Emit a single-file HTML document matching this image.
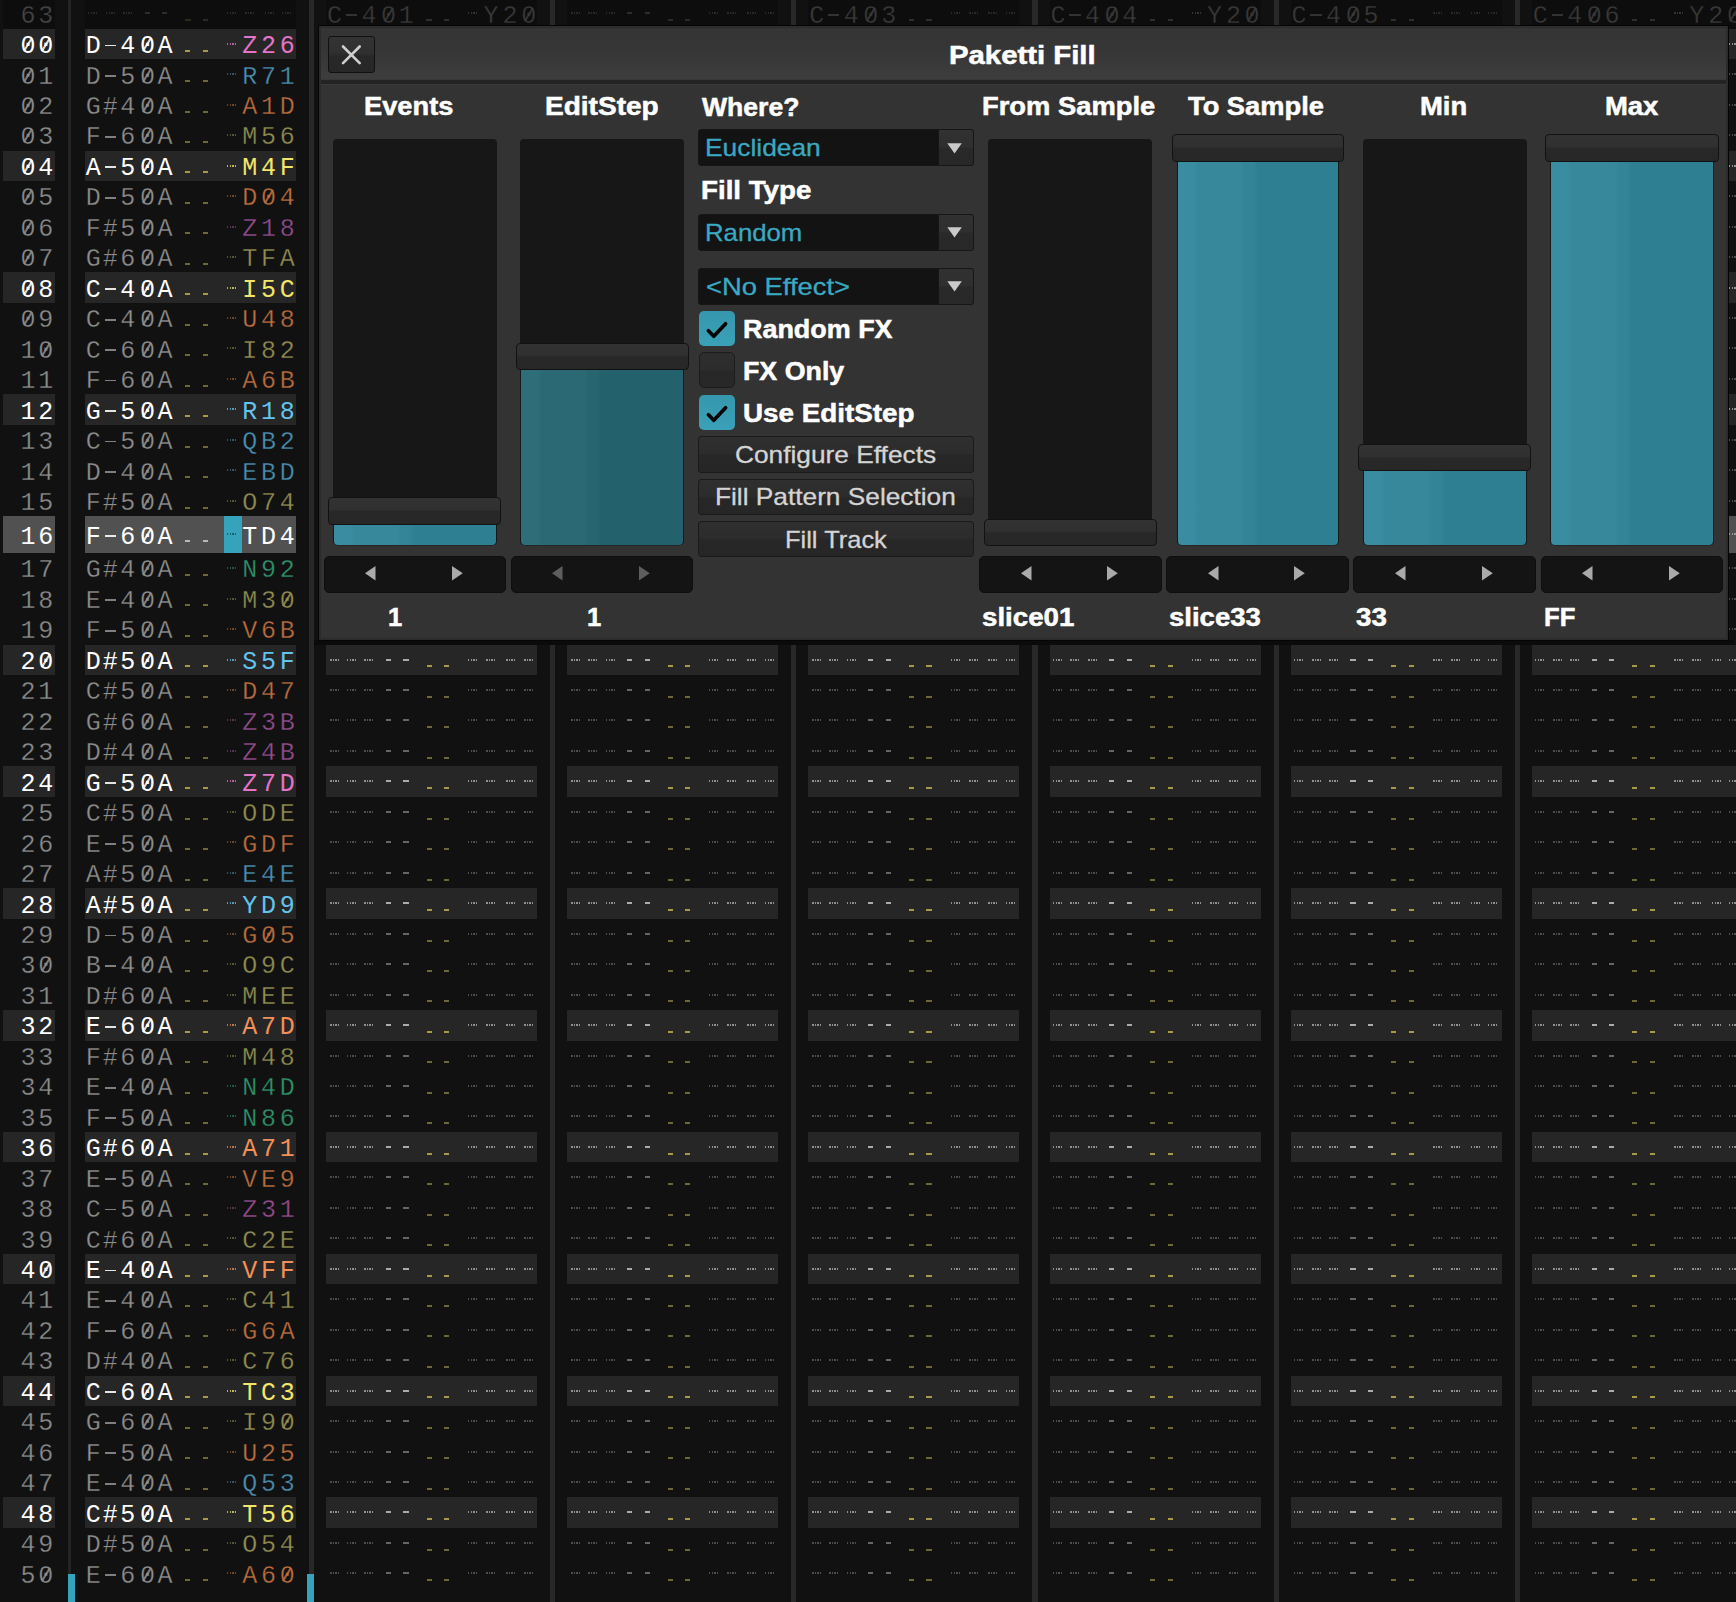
<!DOCTYPE html><html><head><meta charset="utf-8"><style>
*{margin:0;padding:0;box-sizing:border-box}
html,body{width:1736px;height:1602px;overflow:hidden;background:#111111;position:relative}
body{font-family:'Liberation Sans',sans-serif}
.t{position:absolute;white-space:nowrap;transform-origin:0 0;font-family:'Liberation Sans',sans-serif}
.a{position:absolute}
.m{position:absolute;font-family:'Liberation Mono',monospace;font-size:25px;line-height:25px;width:20px;text-align:center;white-space:nowrap;transform:scaleY(1.06);transform-origin:50% 12.5px}
.dg{position:absolute;width:9.5px;height:2px;background:repeating-linear-gradient(90deg,currentColor 0 1.5px,transparent 1.5px 2.6px);opacity:.85}
.z::after{content:'';position:absolute;left:9.1px;top:3.2px;width:1.5px;height:15px;background:currentColor;opacity:.85;transform:rotate(33deg)}
.dash{position:absolute;width:11.4px;height:1.8px;background:currentColor;opacity:.88}
.ds{position:absolute;width:5.2px;height:1.7px;background:currentColor}
</style></head><body>
<div class="a" style="left:68px;top:0;width:2.5px;height:1602px;background:#242424"></div>
<div class="a" style="left:309px;top:0;width:5.1px;height:1602px;background:#282828"></div>
<div class="a" style="left:550.15px;top:0;width:5.1px;height:1602px;background:#282828"></div>
<div class="a" style="left:791.3px;top:0;width:5.1px;height:1602px;background:#282828"></div>
<div class="a" style="left:1032.45px;top:0;width:5.1px;height:1602px;background:#282828"></div>
<div class="a" style="left:1273.6px;top:0;width:5.1px;height:1602px;background:#282828"></div>
<div class="a" style="left:1514.75px;top:0;width:5.1px;height:1602px;background:#282828"></div>
<div class="a" style="left:3px;top:-1.66px;width:52px;height:30.46px;background:#0d0d0d"></div>
<div class="m" style="left:18.1px;top:3.61px;color:#454545;-webkit-text-stroke:0.3px #0d0d0d">6</div>
<div class="m" style="left:35.8px;top:3.61px;color:#454545;-webkit-text-stroke:0.3px #0d0d0d">3</div>
<div class="a" style="left:85px;top:-1.66px;width:211px;height:30.46px;background:#0d0d0d"></div>
<div class="dg" style="left:88.4px;top:12px;color:#2e2e2e"></div>
<div class="dg" style="left:105.8px;top:12px;color:#2e2e2e"></div>
<div class="dg" style="left:123.3px;top:12px;color:#2e2e2e"></div>
<div class="ds" style="left:144.7px;top:12px;color:#2e2e2e"></div>
<div class="ds" style="left:162.3px;top:12px;color:#2e2e2e"></div>
<div class="ds" style="left:185.4px;top:19px;color:#2a2a20"></div>
<div class="ds" style="left:203px;top:19px;color:#2a2a20"></div>
<div class="dg" style="left:227.1px;top:12px;color:#2e2e2e"></div>
<div class="dg" style="left:245.1px;top:12px;color:#2e2e2e"></div>
<div class="dg" style="left:264.8px;top:12px;color:#2e2e2e"></div>
<div class="dg" style="left:282.4px;top:12px;color:#2e2e2e"></div>
<div class="a" style="left:326.15px;top:-1.66px;width:211px;height:30.46px;background:#0d0d0d"></div>
<div class="m" style="left:324.45px;top:3.61px;color:#393939;-webkit-text-stroke:0.3px #0d0d0d">C</div>
<div class="dash" style="left:345.75px;top:14.16px;color:#393939"></div>
<div class="m" style="left:358.95px;top:3.61px;color:#393939;-webkit-text-stroke:0.3px #0d0d0d">4</div>
<div class="m z" style="left:378.55px;top:3.61px;color:#393939;-webkit-text-stroke:0.3px #0d0d0d">0</div>
<div class="m" style="left:396.35px;top:3.61px;color:#393939;-webkit-text-stroke:0.3px #0d0d0d">1</div>
<div class="ds" style="left:426.35px;top:19px;color:#2e2e2e"></div>
<div class="ds" style="left:444.15px;top:19px;color:#2e2e2e"></div>
<div class="dg" style="left:468.15px;top:12px;color:#3a3a3a"></div>
<div class="m" style="left:480.95px;top:3.61px;color:#393939;-webkit-text-stroke:0.3px #0d0d0d">Y</div>
<div class="m" style="left:499.95px;top:3.61px;color:#393939;-webkit-text-stroke:0.3px #0d0d0d">2</div>
<div class="m z" style="left:518.65px;top:3.61px;color:#393939;-webkit-text-stroke:0.3px #0d0d0d">0</div>
<div class="a" style="left:567.3px;top:-1.66px;width:211px;height:30.46px;background:#0d0d0d"></div>
<div class="dg" style="left:570.7px;top:12px;color:#2e2e2e"></div>
<div class="dg" style="left:588.1px;top:12px;color:#2e2e2e"></div>
<div class="dg" style="left:605.6px;top:12px;color:#2e2e2e"></div>
<div class="ds" style="left:627px;top:12px;color:#2e2e2e"></div>
<div class="ds" style="left:644.6px;top:12px;color:#2e2e2e"></div>
<div class="ds" style="left:667.7px;top:19px;color:#2a2a20"></div>
<div class="ds" style="left:685.3px;top:19px;color:#2a2a20"></div>
<div class="dg" style="left:709.4px;top:12px;color:#2e2e2e"></div>
<div class="dg" style="left:727.4px;top:12px;color:#2e2e2e"></div>
<div class="dg" style="left:747.1px;top:12px;color:#2e2e2e"></div>
<div class="dg" style="left:764.7px;top:12px;color:#2e2e2e"></div>
<div class="a" style="left:808.45px;top:-1.66px;width:211px;height:30.46px;background:#0d0d0d"></div>
<div class="m" style="left:806.75px;top:3.61px;color:#393939;-webkit-text-stroke:0.3px #0d0d0d">C</div>
<div class="dash" style="left:828.05px;top:14.16px;color:#393939"></div>
<div class="m" style="left:841.25px;top:3.61px;color:#393939;-webkit-text-stroke:0.3px #0d0d0d">4</div>
<div class="m z" style="left:860.85px;top:3.61px;color:#393939;-webkit-text-stroke:0.3px #0d0d0d">0</div>
<div class="m" style="left:878.65px;top:3.61px;color:#393939;-webkit-text-stroke:0.3px #0d0d0d">3</div>
<div class="ds" style="left:908.65px;top:19px;color:#2e2e2e"></div>
<div class="ds" style="left:926.45px;top:19px;color:#2e2e2e"></div>
<div class="dg" style="left:950.55px;top:12px;color:#2e2e2e"></div>
<div class="dg" style="left:968.55px;top:12px;color:#2e2e2e"></div>
<div class="dg" style="left:988.25px;top:12px;color:#2e2e2e"></div>
<div class="dg" style="left:1005.85px;top:12px;color:#2e2e2e"></div>
<div class="a" style="left:1049.6px;top:-1.66px;width:211px;height:30.46px;background:#0d0d0d"></div>
<div class="m" style="left:1047.9px;top:3.61px;color:#393939;-webkit-text-stroke:0.3px #0d0d0d">C</div>
<div class="dash" style="left:1069.2px;top:14.16px;color:#393939"></div>
<div class="m" style="left:1082.4px;top:3.61px;color:#393939;-webkit-text-stroke:0.3px #0d0d0d">4</div>
<div class="m z" style="left:1102px;top:3.61px;color:#393939;-webkit-text-stroke:0.3px #0d0d0d">0</div>
<div class="m" style="left:1119.8px;top:3.61px;color:#393939;-webkit-text-stroke:0.3px #0d0d0d">4</div>
<div class="ds" style="left:1149.8px;top:19px;color:#2e2e2e"></div>
<div class="ds" style="left:1167.6px;top:19px;color:#2e2e2e"></div>
<div class="dg" style="left:1191.6px;top:12px;color:#3a3a3a"></div>
<div class="m" style="left:1204.4px;top:3.61px;color:#393939;-webkit-text-stroke:0.3px #0d0d0d">Y</div>
<div class="m" style="left:1223.4px;top:3.61px;color:#393939;-webkit-text-stroke:0.3px #0d0d0d">2</div>
<div class="m z" style="left:1242.1px;top:3.61px;color:#393939;-webkit-text-stroke:0.3px #0d0d0d">0</div>
<div class="a" style="left:1290.75px;top:-1.66px;width:211px;height:30.46px;background:#0d0d0d"></div>
<div class="m" style="left:1289.05px;top:3.61px;color:#393939;-webkit-text-stroke:0.3px #0d0d0d">C</div>
<div class="dash" style="left:1310.35px;top:14.16px;color:#393939"></div>
<div class="m" style="left:1323.55px;top:3.61px;color:#393939;-webkit-text-stroke:0.3px #0d0d0d">4</div>
<div class="m z" style="left:1343.15px;top:3.61px;color:#393939;-webkit-text-stroke:0.3px #0d0d0d">0</div>
<div class="m" style="left:1360.95px;top:3.61px;color:#393939;-webkit-text-stroke:0.3px #0d0d0d">5</div>
<div class="ds" style="left:1390.95px;top:19px;color:#2e2e2e"></div>
<div class="ds" style="left:1408.75px;top:19px;color:#2e2e2e"></div>
<div class="dg" style="left:1432.85px;top:12px;color:#2e2e2e"></div>
<div class="dg" style="left:1450.85px;top:12px;color:#2e2e2e"></div>
<div class="dg" style="left:1470.55px;top:12px;color:#2e2e2e"></div>
<div class="dg" style="left:1488.15px;top:12px;color:#2e2e2e"></div>
<div class="a" style="left:1531.9px;top:-1.66px;width:211px;height:30.46px;background:#0d0d0d"></div>
<div class="m" style="left:1530.2px;top:3.61px;color:#393939;-webkit-text-stroke:0.3px #0d0d0d">C</div>
<div class="dash" style="left:1551.5px;top:14.16px;color:#393939"></div>
<div class="m" style="left:1564.7px;top:3.61px;color:#393939;-webkit-text-stroke:0.3px #0d0d0d">4</div>
<div class="m z" style="left:1584.3px;top:3.61px;color:#393939;-webkit-text-stroke:0.3px #0d0d0d">0</div>
<div class="m" style="left:1602.1px;top:3.61px;color:#393939;-webkit-text-stroke:0.3px #0d0d0d">6</div>
<div class="ds" style="left:1632.1px;top:19px;color:#2e2e2e"></div>
<div class="ds" style="left:1649.9px;top:19px;color:#2e2e2e"></div>
<div class="dg" style="left:1673.9px;top:12px;color:#3a3a3a"></div>
<div class="m" style="left:1686.7px;top:3.61px;color:#393939;-webkit-text-stroke:0.3px #0d0d0d">Y</div>
<div class="m" style="left:1705.7px;top:3.61px;color:#393939;-webkit-text-stroke:0.3px #0d0d0d">2</div>
<div class="m z" style="left:1724.4px;top:3.61px;color:#393939;-webkit-text-stroke:0.3px #0d0d0d">0</div>
<div class="a" style="left:3px;top:28.8px;width:52px;height:30.46px;background:#262626"></div>
<div class="m z" style="left:18.1px;top:34.08px;color:#ffffff">0</div>
<div class="m z" style="left:35.8px;top:34.08px;color:#ffffff">0</div>
<div class="a" style="left:85px;top:28.8px;width:211px;height:30.46px;background:#262626"></div>
<div class="m" style="left:83.3px;top:34.08px;color:#ffffff">D</div>
<div class="dash" style="left:104.6px;top:44.63px;color:#ffffff"></div>
<div class="m" style="left:117.8px;top:34.08px;color:#ffffff">4</div>
<div class="m z" style="left:137.4px;top:34.08px;color:#ffffff">0</div>
<div class="m" style="left:155px;top:34.08px;color:#ffffff">A</div>
<div class="ds" style="left:185.2px;top:50px;color:#a89a48"></div>
<div class="ds" style="left:202.9px;top:50px;color:#a89a48"></div>
<div class="dg" style="left:227px;top:43px;color:#e474c8;opacity:.75;height:1.6px"></div>
<div class="m" style="left:239.8px;top:34.08px;color:#e474c8">Z</div>
<div class="m" style="left:258.6px;top:34.08px;color:#e474c8">2</div>
<div class="m" style="left:277.3px;top:34.08px;color:#e474c8">6</div>
<div class="a" style="left:326.15px;top:28.8px;width:211px;height:30.46px;background:#262626"></div>
<div class="dg" style="left:329.55px;top:43px;color:#a4a4a4"></div>
<div class="dg" style="left:346.95px;top:43px;color:#a4a4a4"></div>
<div class="dg" style="left:364.45px;top:43px;color:#a4a4a4"></div>
<div class="ds" style="left:385.85px;top:43px;color:#acacac"></div>
<div class="ds" style="left:403.45px;top:43px;color:#acacac"></div>
<div class="ds" style="left:426.55px;top:50px;color:#a89a48"></div>
<div class="ds" style="left:444.15px;top:50px;color:#a89a48"></div>
<div class="dg" style="left:468.25px;top:43px;color:#a4a4a4"></div>
<div class="dg" style="left:486.25px;top:43px;color:#a4a4a4"></div>
<div class="dg" style="left:505.95px;top:43px;color:#a4a4a4"></div>
<div class="dg" style="left:523.55px;top:43px;color:#a4a4a4"></div>
<div class="a" style="left:567.3px;top:28.8px;width:211px;height:30.46px;background:#262626"></div>
<div class="dg" style="left:570.7px;top:43px;color:#a4a4a4"></div>
<div class="dg" style="left:588.1px;top:43px;color:#a4a4a4"></div>
<div class="dg" style="left:605.6px;top:43px;color:#a4a4a4"></div>
<div class="ds" style="left:627px;top:43px;color:#acacac"></div>
<div class="ds" style="left:644.6px;top:43px;color:#acacac"></div>
<div class="ds" style="left:667.7px;top:50px;color:#a89a48"></div>
<div class="ds" style="left:685.3px;top:50px;color:#a89a48"></div>
<div class="dg" style="left:709.4px;top:43px;color:#a4a4a4"></div>
<div class="dg" style="left:727.4px;top:43px;color:#a4a4a4"></div>
<div class="dg" style="left:747.1px;top:43px;color:#a4a4a4"></div>
<div class="dg" style="left:764.7px;top:43px;color:#a4a4a4"></div>
<div class="a" style="left:808.45px;top:28.8px;width:211px;height:30.46px;background:#262626"></div>
<div class="dg" style="left:811.85px;top:43px;color:#a4a4a4"></div>
<div class="dg" style="left:829.25px;top:43px;color:#a4a4a4"></div>
<div class="dg" style="left:846.75px;top:43px;color:#a4a4a4"></div>
<div class="ds" style="left:868.15px;top:43px;color:#acacac"></div>
<div class="ds" style="left:885.75px;top:43px;color:#acacac"></div>
<div class="ds" style="left:908.85px;top:50px;color:#a89a48"></div>
<div class="ds" style="left:926.45px;top:50px;color:#a89a48"></div>
<div class="dg" style="left:950.55px;top:43px;color:#a4a4a4"></div>
<div class="dg" style="left:968.55px;top:43px;color:#a4a4a4"></div>
<div class="dg" style="left:988.25px;top:43px;color:#a4a4a4"></div>
<div class="dg" style="left:1005.85px;top:43px;color:#a4a4a4"></div>
<div class="a" style="left:1049.6px;top:28.8px;width:211px;height:30.46px;background:#262626"></div>
<div class="dg" style="left:1053px;top:43px;color:#a4a4a4"></div>
<div class="dg" style="left:1070.4px;top:43px;color:#a4a4a4"></div>
<div class="dg" style="left:1087.9px;top:43px;color:#a4a4a4"></div>
<div class="ds" style="left:1109.3px;top:43px;color:#acacac"></div>
<div class="ds" style="left:1126.9px;top:43px;color:#acacac"></div>
<div class="ds" style="left:1150px;top:50px;color:#a89a48"></div>
<div class="ds" style="left:1167.6px;top:50px;color:#a89a48"></div>
<div class="dg" style="left:1191.7px;top:43px;color:#a4a4a4"></div>
<div class="dg" style="left:1209.7px;top:43px;color:#a4a4a4"></div>
<div class="dg" style="left:1229.4px;top:43px;color:#a4a4a4"></div>
<div class="dg" style="left:1247px;top:43px;color:#a4a4a4"></div>
<div class="a" style="left:1290.75px;top:28.8px;width:211px;height:30.46px;background:#262626"></div>
<div class="dg" style="left:1294.15px;top:43px;color:#a4a4a4"></div>
<div class="dg" style="left:1311.55px;top:43px;color:#a4a4a4"></div>
<div class="dg" style="left:1329.05px;top:43px;color:#a4a4a4"></div>
<div class="ds" style="left:1350.45px;top:43px;color:#acacac"></div>
<div class="ds" style="left:1368.05px;top:43px;color:#acacac"></div>
<div class="ds" style="left:1391.15px;top:50px;color:#a89a48"></div>
<div class="ds" style="left:1408.75px;top:50px;color:#a89a48"></div>
<div class="dg" style="left:1432.85px;top:43px;color:#a4a4a4"></div>
<div class="dg" style="left:1450.85px;top:43px;color:#a4a4a4"></div>
<div class="dg" style="left:1470.55px;top:43px;color:#a4a4a4"></div>
<div class="dg" style="left:1488.15px;top:43px;color:#a4a4a4"></div>
<div class="a" style="left:1531.9px;top:28.8px;width:211px;height:30.46px;background:#262626"></div>
<div class="dg" style="left:1535.3px;top:43px;color:#a4a4a4"></div>
<div class="dg" style="left:1552.7px;top:43px;color:#a4a4a4"></div>
<div class="dg" style="left:1570.2px;top:43px;color:#a4a4a4"></div>
<div class="ds" style="left:1591.6px;top:43px;color:#acacac"></div>
<div class="ds" style="left:1609.2px;top:43px;color:#acacac"></div>
<div class="ds" style="left:1632.3px;top:50px;color:#a89a48"></div>
<div class="ds" style="left:1649.9px;top:50px;color:#a89a48"></div>
<div class="dg" style="left:1674px;top:43px;color:#a4a4a4"></div>
<div class="dg" style="left:1692px;top:43px;color:#a4a4a4"></div>
<div class="dg" style="left:1711.7px;top:43px;color:#a4a4a4"></div>
<div class="dg" style="left:1729.3px;top:43px;color:#a4a4a4"></div>
<div class="m z" style="left:18.1px;top:64.54px;color:#8c8c8c;-webkit-text-stroke:0.3px #111111">0</div>
<div class="m" style="left:35.8px;top:64.54px;color:#8c8c8c;-webkit-text-stroke:0.3px #111111">1</div>
<div class="m" style="left:83.3px;top:64.54px;color:#8e8e8e;-webkit-text-stroke:0.3px #111111">D</div>
<div class="dash" style="left:104.6px;top:75.09px;color:#8e8e8e"></div>
<div class="m" style="left:117.8px;top:64.54px;color:#8e8e8e;-webkit-text-stroke:0.3px #111111">5</div>
<div class="m z" style="left:137.4px;top:64.54px;color:#8e8e8e;-webkit-text-stroke:0.3px #111111">0</div>
<div class="m" style="left:155px;top:64.54px;color:#8e8e8e;-webkit-text-stroke:0.3px #111111">A</div>
<div class="ds" style="left:185.2px;top:80px;color:#6e6836"></div>
<div class="ds" style="left:202.9px;top:80px;color:#6e6836"></div>
<div class="dg" style="left:227px;top:73px;color:#4a8eb2;opacity:.55;height:1.6px"></div>
<div class="m" style="left:239.8px;top:64.54px;color:#4a8eb2;-webkit-text-stroke:0.3px #111111">R</div>
<div class="m" style="left:258.6px;top:64.54px;color:#4a8eb2;-webkit-text-stroke:0.3px #111111">7</div>
<div class="m" style="left:277.3px;top:64.54px;color:#4a8eb2;-webkit-text-stroke:0.3px #111111">1</div>
<div class="dg" style="left:329.55px;top:73px;color:#585858"></div>
<div class="dg" style="left:346.95px;top:73px;color:#585858"></div>
<div class="dg" style="left:364.45px;top:73px;color:#585858"></div>
<div class="ds" style="left:385.85px;top:73px;color:#666666"></div>
<div class="ds" style="left:403.45px;top:73px;color:#666666"></div>
<div class="ds" style="left:426.55px;top:80px;color:#6e6836"></div>
<div class="ds" style="left:444.15px;top:80px;color:#6e6836"></div>
<div class="dg" style="left:468.25px;top:73px;color:#585858"></div>
<div class="dg" style="left:486.25px;top:73px;color:#585858"></div>
<div class="dg" style="left:505.95px;top:73px;color:#585858"></div>
<div class="dg" style="left:523.55px;top:73px;color:#585858"></div>
<div class="dg" style="left:570.7px;top:73px;color:#585858"></div>
<div class="dg" style="left:588.1px;top:73px;color:#585858"></div>
<div class="dg" style="left:605.6px;top:73px;color:#585858"></div>
<div class="ds" style="left:627px;top:73px;color:#666666"></div>
<div class="ds" style="left:644.6px;top:73px;color:#666666"></div>
<div class="ds" style="left:667.7px;top:80px;color:#6e6836"></div>
<div class="ds" style="left:685.3px;top:80px;color:#6e6836"></div>
<div class="dg" style="left:709.4px;top:73px;color:#585858"></div>
<div class="dg" style="left:727.4px;top:73px;color:#585858"></div>
<div class="dg" style="left:747.1px;top:73px;color:#585858"></div>
<div class="dg" style="left:764.7px;top:73px;color:#585858"></div>
<div class="dg" style="left:811.85px;top:73px;color:#585858"></div>
<div class="dg" style="left:829.25px;top:73px;color:#585858"></div>
<div class="dg" style="left:846.75px;top:73px;color:#585858"></div>
<div class="ds" style="left:868.15px;top:73px;color:#666666"></div>
<div class="ds" style="left:885.75px;top:73px;color:#666666"></div>
<div class="ds" style="left:908.85px;top:80px;color:#6e6836"></div>
<div class="ds" style="left:926.45px;top:80px;color:#6e6836"></div>
<div class="dg" style="left:950.55px;top:73px;color:#585858"></div>
<div class="dg" style="left:968.55px;top:73px;color:#585858"></div>
<div class="dg" style="left:988.25px;top:73px;color:#585858"></div>
<div class="dg" style="left:1005.85px;top:73px;color:#585858"></div>
<div class="dg" style="left:1053px;top:73px;color:#585858"></div>
<div class="dg" style="left:1070.4px;top:73px;color:#585858"></div>
<div class="dg" style="left:1087.9px;top:73px;color:#585858"></div>
<div class="ds" style="left:1109.3px;top:73px;color:#666666"></div>
<div class="ds" style="left:1126.9px;top:73px;color:#666666"></div>
<div class="ds" style="left:1150px;top:80px;color:#6e6836"></div>
<div class="ds" style="left:1167.6px;top:80px;color:#6e6836"></div>
<div class="dg" style="left:1191.7px;top:73px;color:#585858"></div>
<div class="dg" style="left:1209.7px;top:73px;color:#585858"></div>
<div class="dg" style="left:1229.4px;top:73px;color:#585858"></div>
<div class="dg" style="left:1247px;top:73px;color:#585858"></div>
<div class="dg" style="left:1294.15px;top:73px;color:#585858"></div>
<div class="dg" style="left:1311.55px;top:73px;color:#585858"></div>
<div class="dg" style="left:1329.05px;top:73px;color:#585858"></div>
<div class="ds" style="left:1350.45px;top:73px;color:#666666"></div>
<div class="ds" style="left:1368.05px;top:73px;color:#666666"></div>
<div class="ds" style="left:1391.15px;top:80px;color:#6e6836"></div>
<div class="ds" style="left:1408.75px;top:80px;color:#6e6836"></div>
<div class="dg" style="left:1432.85px;top:73px;color:#585858"></div>
<div class="dg" style="left:1450.85px;top:73px;color:#585858"></div>
<div class="dg" style="left:1470.55px;top:73px;color:#585858"></div>
<div class="dg" style="left:1488.15px;top:73px;color:#585858"></div>
<div class="dg" style="left:1535.3px;top:73px;color:#585858"></div>
<div class="dg" style="left:1552.7px;top:73px;color:#585858"></div>
<div class="dg" style="left:1570.2px;top:73px;color:#585858"></div>
<div class="ds" style="left:1591.6px;top:73px;color:#666666"></div>
<div class="ds" style="left:1609.2px;top:73px;color:#666666"></div>
<div class="ds" style="left:1632.3px;top:80px;color:#6e6836"></div>
<div class="ds" style="left:1649.9px;top:80px;color:#6e6836"></div>
<div class="dg" style="left:1674px;top:73px;color:#585858"></div>
<div class="dg" style="left:1692px;top:73px;color:#585858"></div>
<div class="dg" style="left:1711.7px;top:73px;color:#585858"></div>
<div class="dg" style="left:1729.3px;top:73px;color:#585858"></div>
<div class="m z" style="left:18.1px;top:95px;color:#8c8c8c;-webkit-text-stroke:0.3px #111111">0</div>
<div class="m" style="left:35.8px;top:95px;color:#8c8c8c;-webkit-text-stroke:0.3px #111111">2</div>
<div class="m" style="left:83.3px;top:95px;color:#8e8e8e;-webkit-text-stroke:0.3px #111111">G</div>
<div class="m" style="left:100.3px;top:95px;color:#8e8e8e;-webkit-text-stroke:0.3px #111111">#</div>
<div class="m" style="left:117.8px;top:95px;color:#8e8e8e;-webkit-text-stroke:0.3px #111111">4</div>
<div class="m z" style="left:137.4px;top:95px;color:#8e8e8e;-webkit-text-stroke:0.3px #111111">0</div>
<div class="m" style="left:155px;top:95px;color:#8e8e8e;-webkit-text-stroke:0.3px #111111">A</div>
<div class="ds" style="left:185.2px;top:111px;color:#6e6836"></div>
<div class="ds" style="left:202.9px;top:111px;color:#6e6836"></div>
<div class="dg" style="left:227px;top:104px;color:#bb6d3c;opacity:.55;height:1.6px"></div>
<div class="m" style="left:239.8px;top:95px;color:#bb6d3c;-webkit-text-stroke:0.3px #111111">A</div>
<div class="m" style="left:258.6px;top:95px;color:#bb6d3c;-webkit-text-stroke:0.3px #111111">1</div>
<div class="m" style="left:277.3px;top:95px;color:#bb6d3c;-webkit-text-stroke:0.3px #111111">D</div>
<div class="dg" style="left:329.55px;top:104px;color:#585858"></div>
<div class="dg" style="left:346.95px;top:104px;color:#585858"></div>
<div class="dg" style="left:364.45px;top:104px;color:#585858"></div>
<div class="ds" style="left:385.85px;top:104px;color:#666666"></div>
<div class="ds" style="left:403.45px;top:104px;color:#666666"></div>
<div class="ds" style="left:426.55px;top:111px;color:#6e6836"></div>
<div class="ds" style="left:444.15px;top:111px;color:#6e6836"></div>
<div class="dg" style="left:468.25px;top:104px;color:#585858"></div>
<div class="dg" style="left:486.25px;top:104px;color:#585858"></div>
<div class="dg" style="left:505.95px;top:104px;color:#585858"></div>
<div class="dg" style="left:523.55px;top:104px;color:#585858"></div>
<div class="dg" style="left:570.7px;top:104px;color:#585858"></div>
<div class="dg" style="left:588.1px;top:104px;color:#585858"></div>
<div class="dg" style="left:605.6px;top:104px;color:#585858"></div>
<div class="ds" style="left:627px;top:104px;color:#666666"></div>
<div class="ds" style="left:644.6px;top:104px;color:#666666"></div>
<div class="ds" style="left:667.7px;top:111px;color:#6e6836"></div>
<div class="ds" style="left:685.3px;top:111px;color:#6e6836"></div>
<div class="dg" style="left:709.4px;top:104px;color:#585858"></div>
<div class="dg" style="left:727.4px;top:104px;color:#585858"></div>
<div class="dg" style="left:747.1px;top:104px;color:#585858"></div>
<div class="dg" style="left:764.7px;top:104px;color:#585858"></div>
<div class="dg" style="left:811.85px;top:104px;color:#585858"></div>
<div class="dg" style="left:829.25px;top:104px;color:#585858"></div>
<div class="dg" style="left:846.75px;top:104px;color:#585858"></div>
<div class="ds" style="left:868.15px;top:104px;color:#666666"></div>
<div class="ds" style="left:885.75px;top:104px;color:#666666"></div>
<div class="ds" style="left:908.85px;top:111px;color:#6e6836"></div>
<div class="ds" style="left:926.45px;top:111px;color:#6e6836"></div>
<div class="dg" style="left:950.55px;top:104px;color:#585858"></div>
<div class="dg" style="left:968.55px;top:104px;color:#585858"></div>
<div class="dg" style="left:988.25px;top:104px;color:#585858"></div>
<div class="dg" style="left:1005.85px;top:104px;color:#585858"></div>
<div class="dg" style="left:1053px;top:104px;color:#585858"></div>
<div class="dg" style="left:1070.4px;top:104px;color:#585858"></div>
<div class="dg" style="left:1087.9px;top:104px;color:#585858"></div>
<div class="ds" style="left:1109.3px;top:104px;color:#666666"></div>
<div class="ds" style="left:1126.9px;top:104px;color:#666666"></div>
<div class="ds" style="left:1150px;top:111px;color:#6e6836"></div>
<div class="ds" style="left:1167.6px;top:111px;color:#6e6836"></div>
<div class="dg" style="left:1191.7px;top:104px;color:#585858"></div>
<div class="dg" style="left:1209.7px;top:104px;color:#585858"></div>
<div class="dg" style="left:1229.4px;top:104px;color:#585858"></div>
<div class="dg" style="left:1247px;top:104px;color:#585858"></div>
<div class="dg" style="left:1294.15px;top:104px;color:#585858"></div>
<div class="dg" style="left:1311.55px;top:104px;color:#585858"></div>
<div class="dg" style="left:1329.05px;top:104px;color:#585858"></div>
<div class="ds" style="left:1350.45px;top:104px;color:#666666"></div>
<div class="ds" style="left:1368.05px;top:104px;color:#666666"></div>
<div class="ds" style="left:1391.15px;top:111px;color:#6e6836"></div>
<div class="ds" style="left:1408.75px;top:111px;color:#6e6836"></div>
<div class="dg" style="left:1432.85px;top:104px;color:#585858"></div>
<div class="dg" style="left:1450.85px;top:104px;color:#585858"></div>
<div class="dg" style="left:1470.55px;top:104px;color:#585858"></div>
<div class="dg" style="left:1488.15px;top:104px;color:#585858"></div>
<div class="dg" style="left:1535.3px;top:104px;color:#585858"></div>
<div class="dg" style="left:1552.7px;top:104px;color:#585858"></div>
<div class="dg" style="left:1570.2px;top:104px;color:#585858"></div>
<div class="ds" style="left:1591.6px;top:104px;color:#666666"></div>
<div class="ds" style="left:1609.2px;top:104px;color:#666666"></div>
<div class="ds" style="left:1632.3px;top:111px;color:#6e6836"></div>
<div class="ds" style="left:1649.9px;top:111px;color:#6e6836"></div>
<div class="dg" style="left:1674px;top:104px;color:#585858"></div>
<div class="dg" style="left:1692px;top:104px;color:#585858"></div>
<div class="dg" style="left:1711.7px;top:104px;color:#585858"></div>
<div class="dg" style="left:1729.3px;top:104px;color:#585858"></div>
<div class="m z" style="left:18.1px;top:125.45px;color:#8c8c8c;-webkit-text-stroke:0.3px #111111">0</div>
<div class="m" style="left:35.8px;top:125.45px;color:#8c8c8c;-webkit-text-stroke:0.3px #111111">3</div>
<div class="m" style="left:83.3px;top:125.45px;color:#8e8e8e;-webkit-text-stroke:0.3px #111111">F</div>
<div class="dash" style="left:104.6px;top:136px;color:#8e8e8e"></div>
<div class="m" style="left:117.8px;top:125.45px;color:#8e8e8e;-webkit-text-stroke:0.3px #111111">6</div>
<div class="m z" style="left:137.4px;top:125.45px;color:#8e8e8e;-webkit-text-stroke:0.3px #111111">0</div>
<div class="m" style="left:155px;top:125.45px;color:#8e8e8e;-webkit-text-stroke:0.3px #111111">A</div>
<div class="ds" style="left:185.2px;top:141px;color:#6e6836"></div>
<div class="ds" style="left:202.9px;top:141px;color:#6e6836"></div>
<div class="dg" style="left:227px;top:134px;color:#928d50;opacity:.55;height:1.6px"></div>
<div class="m" style="left:239.8px;top:125.45px;color:#928d50;-webkit-text-stroke:0.3px #111111">M</div>
<div class="m" style="left:258.6px;top:125.45px;color:#928d50;-webkit-text-stroke:0.3px #111111">5</div>
<div class="m" style="left:277.3px;top:125.45px;color:#928d50;-webkit-text-stroke:0.3px #111111">6</div>
<div class="dg" style="left:329.55px;top:134px;color:#585858"></div>
<div class="dg" style="left:346.95px;top:134px;color:#585858"></div>
<div class="dg" style="left:364.45px;top:134px;color:#585858"></div>
<div class="ds" style="left:385.85px;top:134px;color:#666666"></div>
<div class="ds" style="left:403.45px;top:134px;color:#666666"></div>
<div class="ds" style="left:426.55px;top:141px;color:#6e6836"></div>
<div class="ds" style="left:444.15px;top:141px;color:#6e6836"></div>
<div class="dg" style="left:468.25px;top:134px;color:#585858"></div>
<div class="dg" style="left:486.25px;top:134px;color:#585858"></div>
<div class="dg" style="left:505.95px;top:134px;color:#585858"></div>
<div class="dg" style="left:523.55px;top:134px;color:#585858"></div>
<div class="dg" style="left:570.7px;top:134px;color:#585858"></div>
<div class="dg" style="left:588.1px;top:134px;color:#585858"></div>
<div class="dg" style="left:605.6px;top:134px;color:#585858"></div>
<div class="ds" style="left:627px;top:134px;color:#666666"></div>
<div class="ds" style="left:644.6px;top:134px;color:#666666"></div>
<div class="ds" style="left:667.7px;top:141px;color:#6e6836"></div>
<div class="ds" style="left:685.3px;top:141px;color:#6e6836"></div>
<div class="dg" style="left:709.4px;top:134px;color:#585858"></div>
<div class="dg" style="left:727.4px;top:134px;color:#585858"></div>
<div class="dg" style="left:747.1px;top:134px;color:#585858"></div>
<div class="dg" style="left:764.7px;top:134px;color:#585858"></div>
<div class="dg" style="left:811.85px;top:134px;color:#585858"></div>
<div class="dg" style="left:829.25px;top:134px;color:#585858"></div>
<div class="dg" style="left:846.75px;top:134px;color:#585858"></div>
<div class="ds" style="left:868.15px;top:134px;color:#666666"></div>
<div class="ds" style="left:885.75px;top:134px;color:#666666"></div>
<div class="ds" style="left:908.85px;top:141px;color:#6e6836"></div>
<div class="ds" style="left:926.45px;top:141px;color:#6e6836"></div>
<div class="dg" style="left:950.55px;top:134px;color:#585858"></div>
<div class="dg" style="left:968.55px;top:134px;color:#585858"></div>
<div class="dg" style="left:988.25px;top:134px;color:#585858"></div>
<div class="dg" style="left:1005.85px;top:134px;color:#585858"></div>
<div class="dg" style="left:1053px;top:134px;color:#585858"></div>
<div class="dg" style="left:1070.4px;top:134px;color:#585858"></div>
<div class="dg" style="left:1087.9px;top:134px;color:#585858"></div>
<div class="ds" style="left:1109.3px;top:134px;color:#666666"></div>
<div class="ds" style="left:1126.9px;top:134px;color:#666666"></div>
<div class="ds" style="left:1150px;top:141px;color:#6e6836"></div>
<div class="ds" style="left:1167.6px;top:141px;color:#6e6836"></div>
<div class="dg" style="left:1191.7px;top:134px;color:#585858"></div>
<div class="dg" style="left:1209.7px;top:134px;color:#585858"></div>
<div class="dg" style="left:1229.4px;top:134px;color:#585858"></div>
<div class="dg" style="left:1247px;top:134px;color:#585858"></div>
<div class="dg" style="left:1294.15px;top:134px;color:#585858"></div>
<div class="dg" style="left:1311.55px;top:134px;color:#585858"></div>
<div class="dg" style="left:1329.05px;top:134px;color:#585858"></div>
<div class="ds" style="left:1350.45px;top:134px;color:#666666"></div>
<div class="ds" style="left:1368.05px;top:134px;color:#666666"></div>
<div class="ds" style="left:1391.15px;top:141px;color:#6e6836"></div>
<div class="ds" style="left:1408.75px;top:141px;color:#6e6836"></div>
<div class="dg" style="left:1432.85px;top:134px;color:#585858"></div>
<div class="dg" style="left:1450.85px;top:134px;color:#585858"></div>
<div class="dg" style="left:1470.55px;top:134px;color:#585858"></div>
<div class="dg" style="left:1488.15px;top:134px;color:#585858"></div>
<div class="dg" style="left:1535.3px;top:134px;color:#585858"></div>
<div class="dg" style="left:1552.7px;top:134px;color:#585858"></div>
<div class="dg" style="left:1570.2px;top:134px;color:#585858"></div>
<div class="ds" style="left:1591.6px;top:134px;color:#666666"></div>
<div class="ds" style="left:1609.2px;top:134px;color:#666666"></div>
<div class="ds" style="left:1632.3px;top:141px;color:#6e6836"></div>
<div class="ds" style="left:1649.9px;top:141px;color:#6e6836"></div>
<div class="dg" style="left:1674px;top:134px;color:#585858"></div>
<div class="dg" style="left:1692px;top:134px;color:#585858"></div>
<div class="dg" style="left:1711.7px;top:134px;color:#585858"></div>
<div class="dg" style="left:1729.3px;top:134px;color:#585858"></div>
<div class="a" style="left:3px;top:150.64px;width:52px;height:30.46px;background:#262626"></div>
<div class="m z" style="left:18.1px;top:155.91px;color:#ffffff">0</div>
<div class="m" style="left:35.8px;top:155.91px;color:#ffffff">4</div>
<div class="a" style="left:85px;top:150.64px;width:211px;height:30.46px;background:#262626"></div>
<div class="m" style="left:83.3px;top:155.91px;color:#ffffff">A</div>
<div class="dash" style="left:104.6px;top:166.46px;color:#ffffff"></div>
<div class="m" style="left:117.8px;top:155.91px;color:#ffffff">5</div>
<div class="m z" style="left:137.4px;top:155.91px;color:#ffffff">0</div>
<div class="m" style="left:155px;top:155.91px;color:#ffffff">A</div>
<div class="ds" style="left:185.2px;top:171px;color:#a89a48"></div>
<div class="ds" style="left:202.9px;top:171px;color:#a89a48"></div>
<div class="dg" style="left:227px;top:165px;color:#f2e66a;opacity:.75;height:1.6px"></div>
<div class="m" style="left:239.8px;top:155.91px;color:#f2e66a">M</div>
<div class="m" style="left:258.6px;top:155.91px;color:#f2e66a">4</div>
<div class="m" style="left:277.3px;top:155.91px;color:#f2e66a">F</div>
<div class="a" style="left:326.15px;top:150.64px;width:211px;height:30.46px;background:#262626"></div>
<div class="dg" style="left:329.55px;top:165px;color:#a4a4a4"></div>
<div class="dg" style="left:346.95px;top:165px;color:#a4a4a4"></div>
<div class="dg" style="left:364.45px;top:165px;color:#a4a4a4"></div>
<div class="ds" style="left:385.85px;top:165px;color:#acacac"></div>
<div class="ds" style="left:403.45px;top:165px;color:#acacac"></div>
<div class="ds" style="left:426.55px;top:171px;color:#a89a48"></div>
<div class="ds" style="left:444.15px;top:171px;color:#a89a48"></div>
<div class="dg" style="left:468.25px;top:165px;color:#a4a4a4"></div>
<div class="dg" style="left:486.25px;top:165px;color:#a4a4a4"></div>
<div class="dg" style="left:505.95px;top:165px;color:#a4a4a4"></div>
<div class="dg" style="left:523.55px;top:165px;color:#a4a4a4"></div>
<div class="a" style="left:567.3px;top:150.64px;width:211px;height:30.46px;background:#262626"></div>
<div class="dg" style="left:570.7px;top:165px;color:#a4a4a4"></div>
<div class="dg" style="left:588.1px;top:165px;color:#a4a4a4"></div>
<div class="dg" style="left:605.6px;top:165px;color:#a4a4a4"></div>
<div class="ds" style="left:627px;top:165px;color:#acacac"></div>
<div class="ds" style="left:644.6px;top:165px;color:#acacac"></div>
<div class="ds" style="left:667.7px;top:171px;color:#a89a48"></div>
<div class="ds" style="left:685.3px;top:171px;color:#a89a48"></div>
<div class="dg" style="left:709.4px;top:165px;color:#a4a4a4"></div>
<div class="dg" style="left:727.4px;top:165px;color:#a4a4a4"></div>
<div class="dg" style="left:747.1px;top:165px;color:#a4a4a4"></div>
<div class="dg" style="left:764.7px;top:165px;color:#a4a4a4"></div>
<div class="a" style="left:808.45px;top:150.64px;width:211px;height:30.46px;background:#262626"></div>
<div class="dg" style="left:811.85px;top:165px;color:#a4a4a4"></div>
<div class="dg" style="left:829.25px;top:165px;color:#a4a4a4"></div>
<div class="dg" style="left:846.75px;top:165px;color:#a4a4a4"></div>
<div class="ds" style="left:868.15px;top:165px;color:#acacac"></div>
<div class="ds" style="left:885.75px;top:165px;color:#acacac"></div>
<div class="ds" style="left:908.85px;top:171px;color:#a89a48"></div>
<div class="ds" style="left:926.45px;top:171px;color:#a89a48"></div>
<div class="dg" style="left:950.55px;top:165px;color:#a4a4a4"></div>
<div class="dg" style="left:968.55px;top:165px;color:#a4a4a4"></div>
<div class="dg" style="left:988.25px;top:165px;color:#a4a4a4"></div>
<div class="dg" style="left:1005.85px;top:165px;color:#a4a4a4"></div>
<div class="a" style="left:1049.6px;top:150.64px;width:211px;height:30.46px;background:#262626"></div>
<div class="dg" style="left:1053px;top:165px;color:#a4a4a4"></div>
<div class="dg" style="left:1070.4px;top:165px;color:#a4a4a4"></div>
<div class="dg" style="left:1087.9px;top:165px;color:#a4a4a4"></div>
<div class="ds" style="left:1109.3px;top:165px;color:#acacac"></div>
<div class="ds" style="left:1126.9px;top:165px;color:#acacac"></div>
<div class="ds" style="left:1150px;top:171px;color:#a89a48"></div>
<div class="ds" style="left:1167.6px;top:171px;color:#a89a48"></div>
<div class="dg" style="left:1191.7px;top:165px;color:#a4a4a4"></div>
<div class="dg" style="left:1209.7px;top:165px;color:#a4a4a4"></div>
<div class="dg" style="left:1229.4px;top:165px;color:#a4a4a4"></div>
<div class="dg" style="left:1247px;top:165px;color:#a4a4a4"></div>
<div class="a" style="left:1290.75px;top:150.64px;width:211px;height:30.46px;background:#262626"></div>
<div class="dg" style="left:1294.15px;top:165px;color:#a4a4a4"></div>
<div class="dg" style="left:1311.55px;top:165px;color:#a4a4a4"></div>
<div class="dg" style="left:1329.05px;top:165px;color:#a4a4a4"></div>
<div class="ds" style="left:1350.45px;top:165px;color:#acacac"></div>
<div class="ds" style="left:1368.05px;top:165px;color:#acacac"></div>
<div class="ds" style="left:1391.15px;top:171px;color:#a89a48"></div>
<div class="ds" style="left:1408.75px;top:171px;color:#a89a48"></div>
<div class="dg" style="left:1432.85px;top:165px;color:#a4a4a4"></div>
<div class="dg" style="left:1450.85px;top:165px;color:#a4a4a4"></div>
<div class="dg" style="left:1470.55px;top:165px;color:#a4a4a4"></div>
<div class="dg" style="left:1488.15px;top:165px;color:#a4a4a4"></div>
<div class="a" style="left:1531.9px;top:150.64px;width:211px;height:30.46px;background:#262626"></div>
<div class="dg" style="left:1535.3px;top:165px;color:#a4a4a4"></div>
<div class="dg" style="left:1552.7px;top:165px;color:#a4a4a4"></div>
<div class="dg" style="left:1570.2px;top:165px;color:#a4a4a4"></div>
<div class="ds" style="left:1591.6px;top:165px;color:#acacac"></div>
<div class="ds" style="left:1609.2px;top:165px;color:#acacac"></div>
<div class="ds" style="left:1632.3px;top:171px;color:#a89a48"></div>
<div class="ds" style="left:1649.9px;top:171px;color:#a89a48"></div>
<div class="dg" style="left:1674px;top:165px;color:#a4a4a4"></div>
<div class="dg" style="left:1692px;top:165px;color:#a4a4a4"></div>
<div class="dg" style="left:1711.7px;top:165px;color:#a4a4a4"></div>
<div class="dg" style="left:1729.3px;top:165px;color:#a4a4a4"></div>
<div class="m z" style="left:18.1px;top:186.38px;color:#8c8c8c;-webkit-text-stroke:0.3px #111111">0</div>
<div class="m" style="left:35.8px;top:186.38px;color:#8c8c8c;-webkit-text-stroke:0.3px #111111">5</div>
<div class="m" style="left:83.3px;top:186.38px;color:#8e8e8e;-webkit-text-stroke:0.3px #111111">D</div>
<div class="dash" style="left:104.6px;top:196.92px;color:#8e8e8e"></div>
<div class="m" style="left:117.8px;top:186.38px;color:#8e8e8e;-webkit-text-stroke:0.3px #111111">5</div>
<div class="m z" style="left:137.4px;top:186.38px;color:#8e8e8e;-webkit-text-stroke:0.3px #111111">0</div>
<div class="m" style="left:155px;top:186.38px;color:#8e8e8e;-webkit-text-stroke:0.3px #111111">A</div>
<div class="ds" style="left:185.2px;top:202px;color:#6e6836"></div>
<div class="ds" style="left:202.9px;top:202px;color:#6e6836"></div>
<div class="dg" style="left:227px;top:195px;color:#bb6d3c;opacity:.55;height:1.6px"></div>
<div class="m" style="left:239.8px;top:186.38px;color:#bb6d3c;-webkit-text-stroke:0.3px #111111">D</div>
<div class="m z" style="left:258.6px;top:186.38px;color:#bb6d3c;-webkit-text-stroke:0.3px #111111">0</div>
<div class="m" style="left:277.3px;top:186.38px;color:#bb6d3c;-webkit-text-stroke:0.3px #111111">4</div>
<div class="dg" style="left:329.55px;top:195px;color:#585858"></div>
<div class="dg" style="left:346.95px;top:195px;color:#585858"></div>
<div class="dg" style="left:364.45px;top:195px;color:#585858"></div>
<div class="ds" style="left:385.85px;top:195px;color:#666666"></div>
<div class="ds" style="left:403.45px;top:195px;color:#666666"></div>
<div class="ds" style="left:426.55px;top:202px;color:#6e6836"></div>
<div class="ds" style="left:444.15px;top:202px;color:#6e6836"></div>
<div class="dg" style="left:468.25px;top:195px;color:#585858"></div>
<div class="dg" style="left:486.25px;top:195px;color:#585858"></div>
<div class="dg" style="left:505.95px;top:195px;color:#585858"></div>
<div class="dg" style="left:523.55px;top:195px;color:#585858"></div>
<div class="dg" style="left:570.7px;top:195px;color:#585858"></div>
<div class="dg" style="left:588.1px;top:195px;color:#585858"></div>
<div class="dg" style="left:605.6px;top:195px;color:#585858"></div>
<div class="ds" style="left:627px;top:195px;color:#666666"></div>
<div class="ds" style="left:644.6px;top:195px;color:#666666"></div>
<div class="ds" style="left:667.7px;top:202px;color:#6e6836"></div>
<div class="ds" style="left:685.3px;top:202px;color:#6e6836"></div>
<div class="dg" style="left:709.4px;top:195px;color:#585858"></div>
<div class="dg" style="left:727.4px;top:195px;color:#585858"></div>
<div class="dg" style="left:747.1px;top:195px;color:#585858"></div>
<div class="dg" style="left:764.7px;top:195px;color:#585858"></div>
<div class="dg" style="left:811.85px;top:195px;color:#585858"></div>
<div class="dg" style="left:829.25px;top:195px;color:#585858"></div>
<div class="dg" style="left:846.75px;top:195px;color:#585858"></div>
<div class="ds" style="left:868.15px;top:195px;color:#666666"></div>
<div class="ds" style="left:885.75px;top:195px;color:#666666"></div>
<div class="ds" style="left:908.85px;top:202px;color:#6e6836"></div>
<div class="ds" style="left:926.45px;top:202px;color:#6e6836"></div>
<div class="dg" style="left:950.55px;top:195px;color:#585858"></div>
<div class="dg" style="left:968.55px;top:195px;color:#585858"></div>
<div class="dg" style="left:988.25px;top:195px;color:#585858"></div>
<div class="dg" style="left:1005.85px;top:195px;color:#585858"></div>
<div class="dg" style="left:1053px;top:195px;color:#585858"></div>
<div class="dg" style="left:1070.4px;top:195px;color:#585858"></div>
<div class="dg" style="left:1087.9px;top:195px;color:#585858"></div>
<div class="ds" style="left:1109.3px;top:195px;color:#666666"></div>
<div class="ds" style="left:1126.9px;top:195px;color:#666666"></div>
<div class="ds" style="left:1150px;top:202px;color:#6e6836"></div>
<div class="ds" style="left:1167.6px;top:202px;color:#6e6836"></div>
<div class="dg" style="left:1191.7px;top:195px;color:#585858"></div>
<div class="dg" style="left:1209.7px;top:195px;color:#585858"></div>
<div class="dg" style="left:1229.4px;top:195px;color:#585858"></div>
<div class="dg" style="left:1247px;top:195px;color:#585858"></div>
<div class="dg" style="left:1294.15px;top:195px;color:#585858"></div>
<div class="dg" style="left:1311.55px;top:195px;color:#585858"></div>
<div class="dg" style="left:1329.05px;top:195px;color:#585858"></div>
<div class="ds" style="left:1350.45px;top:195px;color:#666666"></div>
<div class="ds" style="left:1368.05px;top:195px;color:#666666"></div>
<div class="ds" style="left:1391.15px;top:202px;color:#6e6836"></div>
<div class="ds" style="left:1408.75px;top:202px;color:#6e6836"></div>
<div class="dg" style="left:1432.85px;top:195px;color:#585858"></div>
<div class="dg" style="left:1450.85px;top:195px;color:#585858"></div>
<div class="dg" style="left:1470.55px;top:195px;color:#585858"></div>
<div class="dg" style="left:1488.15px;top:195px;color:#585858"></div>
<div class="dg" style="left:1535.3px;top:195px;color:#585858"></div>
<div class="dg" style="left:1552.7px;top:195px;color:#585858"></div>
<div class="dg" style="left:1570.2px;top:195px;color:#585858"></div>
<div class="ds" style="left:1591.6px;top:195px;color:#666666"></div>
<div class="ds" style="left:1609.2px;top:195px;color:#666666"></div>
<div class="ds" style="left:1632.3px;top:202px;color:#6e6836"></div>
<div class="ds" style="left:1649.9px;top:202px;color:#6e6836"></div>
<div class="dg" style="left:1674px;top:195px;color:#585858"></div>
<div class="dg" style="left:1692px;top:195px;color:#585858"></div>
<div class="dg" style="left:1711.7px;top:195px;color:#585858"></div>
<div class="dg" style="left:1729.3px;top:195px;color:#585858"></div>
<div class="m z" style="left:18.1px;top:216.83px;color:#8c8c8c;-webkit-text-stroke:0.3px #111111">0</div>
<div class="m" style="left:35.8px;top:216.83px;color:#8c8c8c;-webkit-text-stroke:0.3px #111111">6</div>
<div class="m" style="left:83.3px;top:216.83px;color:#8e8e8e;-webkit-text-stroke:0.3px #111111">F</div>
<div class="m" style="left:100.3px;top:216.83px;color:#8e8e8e;-webkit-text-stroke:0.3px #111111">#</div>
<div class="m" style="left:117.8px;top:216.83px;color:#8e8e8e;-webkit-text-stroke:0.3px #111111">5</div>
<div class="m z" style="left:137.4px;top:216.83px;color:#8e8e8e;-webkit-text-stroke:0.3px #111111">0</div>
<div class="m" style="left:155px;top:216.83px;color:#8e8e8e;-webkit-text-stroke:0.3px #111111">A</div>
<div class="ds" style="left:185.2px;top:232px;color:#6e6836"></div>
<div class="ds" style="left:202.9px;top:232px;color:#6e6836"></div>
<div class="dg" style="left:227px;top:226px;color:#924c8c;opacity:.55;height:1.6px"></div>
<div class="m" style="left:239.8px;top:216.83px;color:#924c8c;-webkit-text-stroke:0.3px #111111">Z</div>
<div class="m" style="left:258.6px;top:216.83px;color:#924c8c;-webkit-text-stroke:0.3px #111111">1</div>
<div class="m" style="left:277.3px;top:216.83px;color:#924c8c;-webkit-text-stroke:0.3px #111111">8</div>
<div class="dg" style="left:329.55px;top:226px;color:#585858"></div>
<div class="dg" style="left:346.95px;top:226px;color:#585858"></div>
<div class="dg" style="left:364.45px;top:226px;color:#585858"></div>
<div class="ds" style="left:385.85px;top:226px;color:#666666"></div>
<div class="ds" style="left:403.45px;top:226px;color:#666666"></div>
<div class="ds" style="left:426.55px;top:232px;color:#6e6836"></div>
<div class="ds" style="left:444.15px;top:232px;color:#6e6836"></div>
<div class="dg" style="left:468.25px;top:226px;color:#585858"></div>
<div class="dg" style="left:486.25px;top:226px;color:#585858"></div>
<div class="dg" style="left:505.95px;top:226px;color:#585858"></div>
<div class="dg" style="left:523.55px;top:226px;color:#585858"></div>
<div class="dg" style="left:570.7px;top:226px;color:#585858"></div>
<div class="dg" style="left:588.1px;top:226px;color:#585858"></div>
<div class="dg" style="left:605.6px;top:226px;color:#585858"></div>
<div class="ds" style="left:627px;top:226px;color:#666666"></div>
<div class="ds" style="left:644.6px;top:226px;color:#666666"></div>
<div class="ds" style="left:667.7px;top:232px;color:#6e6836"></div>
<div class="ds" style="left:685.3px;top:232px;color:#6e6836"></div>
<div class="dg" style="left:709.4px;top:226px;color:#585858"></div>
<div class="dg" style="left:727.4px;top:226px;color:#585858"></div>
<div class="dg" style="left:747.1px;top:226px;color:#585858"></div>
<div class="dg" style="left:764.7px;top:226px;color:#585858"></div>
<div class="dg" style="left:811.85px;top:226px;color:#585858"></div>
<div class="dg" style="left:829.25px;top:226px;color:#585858"></div>
<div class="dg" style="left:846.75px;top:226px;color:#585858"></div>
<div class="ds" style="left:868.15px;top:226px;color:#666666"></div>
<div class="ds" style="left:885.75px;top:226px;color:#666666"></div>
<div class="ds" style="left:908.85px;top:232px;color:#6e6836"></div>
<div class="ds" style="left:926.45px;top:232px;color:#6e6836"></div>
<div class="dg" style="left:950.55px;top:226px;color:#585858"></div>
<div class="dg" style="left:968.55px;top:226px;color:#585858"></div>
<div class="dg" style="left:988.25px;top:226px;color:#585858"></div>
<div class="dg" style="left:1005.85px;top:226px;color:#585858"></div>
<div class="dg" style="left:1053px;top:226px;color:#585858"></div>
<div class="dg" style="left:1070.4px;top:226px;color:#585858"></div>
<div class="dg" style="left:1087.9px;top:226px;color:#585858"></div>
<div class="ds" style="left:1109.3px;top:226px;color:#666666"></div>
<div class="ds" style="left:1126.9px;top:226px;color:#666666"></div>
<div class="ds" style="left:1150px;top:232px;color:#6e6836"></div>
<div class="ds" style="left:1167.6px;top:232px;color:#6e6836"></div>
<div class="dg" style="left:1191.7px;top:226px;color:#585858"></div>
<div class="dg" style="left:1209.7px;top:226px;color:#585858"></div>
<div class="dg" style="left:1229.4px;top:226px;color:#585858"></div>
<div class="dg" style="left:1247px;top:226px;color:#585858"></div>
<div class="dg" style="left:1294.15px;top:226px;color:#585858"></div>
<div class="dg" style="left:1311.55px;top:226px;color:#585858"></div>
<div class="dg" style="left:1329.05px;top:226px;color:#585858"></div>
<div class="ds" style="left:1350.45px;top:226px;color:#666666"></div>
<div class="ds" style="left:1368.05px;top:226px;color:#666666"></div>
<div class="ds" style="left:1391.15px;top:232px;color:#6e6836"></div>
<div class="ds" style="left:1408.75px;top:232px;color:#6e6836"></div>
<div class="dg" style="left:1432.85px;top:226px;color:#585858"></div>
<div class="dg" style="left:1450.85px;top:226px;color:#585858"></div>
<div class="dg" style="left:1470.55px;top:226px;color:#585858"></div>
<div class="dg" style="left:1488.15px;top:226px;color:#585858"></div>
<div class="dg" style="left:1535.3px;top:226px;color:#585858"></div>
<div class="dg" style="left:1552.7px;top:226px;color:#585858"></div>
<div class="dg" style="left:1570.2px;top:226px;color:#585858"></div>
<div class="ds" style="left:1591.6px;top:226px;color:#666666"></div>
<div class="ds" style="left:1609.2px;top:226px;color:#666666"></div>
<div class="ds" style="left:1632.3px;top:232px;color:#6e6836"></div>
<div class="ds" style="left:1649.9px;top:232px;color:#6e6836"></div>
<div class="dg" style="left:1674px;top:226px;color:#585858"></div>
<div class="dg" style="left:1692px;top:226px;color:#585858"></div>
<div class="dg" style="left:1711.7px;top:226px;color:#585858"></div>
<div class="dg" style="left:1729.3px;top:226px;color:#585858"></div>
<div class="m z" style="left:18.1px;top:247.29px;color:#8c8c8c;-webkit-text-stroke:0.3px #111111">0</div>
<div class="m" style="left:35.8px;top:247.29px;color:#8c8c8c;-webkit-text-stroke:0.3px #111111">7</div>
<div class="m" style="left:83.3px;top:247.29px;color:#8e8e8e;-webkit-text-stroke:0.3px #111111">G</div>
<div class="m" style="left:100.3px;top:247.29px;color:#8e8e8e;-webkit-text-stroke:0.3px #111111">#</div>
<div class="m" style="left:117.8px;top:247.29px;color:#8e8e8e;-webkit-text-stroke:0.3px #111111">6</div>
<div class="m z" style="left:137.4px;top:247.29px;color:#8e8e8e;-webkit-text-stroke:0.3px #111111">0</div>
<div class="m" style="left:155px;top:247.29px;color:#8e8e8e;-webkit-text-stroke:0.3px #111111">A</div>
<div class="ds" style="left:185.2px;top:263px;color:#6e6836"></div>
<div class="ds" style="left:202.9px;top:263px;color:#6e6836"></div>
<div class="dg" style="left:227px;top:256px;color:#928d50;opacity:.55;height:1.6px"></div>
<div class="m" style="left:239.8px;top:247.29px;color:#928d50;-webkit-text-stroke:0.3px #111111">T</div>
<div class="m" style="left:258.6px;top:247.29px;color:#928d50;-webkit-text-stroke:0.3px #111111">F</div>
<div class="m" style="left:277.3px;top:247.29px;color:#928d50;-webkit-text-stroke:0.3px #111111">A</div>
<div class="dg" style="left:329.55px;top:256px;color:#585858"></div>
<div class="dg" style="left:346.95px;top:256px;color:#585858"></div>
<div class="dg" style="left:364.45px;top:256px;color:#585858"></div>
<div class="ds" style="left:385.85px;top:256px;color:#666666"></div>
<div class="ds" style="left:403.45px;top:256px;color:#666666"></div>
<div class="ds" style="left:426.55px;top:263px;color:#6e6836"></div>
<div class="ds" style="left:444.15px;top:263px;color:#6e6836"></div>
<div class="dg" style="left:468.25px;top:256px;color:#585858"></div>
<div class="dg" style="left:486.25px;top:256px;color:#585858"></div>
<div class="dg" style="left:505.95px;top:256px;color:#585858"></div>
<div class="dg" style="left:523.55px;top:256px;color:#585858"></div>
<div class="dg" style="left:570.7px;top:256px;color:#585858"></div>
<div class="dg" style="left:588.1px;top:256px;color:#585858"></div>
<div class="dg" style="left:605.6px;top:256px;color:#585858"></div>
<div class="ds" style="left:627px;top:256px;color:#666666"></div>
<div class="ds" style="left:644.6px;top:256px;color:#666666"></div>
<div class="ds" style="left:667.7px;top:263px;color:#6e6836"></div>
<div class="ds" style="left:685.3px;top:263px;color:#6e6836"></div>
<div class="dg" style="left:709.4px;top:256px;color:#585858"></div>
<div class="dg" style="left:727.4px;top:256px;color:#585858"></div>
<div class="dg" style="left:747.1px;top:256px;color:#585858"></div>
<div class="dg" style="left:764.7px;top:256px;color:#585858"></div>
<div class="dg" style="left:811.85px;top:256px;color:#585858"></div>
<div class="dg" style="left:829.25px;top:256px;color:#585858"></div>
<div class="dg" style="left:846.75px;top:256px;color:#585858"></div>
<div class="ds" style="left:868.15px;top:256px;color:#666666"></div>
<div class="ds" style="left:885.75px;top:256px;color:#666666"></div>
<div class="ds" style="left:908.85px;top:263px;color:#6e6836"></div>
<div class="ds" style="left:926.45px;top:263px;color:#6e6836"></div>
<div class="dg" style="left:950.55px;top:256px;color:#585858"></div>
<div class="dg" style="left:968.55px;top:256px;color:#585858"></div>
<div class="dg" style="left:988.25px;top:256px;color:#585858"></div>
<div class="dg" style="left:1005.85px;top:256px;color:#585858"></div>
<div class="dg" style="left:1053px;top:256px;color:#585858"></div>
<div class="dg" style="left:1070.4px;top:256px;color:#585858"></div>
<div class="dg" style="left:1087.9px;top:256px;color:#585858"></div>
<div class="ds" style="left:1109.3px;top:256px;color:#666666"></div>
<div class="ds" style="left:1126.9px;top:256px;color:#666666"></div>
<div class="ds" style="left:1150px;top:263px;color:#6e6836"></div>
<div class="ds" style="left:1167.6px;top:263px;color:#6e6836"></div>
<div class="dg" style="left:1191.7px;top:256px;color:#585858"></div>
<div class="dg" style="left:1209.7px;top:256px;color:#585858"></div>
<div class="dg" style="left:1229.4px;top:256px;color:#585858"></div>
<div class="dg" style="left:1247px;top:256px;color:#585858"></div>
<div class="dg" style="left:1294.15px;top:256px;color:#585858"></div>
<div class="dg" style="left:1311.55px;top:256px;color:#585858"></div>
<div class="dg" style="left:1329.05px;top:256px;color:#585858"></div>
<div class="ds" style="left:1350.45px;top:256px;color:#666666"></div>
<div class="ds" style="left:1368.05px;top:256px;color:#666666"></div>
<div class="ds" style="left:1391.15px;top:263px;color:#6e6836"></div>
<div class="ds" style="left:1408.75px;top:263px;color:#6e6836"></div>
<div class="dg" style="left:1432.85px;top:256px;color:#585858"></div>
<div class="dg" style="left:1450.85px;top:256px;color:#585858"></div>
<div class="dg" style="left:1470.55px;top:256px;color:#585858"></div>
<div class="dg" style="left:1488.15px;top:256px;color:#585858"></div>
<div class="dg" style="left:1535.3px;top:256px;color:#585858"></div>
<div class="dg" style="left:1552.7px;top:256px;color:#585858"></div>
<div class="dg" style="left:1570.2px;top:256px;color:#585858"></div>
<div class="ds" style="left:1591.6px;top:256px;color:#666666"></div>
<div class="ds" style="left:1609.2px;top:256px;color:#666666"></div>
<div class="ds" style="left:1632.3px;top:263px;color:#6e6836"></div>
<div class="ds" style="left:1649.9px;top:263px;color:#6e6836"></div>
<div class="dg" style="left:1674px;top:256px;color:#585858"></div>
<div class="dg" style="left:1692px;top:256px;color:#585858"></div>
<div class="dg" style="left:1711.7px;top:256px;color:#585858"></div>
<div class="dg" style="left:1729.3px;top:256px;color:#585858"></div>
<div class="a" style="left:3px;top:272.48px;width:52px;height:30.46px;background:#262626"></div>
<div class="m z" style="left:18.1px;top:277.76px;color:#ffffff">0</div>
<div class="m" style="left:35.8px;top:277.76px;color:#ffffff">8</div>
<div class="a" style="left:85px;top:272.48px;width:211px;height:30.46px;background:#262626"></div>
<div class="m" style="left:83.3px;top:277.76px;color:#ffffff">C</div>
<div class="dash" style="left:104.6px;top:288.31px;color:#ffffff"></div>
<div class="m" style="left:117.8px;top:277.76px;color:#ffffff">4</div>
<div class="m z" style="left:137.4px;top:277.76px;color:#ffffff">0</div>
<div class="m" style="left:155px;top:277.76px;color:#ffffff">A</div>
<div class="ds" style="left:185.2px;top:293px;color:#a89a48"></div>
<div class="ds" style="left:202.9px;top:293px;color:#a89a48"></div>
<div class="dg" style="left:227px;top:287px;color:#f2e66a;opacity:.75;height:1.6px"></div>
<div class="m" style="left:239.8px;top:277.76px;color:#f2e66a">I</div>
<div class="m" style="left:258.6px;top:277.76px;color:#f2e66a">5</div>
<div class="m" style="left:277.3px;top:277.76px;color:#f2e66a">C</div>
<div class="a" style="left:326.15px;top:272.48px;width:211px;height:30.46px;background:#262626"></div>
<div class="dg" style="left:329.55px;top:287px;color:#a4a4a4"></div>
<div class="dg" style="left:346.95px;top:287px;color:#a4a4a4"></div>
<div class="dg" style="left:364.45px;top:287px;color:#a4a4a4"></div>
<div class="ds" style="left:385.85px;top:287px;color:#acacac"></div>
<div class="ds" style="left:403.45px;top:287px;color:#acacac"></div>
<div class="ds" style="left:426.55px;top:293px;color:#a89a48"></div>
<div class="ds" style="left:444.15px;top:293px;color:#a89a48"></div>
<div class="dg" style="left:468.25px;top:287px;color:#a4a4a4"></div>
<div class="dg" style="left:486.25px;top:287px;color:#a4a4a4"></div>
<div class="dg" style="left:505.95px;top:287px;color:#a4a4a4"></div>
<div class="dg" style="left:523.55px;top:287px;color:#a4a4a4"></div>
<div class="a" style="left:567.3px;top:272.48px;width:211px;height:30.46px;background:#262626"></div>
<div class="dg" style="left:570.7px;top:287px;color:#a4a4a4"></div>
<div class="dg" style="left:588.1px;top:287px;color:#a4a4a4"></div>
<div class="dg" style="left:605.6px;top:287px;color:#a4a4a4"></div>
<div class="ds" style="left:627px;top:287px;color:#acacac"></div>
<div class="ds" style="left:644.6px;top:287px;color:#acacac"></div>
<div class="ds" style="left:667.7px;top:293px;color:#a89a48"></div>
<div class="ds" style="left:685.3px;top:293px;color:#a89a48"></div>
<div class="dg" style="left:709.4px;top:287px;color:#a4a4a4"></div>
<div class="dg" style="left:727.4px;top:287px;color:#a4a4a4"></div>
<div class="dg" style="left:747.1px;top:287px;color:#a4a4a4"></div>
<div class="dg" style="left:764.7px;top:287px;color:#a4a4a4"></div>
<div class="a" style="left:808.45px;top:272.48px;width:211px;height:30.46px;background:#262626"></div>
<div class="dg" style="left:811.85px;top:287px;color:#a4a4a4"></div>
<div class="dg" style="left:829.25px;top:287px;color:#a4a4a4"></div>
<div class="dg" style="left:846.75px;top:287px;color:#a4a4a4"></div>
<div class="ds" style="left:868.15px;top:287px;color:#acacac"></div>
<div class="ds" style="left:885.75px;top:287px;color:#acacac"></div>
<div class="ds" style="left:908.85px;top:293px;color:#a89a48"></div>
<div class="ds" style="left:926.45px;top:293px;color:#a89a48"></div>
<div class="dg" style="left:950.55px;top:287px;color:#a4a4a4"></div>
<div class="dg" style="left:968.55px;top:287px;color:#a4a4a4"></div>
<div class="dg" style="left:988.25px;top:287px;color:#a4a4a4"></div>
<div class="dg" style="left:1005.85px;top:287px;color:#a4a4a4"></div>
<div class="a" style="left:1049.6px;top:272.48px;width:211px;height:30.46px;background:#262626"></div>
<div class="dg" style="left:1053px;top:287px;color:#a4a4a4"></div>
<div class="dg" style="left:1070.4px;top:287px;color:#a4a4a4"></div>
<div class="dg" style="left:1087.9px;top:287px;color:#a4a4a4"></div>
<div class="ds" style="left:1109.3px;top:287px;color:#acacac"></div>
<div class="ds" style="left:1126.9px;top:287px;color:#acacac"></div>
<div class="ds" style="left:1150px;top:293px;color:#a89a48"></div>
<div class="ds" style="left:1167.6px;top:293px;color:#a89a48"></div>
<div class="dg" style="left:1191.7px;top:287px;color:#a4a4a4"></div>
<div class="dg" style="left:1209.7px;top:287px;color:#a4a4a4"></div>
<div class="dg" style="left:1229.4px;top:287px;color:#a4a4a4"></div>
<div class="dg" style="left:1247px;top:287px;color:#a4a4a4"></div>
<div class="a" style="left:1290.75px;top:272.48px;width:211px;height:30.46px;background:#262626"></div>
<div class="dg" style="left:1294.15px;top:287px;color:#a4a4a4"></div>
<div class="dg" style="left:1311.55px;top:287px;color:#a4a4a4"></div>
<div class="dg" style="left:1329.05px;top:287px;color:#a4a4a4"></div>
<div class="ds" style="left:1350.45px;top:287px;color:#acacac"></div>
<div class="ds" style="left:1368.05px;top:287px;color:#acacac"></div>
<div class="ds" style="left:1391.15px;top:293px;color:#a89a48"></div>
<div class="ds" style="left:1408.75px;top:293px;color:#a89a48"></div>
<div class="dg" style="left:1432.85px;top:287px;color:#a4a4a4"></div>
<div class="dg" style="left:1450.85px;top:287px;color:#a4a4a4"></div>
<div class="dg" style="left:1470.55px;top:287px;color:#a4a4a4"></div>
<div class="dg" style="left:1488.15px;top:287px;color:#a4a4a4"></div>
<div class="a" style="left:1531.9px;top:272.48px;width:211px;height:30.46px;background:#262626"></div>
<div class="dg" style="left:1535.3px;top:287px;color:#a4a4a4"></div>
<div class="dg" style="left:1552.7px;top:287px;color:#a4a4a4"></div>
<div class="dg" style="left:1570.2px;top:287px;color:#a4a4a4"></div>
<div class="ds" style="left:1591.6px;top:287px;color:#acacac"></div>
<div class="ds" style="left:1609.2px;top:287px;color:#acacac"></div>
<div class="ds" style="left:1632.3px;top:293px;color:#a89a48"></div>
<div class="ds" style="left:1649.9px;top:293px;color:#a89a48"></div>
<div class="dg" style="left:1674px;top:287px;color:#a4a4a4"></div>
<div class="dg" style="left:1692px;top:287px;color:#a4a4a4"></div>
<div class="dg" style="left:1711.7px;top:287px;color:#a4a4a4"></div>
<div class="dg" style="left:1729.3px;top:287px;color:#a4a4a4"></div>
<div class="m z" style="left:18.1px;top:308.21px;color:#8c8c8c;-webkit-text-stroke:0.3px #111111">0</div>
<div class="m" style="left:35.8px;top:308.21px;color:#8c8c8c;-webkit-text-stroke:0.3px #111111">9</div>
<div class="m" style="left:83.3px;top:308.21px;color:#8e8e8e;-webkit-text-stroke:0.3px #111111">C</div>
<div class="dash" style="left:104.6px;top:318.76px;color:#8e8e8e"></div>
<div class="m" style="left:117.8px;top:308.21px;color:#8e8e8e;-webkit-text-stroke:0.3px #111111">4</div>
<div class="m z" style="left:137.4px;top:308.21px;color:#8e8e8e;-webkit-text-stroke:0.3px #111111">0</div>
<div class="m" style="left:155px;top:308.21px;color:#8e8e8e;-webkit-text-stroke:0.3px #111111">A</div>
<div class="ds" style="left:185.2px;top:324px;color:#6e6836"></div>
<div class="ds" style="left:202.9px;top:324px;color:#6e6836"></div>
<div class="dg" style="left:227px;top:317px;color:#bb6d3c;opacity:.55;height:1.6px"></div>
<div class="m" style="left:239.8px;top:308.21px;color:#bb6d3c;-webkit-text-stroke:0.3px #111111">U</div>
<div class="m" style="left:258.6px;top:308.21px;color:#bb6d3c;-webkit-text-stroke:0.3px #111111">4</div>
<div class="m" style="left:277.3px;top:308.21px;color:#bb6d3c;-webkit-text-stroke:0.3px #111111">8</div>
<div class="dg" style="left:329.55px;top:317px;color:#585858"></div>
<div class="dg" style="left:346.95px;top:317px;color:#585858"></div>
<div class="dg" style="left:364.45px;top:317px;color:#585858"></div>
<div class="ds" style="left:385.85px;top:317px;color:#666666"></div>
<div class="ds" style="left:403.45px;top:317px;color:#666666"></div>
<div class="ds" style="left:426.55px;top:324px;color:#6e6836"></div>
<div class="ds" style="left:444.15px;top:324px;color:#6e6836"></div>
<div class="dg" style="left:468.25px;top:317px;color:#585858"></div>
<div class="dg" style="left:486.25px;top:317px;color:#585858"></div>
<div class="dg" style="left:505.95px;top:317px;color:#585858"></div>
<div class="dg" style="left:523.55px;top:317px;color:#585858"></div>
<div class="dg" style="left:570.7px;top:317px;color:#585858"></div>
<div class="dg" style="left:588.1px;top:317px;color:#585858"></div>
<div class="dg" style="left:605.6px;top:317px;color:#585858"></div>
<div class="ds" style="left:627px;top:317px;color:#666666"></div>
<div class="ds" style="left:644.6px;top:317px;color:#666666"></div>
<div class="ds" style="left:667.7px;top:324px;color:#6e6836"></div>
<div class="ds" style="left:685.3px;top:324px;color:#6e6836"></div>
<div class="dg" style="left:709.4px;top:317px;color:#585858"></div>
<div class="dg" style="left:727.4px;top:317px;color:#585858"></div>
<div class="dg" style="left:747.1px;top:317px;color:#585858"></div>
<div class="dg" style="left:764.7px;top:317px;color:#585858"></div>
<div class="dg" style="left:811.85px;top:317px;color:#585858"></div>
<div class="dg" style="left:829.25px;top:317px;color:#585858"></div>
<div class="dg" style="left:846.75px;top:317px;color:#585858"></div>
<div class="ds" style="left:868.15px;top:317px;color:#666666"></div>
<div class="ds" style="left:885.75px;top:317px;color:#666666"></div>
<div class="ds" style="left:908.85px;top:324px;color:#6e6836"></div>
<div class="ds" style="left:926.45px;top:324px;color:#6e6836"></div>
<div class="dg" style="left:950.55px;top:317px;color:#585858"></div>
<div class="dg" style="left:968.55px;top:317px;color:#585858"></div>
<div class="dg" style="left:988.25px;top:317px;color:#585858"></div>
<div class="dg" style="left:1005.85px;top:317px;color:#585858"></div>
<div class="dg" style="left:1053px;top:317px;color:#585858"></div>
<div class="dg" style="left:1070.4px;top:317px;color:#585858"></div>
<div class="dg" style="left:1087.9px;top:317px;color:#585858"></div>
<div class="ds" style="left:1109.3px;top:317px;color:#666666"></div>
<div class="ds" style="left:1126.9px;top:317px;color:#666666"></div>
<div class="ds" style="left:1150px;top:324px;color:#6e6836"></div>
<div class="ds" style="left:1167.6px;top:324px;color:#6e6836"></div>
<div class="dg" style="left:1191.7px;top:317px;color:#585858"></div>
<div class="dg" style="left:1209.7px;top:317px;color:#585858"></div>
<div class="dg" style="left:1229.4px;top:317px;color:#585858"></div>
<div class="dg" style="left:1247px;top:317px;color:#585858"></div>
<div class="dg" style="left:1294.15px;top:317px;color:#585858"></div>
<div class="dg" style="left:1311.55px;top:317px;color:#585858"></div>
<div class="dg" style="left:1329.05px;top:317px;color:#585858"></div>
<div class="ds" style="left:1350.45px;top:317px;color:#666666"></div>
<div class="ds" style="left:1368.05px;top:317px;color:#666666"></div>
<div class="ds" style="left:1391.15px;top:324px;color:#6e6836"></div>
<div class="ds" style="left:1408.75px;top:324px;color:#6e6836"></div>
<div class="dg" style="left:1432.85px;top:317px;color:#585858"></div>
<div class="dg" style="left:1450.85px;top:317px;color:#585858"></div>
<div class="dg" style="left:1470.55px;top:317px;color:#585858"></div>
<div class="dg" style="left:1488.15px;top:317px;color:#585858"></div>
<div class="dg" style="left:1535.3px;top:317px;color:#585858"></div>
<div class="dg" style="left:1552.7px;top:317px;color:#585858"></div>
<div class="dg" style="left:1570.2px;top:317px;color:#585858"></div>
<div class="ds" style="left:1591.6px;top:317px;color:#666666"></div>
<div class="ds" style="left:1609.2px;top:317px;color:#666666"></div>
<div class="ds" style="left:1632.3px;top:324px;color:#6e6836"></div>
<div class="ds" style="left:1649.9px;top:324px;color:#6e6836"></div>
<div class="dg" style="left:1674px;top:317px;color:#585858"></div>
<div class="dg" style="left:1692px;top:317px;color:#585858"></div>
<div class="dg" style="left:1711.7px;top:317px;color:#585858"></div>
<div class="dg" style="left:1729.3px;top:317px;color:#585858"></div>
<div class="m" style="left:18.1px;top:338.68px;color:#8c8c8c;-webkit-text-stroke:0.3px #111111">1</div>
<div class="m z" style="left:35.8px;top:338.68px;color:#8c8c8c;-webkit-text-stroke:0.3px #111111">0</div>
<div class="m" style="left:83.3px;top:338.68px;color:#8e8e8e;-webkit-text-stroke:0.3px #111111">C</div>
<div class="dash" style="left:104.6px;top:349.23px;color:#8e8e8e"></div>
<div class="m" style="left:117.8px;top:338.68px;color:#8e8e8e;-webkit-text-stroke:0.3px #111111">6</div>
<div class="m z" style="left:137.4px;top:338.68px;color:#8e8e8e;-webkit-text-stroke:0.3px #111111">0</div>
<div class="m" style="left:155px;top:338.68px;color:#8e8e8e;-webkit-text-stroke:0.3px #111111">A</div>
<div class="ds" style="left:185.2px;top:354px;color:#6e6836"></div>
<div class="ds" style="left:202.9px;top:354px;color:#6e6836"></div>
<div class="dg" style="left:227px;top:347px;color:#928d50;opacity:.55;height:1.6px"></div>
<div class="m" style="left:239.8px;top:338.68px;color:#928d50;-webkit-text-stroke:0.3px #111111">I</div>
<div class="m" style="left:258.6px;top:338.68px;color:#928d50;-webkit-text-stroke:0.3px #111111">8</div>
<div class="m" style="left:277.3px;top:338.68px;color:#928d50;-webkit-text-stroke:0.3px #111111">2</div>
<div class="dg" style="left:329.55px;top:347px;color:#585858"></div>
<div class="dg" style="left:346.95px;top:347px;color:#585858"></div>
<div class="dg" style="left:364.45px;top:347px;color:#585858"></div>
<div class="ds" style="left:385.85px;top:347px;color:#666666"></div>
<div class="ds" style="left:403.45px;top:347px;color:#666666"></div>
<div class="ds" style="left:426.55px;top:354px;color:#6e6836"></div>
<div class="ds" style="left:444.15px;top:354px;color:#6e6836"></div>
<div class="dg" style="left:468.25px;top:347px;color:#585858"></div>
<div class="dg" style="left:486.25px;top:347px;color:#585858"></div>
<div class="dg" style="left:505.95px;top:347px;color:#585858"></div>
<div class="dg" style="left:523.55px;top:347px;color:#585858"></div>
<div class="dg" style="left:570.7px;top:347px;color:#585858"></div>
<div class="dg" style="left:588.1px;top:347px;color:#585858"></div>
<div class="dg" style="left:605.6px;top:347px;color:#585858"></div>
<div class="ds" style="left:627px;top:347px;color:#666666"></div>
<div class="ds" style="left:644.6px;top:347px;color:#666666"></div>
<div class="ds" style="left:667.7px;top:354px;color:#6e6836"></div>
<div class="ds" style="left:685.3px;top:354px;color:#6e6836"></div>
<div class="dg" style="left:709.4px;top:347px;color:#585858"></div>
<div class="dg" style="left:727.4px;top:347px;color:#585858"></div>
<div class="dg" style="left:747.1px;top:347px;color:#585858"></div>
<div class="dg" style="left:764.7px;top:347px;color:#585858"></div>
<div class="dg" style="left:811.85px;top:347px;color:#585858"></div>
<div class="dg" style="left:829.25px;top:347px;color:#585858"></div>
<div class="dg" style="left:846.75px;top:347px;color:#585858"></div>
<div class="ds" style="left:868.15px;top:347px;color:#666666"></div>
<div class="ds" style="left:885.75px;top:347px;color:#666666"></div>
<div class="ds" style="left:908.85px;top:354px;color:#6e6836"></div>
<div class="ds" style="left:926.45px;top:354px;color:#6e6836"></div>
<div class="dg" style="left:950.55px;top:347px;color:#585858"></div>
<div class="dg" style="left:968.55px;top:347px;color:#585858"></div>
<div class="dg" style="left:988.25px;top:347px;color:#585858"></div>
<div class="dg" style="left:1005.85px;top:347px;color:#585858"></div>
<div class="dg" style="left:1053px;top:347px;color:#585858"></div>
<div class="dg" style="left:1070.4px;top:347px;color:#585858"></div>
<div class="dg" style="left:1087.9px;top:347px;color:#585858"></div>
<div class="ds" style="left:1109.3px;top:347px;color:#666666"></div>
<div class="ds" style="left:1126.9px;top:347px;color:#666666"></div>
<div class="ds" style="left:1150px;top:354px;color:#6e6836"></div>
<div class="ds" style="left:1167.6px;top:354px;color:#6e6836"></div>
<div class="dg" style="left:1191.7px;top:347px;color:#585858"></div>
<div class="dg" style="left:1209.7px;top:347px;color:#585858"></div>
<div class="dg" style="left:1229.4px;top:347px;color:#585858"></div>
<div class="dg" style="left:1247px;top:347px;color:#585858"></div>
<div class="dg" style="left:1294.15px;top:347px;color:#585858"></div>
<div class="dg" style="left:1311.55px;top:347px;color:#585858"></div>
<div class="dg" style="left:1329.05px;top:347px;color:#585858"></div>
<div class="ds" style="left:1350.45px;top:347px;color:#666666"></div>
<div class="ds" style="left:1368.05px;top:347px;color:#666666"></div>
<div class="ds" style="left:1391.15px;top:354px;color:#6e6836"></div>
<div class="ds" style="left:1408.75px;top:354px;color:#6e6836"></div>
<div class="dg" style="left:1432.85px;top:347px;color:#585858"></div>
<div class="dg" style="left:1450.85px;top:347px;color:#585858"></div>
<div class="dg" style="left:1470.55px;top:347px;color:#585858"></div>
<div class="dg" style="left:1488.15px;top:347px;color:#585858"></div>
<div class="dg" style="left:1535.3px;top:347px;color:#585858"></div>
<div class="dg" style="left:1552.7px;top:347px;color:#585858"></div>
<div class="dg" style="left:1570.2px;top:347px;color:#585858"></div>
<div class="ds" style="left:1591.6px;top:347px;color:#666666"></div>
<div class="ds" style="left:1609.2px;top:347px;color:#666666"></div>
<div class="ds" style="left:1632.3px;top:354px;color:#6e6836"></div>
<div class="ds" style="left:1649.9px;top:354px;color:#6e6836"></div>
<div class="dg" style="left:1674px;top:347px;color:#585858"></div>
<div class="dg" style="left:1692px;top:347px;color:#585858"></div>
<div class="dg" style="left:1711.7px;top:347px;color:#585858"></div>
<div class="dg" style="left:1729.3px;top:347px;color:#585858"></div>
<div class="m" style="left:18.1px;top:369.14px;color:#8c8c8c;-webkit-text-stroke:0.3px #111111">1</div>
<div class="m" style="left:35.8px;top:369.14px;color:#8c8c8c;-webkit-text-stroke:0.3px #111111">1</div>
<div class="m" style="left:83.3px;top:369.14px;color:#8e8e8e;-webkit-text-stroke:0.3px #111111">F</div>
<div class="dash" style="left:104.6px;top:379.69px;color:#8e8e8e"></div>
<div class="m" style="left:117.8px;top:369.14px;color:#8e8e8e;-webkit-text-stroke:0.3px #111111">6</div>
<div class="m z" style="left:137.4px;top:369.14px;color:#8e8e8e;-webkit-text-stroke:0.3px #111111">0</div>
<div class="m" style="left:155px;top:369.14px;color:#8e8e8e;-webkit-text-stroke:0.3px #111111">A</div>
<div class="ds" style="left:185.2px;top:385px;color:#6e6836"></div>
<div class="ds" style="left:202.9px;top:385px;color:#6e6836"></div>
<div class="dg" style="left:227px;top:378px;color:#bb6d3c;opacity:.55;height:1.6px"></div>
<div class="m" style="left:239.8px;top:369.14px;color:#bb6d3c;-webkit-text-stroke:0.3px #111111">A</div>
<div class="m" style="left:258.6px;top:369.14px;color:#bb6d3c;-webkit-text-stroke:0.3px #111111">6</div>
<div class="m" style="left:277.3px;top:369.14px;color:#bb6d3c;-webkit-text-stroke:0.3px #111111">B</div>
<div class="dg" style="left:329.55px;top:378px;color:#585858"></div>
<div class="dg" style="left:346.95px;top:378px;color:#585858"></div>
<div class="dg" style="left:364.45px;top:378px;color:#585858"></div>
<div class="ds" style="left:385.85px;top:378px;color:#666666"></div>
<div class="ds" style="left:403.45px;top:378px;color:#666666"></div>
<div class="ds" style="left:426.55px;top:385px;color:#6e6836"></div>
<div class="ds" style="left:444.15px;top:385px;color:#6e6836"></div>
<div class="dg" style="left:468.25px;top:378px;color:#585858"></div>
<div class="dg" style="left:486.25px;top:378px;color:#585858"></div>
<div class="dg" style="left:505.95px;top:378px;color:#585858"></div>
<div class="dg" style="left:523.55px;top:378px;color:#585858"></div>
<div class="dg" style="left:570.7px;top:378px;color:#585858"></div>
<div class="dg" style="left:588.1px;top:378px;color:#585858"></div>
<div class="dg" style="left:605.6px;top:378px;color:#585858"></div>
<div class="ds" style="left:627px;top:378px;color:#666666"></div>
<div class="ds" style="left:644.6px;top:378px;color:#666666"></div>
<div class="ds" style="left:667.7px;top:385px;color:#6e6836"></div>
<div class="ds" style="left:685.3px;top:385px;color:#6e6836"></div>
<div class="dg" style="left:709.4px;top:378px;color:#585858"></div>
<div class="dg" style="left:727.4px;top:378px;color:#585858"></div>
<div class="dg" style="left:747.1px;top:378px;color:#585858"></div>
<div class="dg" style="left:764.7px;top:378px;color:#585858"></div>
<div class="dg" style="left:811.85px;top:378px;color:#585858"></div>
<div class="dg" style="left:829.25px;top:378px;color:#585858"></div>
<div class="dg" style="left:846.75px;top:378px;color:#585858"></div>
<div class="ds" style="left:868.15px;top:378px;color:#666666"></div>
<div class="ds" style="left:885.75px;top:378px;color:#666666"></div>
<div class="ds" style="left:908.85px;top:385px;color:#6e6836"></div>
<div class="ds" style="left:926.45px;top:385px;color:#6e6836"></div>
<div class="dg" style="left:950.55px;top:378px;color:#585858"></div>
<div class="dg" style="left:968.55px;top:378px;color:#585858"></div>
<div class="dg" style="left:988.25px;top:378px;color:#585858"></div>
<div class="dg" style="left:1005.85px;top:378px;color:#585858"></div>
<div class="dg" style="left:1053px;top:378px;color:#585858"></div>
<div class="dg" style="left:1070.4px;top:378px;color:#585858"></div>
<div class="dg" style="left:1087.9px;top:378px;color:#585858"></div>
<div class="ds" style="left:1109.3px;top:378px;color:#666666"></div>
<div class="ds" style="left:1126.9px;top:378px;color:#666666"></div>
<div class="ds" style="left:1150px;top:385px;color:#6e6836"></div>
<div class="ds" style="left:1167.6px;top:385px;color:#6e6836"></div>
<div class="dg" style="left:1191.7px;top:378px;color:#585858"></div>
<div class="dg" style="left:1209.7px;top:378px;color:#585858"></div>
<div class="dg" style="left:1229.4px;top:378px;color:#585858"></div>
<div class="dg" style="left:1247px;top:378px;color:#585858"></div>
<div class="dg" style="left:1294.15px;top:378px;color:#585858"></div>
<div class="dg" style="left:1311.55px;top:378px;color:#585858"></div>
<div class="dg" style="left:1329.05px;top:378px;color:#585858"></div>
<div class="ds" style="left:1350.45px;top:378px;color:#666666"></div>
<div class="ds" style="left:1368.05px;top:378px;color:#666666"></div>
<div class="ds" style="left:1391.15px;top:385px;color:#6e6836"></div>
<div class="ds" style="left:1408.75px;top:385px;color:#6e6836"></div>
<div class="dg" style="left:1432.85px;top:378px;color:#585858"></div>
<div class="dg" style="left:1450.85px;top:378px;color:#585858"></div>
<div class="dg" style="left:1470.55px;top:378px;color:#585858"></div>
<div class="dg" style="left:1488.15px;top:378px;color:#585858"></div>
<div class="dg" style="left:1535.3px;top:378px;color:#585858"></div>
<div class="dg" style="left:1552.7px;top:378px;color:#585858"></div>
<div class="dg" style="left:1570.2px;top:378px;color:#585858"></div>
<div class="ds" style="left:1591.6px;top:378px;color:#666666"></div>
<div class="ds" style="left:1609.2px;top:378px;color:#666666"></div>
<div class="ds" style="left:1632.3px;top:385px;color:#6e6836"></div>
<div class="ds" style="left:1649.9px;top:385px;color:#6e6836"></div>
<div class="dg" style="left:1674px;top:378px;color:#585858"></div>
<div class="dg" style="left:1692px;top:378px;color:#585858"></div>
<div class="dg" style="left:1711.7px;top:378px;color:#585858"></div>
<div class="dg" style="left:1729.3px;top:378px;color:#585858"></div>
<div class="a" style="left:3px;top:394.32px;width:52px;height:30.46px;background:#262626"></div>
<div class="m" style="left:18.1px;top:399.59px;color:#ffffff">1</div>
<div class="m" style="left:35.8px;top:399.59px;color:#ffffff">2</div>
<div class="a" style="left:85px;top:394.32px;width:211px;height:30.46px;background:#262626"></div>
<div class="m" style="left:83.3px;top:399.59px;color:#ffffff">G</div>
<div class="dash" style="left:104.6px;top:410.14px;color:#ffffff"></div>
<div class="m" style="left:117.8px;top:399.59px;color:#ffffff">5</div>
<div class="m z" style="left:137.4px;top:399.59px;color:#ffffff">0</div>
<div class="m" style="left:155px;top:399.59px;color:#ffffff">A</div>
<div class="ds" style="left:185.2px;top:415px;color:#a89a48"></div>
<div class="ds" style="left:202.9px;top:415px;color:#a89a48"></div>
<div class="dg" style="left:227px;top:408px;color:#62c4ec;opacity:.75;height:1.6px"></div>
<div class="m" style="left:239.8px;top:399.59px;color:#62c4ec">R</div>
<div class="m" style="left:258.6px;top:399.59px;color:#62c4ec">1</div>
<div class="m" style="left:277.3px;top:399.59px;color:#62c4ec">8</div>
<div class="a" style="left:326.15px;top:394.32px;width:211px;height:30.46px;background:#262626"></div>
<div class="dg" style="left:329.55px;top:408px;color:#a4a4a4"></div>
<div class="dg" style="left:346.95px;top:408px;color:#a4a4a4"></div>
<div class="dg" style="left:364.45px;top:408px;color:#a4a4a4"></div>
<div class="ds" style="left:385.85px;top:408px;color:#acacac"></div>
<div class="ds" style="left:403.45px;top:408px;color:#acacac"></div>
<div class="ds" style="left:426.55px;top:415px;color:#a89a48"></div>
<div class="ds" style="left:444.15px;top:415px;color:#a89a48"></div>
<div class="dg" style="left:468.25px;top:408px;color:#a4a4a4"></div>
<div class="dg" style="left:486.25px;top:408px;color:#a4a4a4"></div>
<div class="dg" style="left:505.95px;top:408px;color:#a4a4a4"></div>
<div class="dg" style="left:523.55px;top:408px;color:#a4a4a4"></div>
<div class="a" style="left:567.3px;top:394.32px;width:211px;height:30.46px;background:#262626"></div>
<div class="dg" style="left:570.7px;top:408px;color:#a4a4a4"></div>
<div class="dg" style="left:588.1px;top:408px;color:#a4a4a4"></div>
<div class="dg" style="left:605.6px;top:408px;color:#a4a4a4"></div>
<div class="ds" style="left:627px;top:408px;color:#acacac"></div>
<div class="ds" style="left:644.6px;top:408px;color:#acacac"></div>
<div class="ds" style="left:667.7px;top:415px;color:#a89a48"></div>
<div class="ds" style="left:685.3px;top:415px;color:#a89a48"></div>
<div class="dg" style="left:709.4px;top:408px;color:#a4a4a4"></div>
<div class="dg" style="left:727.4px;top:408px;color:#a4a4a4"></div>
<div class="dg" style="left:747.1px;top:408px;color:#a4a4a4"></div>
<div class="dg" style="left:764.7px;top:408px;color:#a4a4a4"></div>
<div class="a" style="left:808.45px;top:394.32px;width:211px;height:30.46px;background:#262626"></div>
<div class="dg" style="left:811.85px;top:408px;color:#a4a4a4"></div>
<div class="dg" style="left:829.25px;top:408px;color:#a4a4a4"></div>
<div class="dg" style="left:846.75px;top:408px;color:#a4a4a4"></div>
<div class="ds" style="left:868.15px;top:408px;color:#acacac"></div>
<div class="ds" style="left:885.75px;top:408px;color:#acacac"></div>
<div class="ds" style="left:908.85px;top:415px;color:#a89a48"></div>
<div class="ds" style="left:926.45px;top:415px;color:#a89a48"></div>
<div class="dg" style="left:950.55px;top:408px;color:#a4a4a4"></div>
<div class="dg" style="left:968.55px;top:408px;color:#a4a4a4"></div>
<div class="dg" style="left:988.25px;top:408px;color:#a4a4a4"></div>
<div class="dg" style="left:1005.85px;top:408px;color:#a4a4a4"></div>
<div class="a" style="left:1049.6px;top:394.32px;width:211px;height:30.46px;background:#262626"></div>
<div class="dg" style="left:1053px;top:408px;color:#a4a4a4"></div>
<div class="dg" style="left:1070.4px;top:408px;color:#a4a4a4"></div>
<div class="dg" style="left:1087.9px;top:408px;color:#a4a4a4"></div>
<div class="ds" style="left:1109.3px;top:408px;color:#acacac"></div>
<div class="ds" style="left:1126.9px;top:408px;color:#acacac"></div>
<div class="ds" style="left:1150px;top:415px;color:#a89a48"></div>
<div class="ds" style="left:1167.6px;top:415px;color:#a89a48"></div>
<div class="dg" style="left:1191.7px;top:408px;color:#a4a4a4"></div>
<div class="dg" style="left:1209.7px;top:408px;color:#a4a4a4"></div>
<div class="dg" style="left:1229.4px;top:408px;color:#a4a4a4"></div>
<div class="dg" style="left:1247px;top:408px;color:#a4a4a4"></div>
<div class="a" style="left:1290.75px;top:394.32px;width:211px;height:30.46px;background:#262626"></div>
<div class="dg" style="left:1294.15px;top:408px;color:#a4a4a4"></div>
<div class="dg" style="left:1311.55px;top:408px;color:#a4a4a4"></div>
<div class="dg" style="left:1329.05px;top:408px;color:#a4a4a4"></div>
<div class="ds" style="left:1350.45px;top:408px;color:#acacac"></div>
<div class="ds" style="left:1368.05px;top:408px;color:#acacac"></div>
<div class="ds" style="left:1391.15px;top:415px;color:#a89a48"></div>
<div class="ds" style="left:1408.75px;top:415px;color:#a89a48"></div>
<div class="dg" style="left:1432.85px;top:408px;color:#a4a4a4"></div>
<div class="dg" style="left:1450.85px;top:408px;color:#a4a4a4"></div>
<div class="dg" style="left:1470.55px;top:408px;color:#a4a4a4"></div>
<div class="dg" style="left:1488.15px;top:408px;color:#a4a4a4"></div>
<div class="a" style="left:1531.9px;top:394.32px;width:211px;height:30.46px;background:#262626"></div>
<div class="dg" style="left:1535.3px;top:408px;color:#a4a4a4"></div>
<div class="dg" style="left:1552.7px;top:408px;color:#a4a4a4"></div>
<div class="dg" style="left:1570.2px;top:408px;color:#a4a4a4"></div>
<div class="ds" style="left:1591.6px;top:408px;color:#acacac"></div>
<div class="ds" style="left:1609.2px;top:408px;color:#acacac"></div>
<div class="ds" style="left:1632.3px;top:415px;color:#a89a48"></div>
<div class="ds" style="left:1649.9px;top:415px;color:#a89a48"></div>
<div class="dg" style="left:1674px;top:408px;color:#a4a4a4"></div>
<div class="dg" style="left:1692px;top:408px;color:#a4a4a4"></div>
<div class="dg" style="left:1711.7px;top:408px;color:#a4a4a4"></div>
<div class="dg" style="left:1729.3px;top:408px;color:#a4a4a4"></div>
<div class="m" style="left:18.1px;top:430.06px;color:#8c8c8c;-webkit-text-stroke:0.3px #111111">1</div>
<div class="m" style="left:35.8px;top:430.06px;color:#8c8c8c;-webkit-text-stroke:0.3px #111111">3</div>
<div class="m" style="left:83.3px;top:430.06px;color:#8e8e8e;-webkit-text-stroke:0.3px #111111">C</div>
<div class="dash" style="left:104.6px;top:440.61px;color:#8e8e8e"></div>
<div class="m" style="left:117.8px;top:430.06px;color:#8e8e8e;-webkit-text-stroke:0.3px #111111">5</div>
<div class="m z" style="left:137.4px;top:430.06px;color:#8e8e8e;-webkit-text-stroke:0.3px #111111">0</div>
<div class="m" style="left:155px;top:430.06px;color:#8e8e8e;-webkit-text-stroke:0.3px #111111">A</div>
<div class="ds" style="left:185.2px;top:446px;color:#6e6836"></div>
<div class="ds" style="left:202.9px;top:446px;color:#6e6836"></div>
<div class="dg" style="left:227px;top:439px;color:#4a8eb2;opacity:.55;height:1.6px"></div>
<div class="m" style="left:239.8px;top:430.06px;color:#4a8eb2;-webkit-text-stroke:0.3px #111111">Q</div>
<div class="m" style="left:258.6px;top:430.06px;color:#4a8eb2;-webkit-text-stroke:0.3px #111111">B</div>
<div class="m" style="left:277.3px;top:430.06px;color:#4a8eb2;-webkit-text-stroke:0.3px #111111">2</div>
<div class="dg" style="left:329.55px;top:439px;color:#585858"></div>
<div class="dg" style="left:346.95px;top:439px;color:#585858"></div>
<div class="dg" style="left:364.45px;top:439px;color:#585858"></div>
<div class="ds" style="left:385.85px;top:439px;color:#666666"></div>
<div class="ds" style="left:403.45px;top:439px;color:#666666"></div>
<div class="ds" style="left:426.55px;top:446px;color:#6e6836"></div>
<div class="ds" style="left:444.15px;top:446px;color:#6e6836"></div>
<div class="dg" style="left:468.25px;top:439px;color:#585858"></div>
<div class="dg" style="left:486.25px;top:439px;color:#585858"></div>
<div class="dg" style="left:505.95px;top:439px;color:#585858"></div>
<div class="dg" style="left:523.55px;top:439px;color:#585858"></div>
<div class="dg" style="left:570.7px;top:439px;color:#585858"></div>
<div class="dg" style="left:588.1px;top:439px;color:#585858"></div>
<div class="dg" style="left:605.6px;top:439px;color:#585858"></div>
<div class="ds" style="left:627px;top:439px;color:#666666"></div>
<div class="ds" style="left:644.6px;top:439px;color:#666666"></div>
<div class="ds" style="left:667.7px;top:446px;color:#6e6836"></div>
<div class="ds" style="left:685.3px;top:446px;color:#6e6836"></div>
<div class="dg" style="left:709.4px;top:439px;color:#585858"></div>
<div class="dg" style="left:727.4px;top:439px;color:#585858"></div>
<div class="dg" style="left:747.1px;top:439px;color:#585858"></div>
<div class="dg" style="left:764.7px;top:439px;color:#585858"></div>
<div class="dg" style="left:811.85px;top:439px;color:#585858"></div>
<div class="dg" style="left:829.25px;top:439px;color:#585858"></div>
<div class="dg" style="left:846.75px;top:439px;color:#585858"></div>
<div class="ds" style="left:868.15px;top:439px;color:#666666"></div>
<div class="ds" style="left:885.75px;top:439px;color:#666666"></div>
<div class="ds" style="left:908.85px;top:446px;color:#6e6836"></div>
<div class="ds" style="left:926.45px;top:446px;color:#6e6836"></div>
<div class="dg" style="left:950.55px;top:439px;color:#585858"></div>
<div class="dg" style="left:968.55px;top:439px;color:#585858"></div>
<div class="dg" style="left:988.25px;top:439px;color:#585858"></div>
<div class="dg" style="left:1005.85px;top:439px;color:#585858"></div>
<div class="dg" style="left:1053px;top:439px;color:#585858"></div>
<div class="dg" style="left:1070.4px;top:439px;color:#585858"></div>
<div class="dg" style="left:1087.9px;top:439px;color:#585858"></div>
<div class="ds" style="left:1109.3px;top:439px;color:#666666"></div>
<div class="ds" style="left:1126.9px;top:439px;color:#666666"></div>
<div class="ds" style="left:1150px;top:446px;color:#6e6836"></div>
<div class="ds" style="left:1167.6px;top:446px;color:#6e6836"></div>
<div class="dg" style="left:1191.7px;top:439px;color:#585858"></div>
<div class="dg" style="left:1209.7px;top:439px;color:#585858"></div>
<div class="dg" style="left:1229.4px;top:439px;color:#585858"></div>
<div class="dg" style="left:1247px;top:439px;color:#585858"></div>
<div class="dg" style="left:1294.15px;top:439px;color:#585858"></div>
<div class="dg" style="left:1311.55px;top:439px;color:#585858"></div>
<div class="dg" style="left:1329.05px;top:439px;color:#585858"></div>
<div class="ds" style="left:1350.45px;top:439px;color:#666666"></div>
<div class="ds" style="left:1368.05px;top:439px;color:#666666"></div>
<div class="ds" style="left:1391.15px;top:446px;color:#6e6836"></div>
<div class="ds" style="left:1408.75px;top:446px;color:#6e6836"></div>
<div class="dg" style="left:1432.85px;top:439px;color:#585858"></div>
<div class="dg" style="left:1450.85px;top:439px;color:#585858"></div>
<div class="dg" style="left:1470.55px;top:439px;color:#585858"></div>
<div class="dg" style="left:1488.15px;top:439px;color:#585858"></div>
<div class="dg" style="left:1535.3px;top:439px;color:#585858"></div>
<div class="dg" style="left:1552.7px;top:439px;color:#585858"></div>
<div class="dg" style="left:1570.2px;top:439px;color:#585858"></div>
<div class="ds" style="left:1591.6px;top:439px;color:#666666"></div>
<div class="ds" style="left:1609.2px;top:439px;color:#666666"></div>
<div class="ds" style="left:1632.3px;top:446px;color:#6e6836"></div>
<div class="ds" style="left:1649.9px;top:446px;color:#6e6836"></div>
<div class="dg" style="left:1674px;top:439px;color:#585858"></div>
<div class="dg" style="left:1692px;top:439px;color:#585858"></div>
<div class="dg" style="left:1711.7px;top:439px;color:#585858"></div>
<div class="dg" style="left:1729.3px;top:439px;color:#585858"></div>
<div class="m" style="left:18.1px;top:460.52px;color:#8c8c8c;-webkit-text-stroke:0.3px #111111">1</div>
<div class="m" style="left:35.8px;top:460.52px;color:#8c8c8c;-webkit-text-stroke:0.3px #111111">4</div>
<div class="m" style="left:83.3px;top:460.52px;color:#8e8e8e;-webkit-text-stroke:0.3px #111111">D</div>
<div class="dash" style="left:104.6px;top:471.07px;color:#8e8e8e"></div>
<div class="m" style="left:117.8px;top:460.52px;color:#8e8e8e;-webkit-text-stroke:0.3px #111111">4</div>
<div class="m z" style="left:137.4px;top:460.52px;color:#8e8e8e;-webkit-text-stroke:0.3px #111111">0</div>
<div class="m" style="left:155px;top:460.52px;color:#8e8e8e;-webkit-text-stroke:0.3px #111111">A</div>
<div class="ds" style="left:185.2px;top:476px;color:#6e6836"></div>
<div class="ds" style="left:202.9px;top:476px;color:#6e6836"></div>
<div class="dg" style="left:227px;top:469px;color:#4a8eb2;opacity:.55;height:1.6px"></div>
<div class="m" style="left:239.8px;top:460.52px;color:#4a8eb2;-webkit-text-stroke:0.3px #111111">E</div>
<div class="m" style="left:258.6px;top:460.52px;color:#4a8eb2;-webkit-text-stroke:0.3px #111111">B</div>
<div class="m" style="left:277.3px;top:460.52px;color:#4a8eb2;-webkit-text-stroke:0.3px #111111">D</div>
<div class="dg" style="left:329.55px;top:469px;color:#585858"></div>
<div class="dg" style="left:346.95px;top:469px;color:#585858"></div>
<div class="dg" style="left:364.45px;top:469px;color:#585858"></div>
<div class="ds" style="left:385.85px;top:469px;color:#666666"></div>
<div class="ds" style="left:403.45px;top:469px;color:#666666"></div>
<div class="ds" style="left:426.55px;top:476px;color:#6e6836"></div>
<div class="ds" style="left:444.15px;top:476px;color:#6e6836"></div>
<div class="dg" style="left:468.25px;top:469px;color:#585858"></div>
<div class="dg" style="left:486.25px;top:469px;color:#585858"></div>
<div class="dg" style="left:505.95px;top:469px;color:#585858"></div>
<div class="dg" style="left:523.55px;top:469px;color:#585858"></div>
<div class="dg" style="left:570.7px;top:469px;color:#585858"></div>
<div class="dg" style="left:588.1px;top:469px;color:#585858"></div>
<div class="dg" style="left:605.6px;top:469px;color:#585858"></div>
<div class="ds" style="left:627px;top:469px;color:#666666"></div>
<div class="ds" style="left:644.6px;top:469px;color:#666666"></div>
<div class="ds" style="left:667.7px;top:476px;color:#6e6836"></div>
<div class="ds" style="left:685.3px;top:476px;color:#6e6836"></div>
<div class="dg" style="left:709.4px;top:469px;color:#585858"></div>
<div class="dg" style="left:727.4px;top:469px;color:#585858"></div>
<div class="dg" style="left:747.1px;top:469px;color:#585858"></div>
<div class="dg" style="left:764.7px;top:469px;color:#585858"></div>
<div class="dg" style="left:811.85px;top:469px;color:#585858"></div>
<div class="dg" style="left:829.25px;top:469px;color:#585858"></div>
<div class="dg" style="left:846.75px;top:469px;color:#585858"></div>
<div class="ds" style="left:868.15px;top:469px;color:#666666"></div>
<div class="ds" style="left:885.75px;top:469px;color:#666666"></div>
<div class="ds" style="left:908.85px;top:476px;color:#6e6836"></div>
<div class="ds" style="left:926.45px;top:476px;color:#6e6836"></div>
<div class="dg" style="left:950.55px;top:469px;color:#585858"></div>
<div class="dg" style="left:968.55px;top:469px;color:#585858"></div>
<div class="dg" style="left:988.25px;top:469px;color:#585858"></div>
<div class="dg" style="left:1005.85px;top:469px;color:#585858"></div>
<div class="dg" style="left:1053px;top:469px;color:#585858"></div>
<div class="dg" style="left:1070.4px;top:469px;color:#585858"></div>
<div class="dg" style="left:1087.9px;top:469px;color:#585858"></div>
<div class="ds" style="left:1109.3px;top:469px;color:#666666"></div>
<div class="ds" style="left:1126.9px;top:469px;color:#666666"></div>
<div class="ds" style="left:1150px;top:476px;color:#6e6836"></div>
<div class="ds" style="left:1167.6px;top:476px;color:#6e6836"></div>
<div class="dg" style="left:1191.7px;top:469px;color:#585858"></div>
<div class="dg" style="left:1209.7px;top:469px;color:#585858"></div>
<div class="dg" style="left:1229.4px;top:469px;color:#585858"></div>
<div class="dg" style="left:1247px;top:469px;color:#585858"></div>
<div class="dg" style="left:1294.15px;top:469px;color:#585858"></div>
<div class="dg" style="left:1311.55px;top:469px;color:#585858"></div>
<div class="dg" style="left:1329.05px;top:469px;color:#585858"></div>
<div class="ds" style="left:1350.45px;top:469px;color:#666666"></div>
<div class="ds" style="left:1368.05px;top:469px;color:#666666"></div>
<div class="ds" style="left:1391.15px;top:476px;color:#6e6836"></div>
<div class="ds" style="left:1408.75px;top:476px;color:#6e6836"></div>
<div class="dg" style="left:1432.85px;top:469px;color:#585858"></div>
<div class="dg" style="left:1450.85px;top:469px;color:#585858"></div>
<div class="dg" style="left:1470.55px;top:469px;color:#585858"></div>
<div class="dg" style="left:1488.15px;top:469px;color:#585858"></div>
<div class="dg" style="left:1535.3px;top:469px;color:#585858"></div>
<div class="dg" style="left:1552.7px;top:469px;color:#585858"></div>
<div class="dg" style="left:1570.2px;top:469px;color:#585858"></div>
<div class="ds" style="left:1591.6px;top:469px;color:#666666"></div>
<div class="ds" style="left:1609.2px;top:469px;color:#666666"></div>
<div class="ds" style="left:1632.3px;top:476px;color:#6e6836"></div>
<div class="ds" style="left:1649.9px;top:476px;color:#6e6836"></div>
<div class="dg" style="left:1674px;top:469px;color:#585858"></div>
<div class="dg" style="left:1692px;top:469px;color:#585858"></div>
<div class="dg" style="left:1711.7px;top:469px;color:#585858"></div>
<div class="dg" style="left:1729.3px;top:469px;color:#585858"></div>
<div class="m" style="left:18.1px;top:490.98px;color:#8c8c8c;-webkit-text-stroke:0.3px #111111">1</div>
<div class="m" style="left:35.8px;top:490.98px;color:#8c8c8c;-webkit-text-stroke:0.3px #111111">5</div>
<div class="m" style="left:83.3px;top:490.98px;color:#8e8e8e;-webkit-text-stroke:0.3px #111111">F</div>
<div class="m" style="left:100.3px;top:490.98px;color:#8e8e8e;-webkit-text-stroke:0.3px #111111">#</div>
<div class="m" style="left:117.8px;top:490.98px;color:#8e8e8e;-webkit-text-stroke:0.3px #111111">5</div>
<div class="m z" style="left:137.4px;top:490.98px;color:#8e8e8e;-webkit-text-stroke:0.3px #111111">0</div>
<div class="m" style="left:155px;top:490.98px;color:#8e8e8e;-webkit-text-stroke:0.3px #111111">A</div>
<div class="ds" style="left:185.2px;top:507px;color:#6e6836"></div>
<div class="ds" style="left:202.9px;top:507px;color:#6e6836"></div>
<div class="dg" style="left:227px;top:500px;color:#928d50;opacity:.55;height:1.6px"></div>
<div class="m" style="left:239.8px;top:490.98px;color:#928d50;-webkit-text-stroke:0.3px #111111">O</div>
<div class="m" style="left:258.6px;top:490.98px;color:#928d50;-webkit-text-stroke:0.3px #111111">7</div>
<div class="m" style="left:277.3px;top:490.98px;color:#928d50;-webkit-text-stroke:0.3px #111111">4</div>
<div class="dg" style="left:329.55px;top:500px;color:#585858"></div>
<div class="dg" style="left:346.95px;top:500px;color:#585858"></div>
<div class="dg" style="left:364.45px;top:500px;color:#585858"></div>
<div class="ds" style="left:385.85px;top:500px;color:#666666"></div>
<div class="ds" style="left:403.45px;top:500px;color:#666666"></div>
<div class="ds" style="left:426.55px;top:507px;color:#6e6836"></div>
<div class="ds" style="left:444.15px;top:507px;color:#6e6836"></div>
<div class="dg" style="left:468.25px;top:500px;color:#585858"></div>
<div class="dg" style="left:486.25px;top:500px;color:#585858"></div>
<div class="dg" style="left:505.95px;top:500px;color:#585858"></div>
<div class="dg" style="left:523.55px;top:500px;color:#585858"></div>
<div class="dg" style="left:570.7px;top:500px;color:#585858"></div>
<div class="dg" style="left:588.1px;top:500px;color:#585858"></div>
<div class="dg" style="left:605.6px;top:500px;color:#585858"></div>
<div class="ds" style="left:627px;top:500px;color:#666666"></div>
<div class="ds" style="left:644.6px;top:500px;color:#666666"></div>
<div class="ds" style="left:667.7px;top:507px;color:#6e6836"></div>
<div class="ds" style="left:685.3px;top:507px;color:#6e6836"></div>
<div class="dg" style="left:709.4px;top:500px;color:#585858"></div>
<div class="dg" style="left:727.4px;top:500px;color:#585858"></div>
<div class="dg" style="left:747.1px;top:500px;color:#585858"></div>
<div class="dg" style="left:764.7px;top:500px;color:#585858"></div>
<div class="dg" style="left:811.85px;top:500px;color:#585858"></div>
<div class="dg" style="left:829.25px;top:500px;color:#585858"></div>
<div class="dg" style="left:846.75px;top:500px;color:#585858"></div>
<div class="ds" style="left:868.15px;top:500px;color:#666666"></div>
<div class="ds" style="left:885.75px;top:500px;color:#666666"></div>
<div class="ds" style="left:908.85px;top:507px;color:#6e6836"></div>
<div class="ds" style="left:926.45px;top:507px;color:#6e6836"></div>
<div class="dg" style="left:950.55px;top:500px;color:#585858"></div>
<div class="dg" style="left:968.55px;top:500px;color:#585858"></div>
<div class="dg" style="left:988.25px;top:500px;color:#585858"></div>
<div class="dg" style="left:1005.85px;top:500px;color:#585858"></div>
<div class="dg" style="left:1053px;top:500px;color:#585858"></div>
<div class="dg" style="left:1070.4px;top:500px;color:#585858"></div>
<div class="dg" style="left:1087.9px;top:500px;color:#585858"></div>
<div class="ds" style="left:1109.3px;top:500px;color:#666666"></div>
<div class="ds" style="left:1126.9px;top:500px;color:#666666"></div>
<div class="ds" style="left:1150px;top:507px;color:#6e6836"></div>
<div class="ds" style="left:1167.6px;top:507px;color:#6e6836"></div>
<div class="dg" style="left:1191.7px;top:500px;color:#585858"></div>
<div class="dg" style="left:1209.7px;top:500px;color:#585858"></div>
<div class="dg" style="left:1229.4px;top:500px;color:#585858"></div>
<div class="dg" style="left:1247px;top:500px;color:#585858"></div>
<div class="dg" style="left:1294.15px;top:500px;color:#585858"></div>
<div class="dg" style="left:1311.55px;top:500px;color:#585858"></div>
<div class="dg" style="left:1329.05px;top:500px;color:#585858"></div>
<div class="ds" style="left:1350.45px;top:500px;color:#666666"></div>
<div class="ds" style="left:1368.05px;top:500px;color:#666666"></div>
<div class="ds" style="left:1391.15px;top:507px;color:#6e6836"></div>
<div class="ds" style="left:1408.75px;top:507px;color:#6e6836"></div>
<div class="dg" style="left:1432.85px;top:500px;color:#585858"></div>
<div class="dg" style="left:1450.85px;top:500px;color:#585858"></div>
<div class="dg" style="left:1470.55px;top:500px;color:#585858"></div>
<div class="dg" style="left:1488.15px;top:500px;color:#585858"></div>
<div class="dg" style="left:1535.3px;top:500px;color:#585858"></div>
<div class="dg" style="left:1552.7px;top:500px;color:#585858"></div>
<div class="dg" style="left:1570.2px;top:500px;color:#585858"></div>
<div class="ds" style="left:1591.6px;top:500px;color:#666666"></div>
<div class="ds" style="left:1609.2px;top:500px;color:#666666"></div>
<div class="ds" style="left:1632.3px;top:507px;color:#6e6836"></div>
<div class="ds" style="left:1649.9px;top:507px;color:#6e6836"></div>
<div class="dg" style="left:1674px;top:500px;color:#585858"></div>
<div class="dg" style="left:1692px;top:500px;color:#585858"></div>
<div class="dg" style="left:1711.7px;top:500px;color:#585858"></div>
<div class="dg" style="left:1729.3px;top:500px;color:#585858"></div>
<div class="a" style="left:3px;top:516.16px;width:52px;height:37px;background:#515151"></div>
<div class="m" style="left:18.1px;top:524.71px;color:#ffffff">1</div>
<div class="m" style="left:35.8px;top:524.71px;color:#ffffff">6</div>
<div class="a" style="left:85px;top:516.16px;width:211px;height:37px;background:#515151"></div>
<div class="a" style="left:224.3px;top:516.16px;width:17.3px;height:37px;background:#36a3bc"></div>
<div class="m" style="left:83.3px;top:524.71px;color:#ffffff">F</div>
<div class="dash" style="left:104.6px;top:535.26px;color:#ffffff"></div>
<div class="m" style="left:117.8px;top:524.71px;color:#ffffff">6</div>
<div class="m z" style="left:137.4px;top:524.71px;color:#ffffff">0</div>
<div class="m" style="left:155px;top:524.71px;color:#ffffff">A</div>
<div class="ds" style="left:185.2px;top:540px;color:#b8b8b8"></div>
<div class="ds" style="left:202.9px;top:540px;color:#b8b8b8"></div>
<div class="dg" style="left:227px;top:533px;color:#1a5566;opacity:.9;height:1.6px"></div>
<div class="m" style="left:239.8px;top:524.71px;color:#ffffff">T</div>
<div class="m" style="left:258.6px;top:524.71px;color:#ffffff">D</div>
<div class="m" style="left:277.3px;top:524.71px;color:#ffffff">4</div>
<div class="a" style="left:326.15px;top:516.16px;width:211px;height:37px;background:#515151"></div>
<div class="dg" style="left:329.55px;top:533px;color:#a4a4a4"></div>
<div class="dg" style="left:346.95px;top:533px;color:#a4a4a4"></div>
<div class="dg" style="left:364.45px;top:533px;color:#a4a4a4"></div>
<div class="ds" style="left:385.85px;top:533px;color:#acacac"></div>
<div class="ds" style="left:403.45px;top:533px;color:#acacac"></div>
<div class="ds" style="left:426.55px;top:540px;color:#a89a48"></div>
<div class="ds" style="left:444.15px;top:540px;color:#a89a48"></div>
<div class="dg" style="left:468.25px;top:533px;color:#a4a4a4"></div>
<div class="dg" style="left:486.25px;top:533px;color:#a4a4a4"></div>
<div class="dg" style="left:505.95px;top:533px;color:#a4a4a4"></div>
<div class="dg" style="left:523.55px;top:533px;color:#a4a4a4"></div>
<div class="a" style="left:567.3px;top:516.16px;width:211px;height:37px;background:#515151"></div>
<div class="dg" style="left:570.7px;top:533px;color:#a4a4a4"></div>
<div class="dg" style="left:588.1px;top:533px;color:#a4a4a4"></div>
<div class="dg" style="left:605.6px;top:533px;color:#a4a4a4"></div>
<div class="ds" style="left:627px;top:533px;color:#acacac"></div>
<div class="ds" style="left:644.6px;top:533px;color:#acacac"></div>
<div class="ds" style="left:667.7px;top:540px;color:#a89a48"></div>
<div class="ds" style="left:685.3px;top:540px;color:#a89a48"></div>
<div class="dg" style="left:709.4px;top:533px;color:#a4a4a4"></div>
<div class="dg" style="left:727.4px;top:533px;color:#a4a4a4"></div>
<div class="dg" style="left:747.1px;top:533px;color:#a4a4a4"></div>
<div class="dg" style="left:764.7px;top:533px;color:#a4a4a4"></div>
<div class="a" style="left:808.45px;top:516.16px;width:211px;height:37px;background:#515151"></div>
<div class="dg" style="left:811.85px;top:533px;color:#a4a4a4"></div>
<div class="dg" style="left:829.25px;top:533px;color:#a4a4a4"></div>
<div class="dg" style="left:846.75px;top:533px;color:#a4a4a4"></div>
<div class="ds" style="left:868.15px;top:533px;color:#acacac"></div>
<div class="ds" style="left:885.75px;top:533px;color:#acacac"></div>
<div class="ds" style="left:908.85px;top:540px;color:#a89a48"></div>
<div class="ds" style="left:926.45px;top:540px;color:#a89a48"></div>
<div class="dg" style="left:950.55px;top:533px;color:#a4a4a4"></div>
<div class="dg" style="left:968.55px;top:533px;color:#a4a4a4"></div>
<div class="dg" style="left:988.25px;top:533px;color:#a4a4a4"></div>
<div class="dg" style="left:1005.85px;top:533px;color:#a4a4a4"></div>
<div class="a" style="left:1049.6px;top:516.16px;width:211px;height:37px;background:#515151"></div>
<div class="dg" style="left:1053px;top:533px;color:#a4a4a4"></div>
<div class="dg" style="left:1070.4px;top:533px;color:#a4a4a4"></div>
<div class="dg" style="left:1087.9px;top:533px;color:#a4a4a4"></div>
<div class="ds" style="left:1109.3px;top:533px;color:#acacac"></div>
<div class="ds" style="left:1126.9px;top:533px;color:#acacac"></div>
<div class="ds" style="left:1150px;top:540px;color:#a89a48"></div>
<div class="ds" style="left:1167.6px;top:540px;color:#a89a48"></div>
<div class="dg" style="left:1191.7px;top:533px;color:#a4a4a4"></div>
<div class="dg" style="left:1209.7px;top:533px;color:#a4a4a4"></div>
<div class="dg" style="left:1229.4px;top:533px;color:#a4a4a4"></div>
<div class="dg" style="left:1247px;top:533px;color:#a4a4a4"></div>
<div class="a" style="left:1290.75px;top:516.16px;width:211px;height:37px;background:#515151"></div>
<div class="dg" style="left:1294.15px;top:533px;color:#a4a4a4"></div>
<div class="dg" style="left:1311.55px;top:533px;color:#a4a4a4"></div>
<div class="dg" style="left:1329.05px;top:533px;color:#a4a4a4"></div>
<div class="ds" style="left:1350.45px;top:533px;color:#acacac"></div>
<div class="ds" style="left:1368.05px;top:533px;color:#acacac"></div>
<div class="ds" style="left:1391.15px;top:540px;color:#a89a48"></div>
<div class="ds" style="left:1408.75px;top:540px;color:#a89a48"></div>
<div class="dg" style="left:1432.85px;top:533px;color:#a4a4a4"></div>
<div class="dg" style="left:1450.85px;top:533px;color:#a4a4a4"></div>
<div class="dg" style="left:1470.55px;top:533px;color:#a4a4a4"></div>
<div class="dg" style="left:1488.15px;top:533px;color:#a4a4a4"></div>
<div class="a" style="left:1531.9px;top:516.16px;width:211px;height:37px;background:#515151"></div>
<div class="dg" style="left:1535.3px;top:533px;color:#a4a4a4"></div>
<div class="dg" style="left:1552.7px;top:533px;color:#a4a4a4"></div>
<div class="dg" style="left:1570.2px;top:533px;color:#a4a4a4"></div>
<div class="ds" style="left:1591.6px;top:533px;color:#acacac"></div>
<div class="ds" style="left:1609.2px;top:533px;color:#acacac"></div>
<div class="ds" style="left:1632.3px;top:540px;color:#a89a48"></div>
<div class="ds" style="left:1649.9px;top:540px;color:#a89a48"></div>
<div class="dg" style="left:1674px;top:533px;color:#a4a4a4"></div>
<div class="dg" style="left:1692px;top:533px;color:#a4a4a4"></div>
<div class="dg" style="left:1711.7px;top:533px;color:#a4a4a4"></div>
<div class="dg" style="left:1729.3px;top:533px;color:#a4a4a4"></div>
<div class="m" style="left:18.1px;top:558.44px;color:#8c8c8c;-webkit-text-stroke:0.3px #111111">1</div>
<div class="m" style="left:35.8px;top:558.44px;color:#8c8c8c;-webkit-text-stroke:0.3px #111111">7</div>
<div class="m" style="left:83.3px;top:558.44px;color:#8e8e8e;-webkit-text-stroke:0.3px #111111">G</div>
<div class="m" style="left:100.3px;top:558.44px;color:#8e8e8e;-webkit-text-stroke:0.3px #111111">#</div>
<div class="m" style="left:117.8px;top:558.44px;color:#8e8e8e;-webkit-text-stroke:0.3px #111111">4</div>
<div class="m z" style="left:137.4px;top:558.44px;color:#8e8e8e;-webkit-text-stroke:0.3px #111111">0</div>
<div class="m" style="left:155px;top:558.44px;color:#8e8e8e;-webkit-text-stroke:0.3px #111111">A</div>
<div class="ds" style="left:185.2px;top:574px;color:#6e6836"></div>
<div class="ds" style="left:202.9px;top:574px;color:#6e6836"></div>
<div class="dg" style="left:227px;top:567px;color:#2e946a;opacity:.55;height:1.6px"></div>
<div class="m" style="left:239.8px;top:558.44px;color:#2e946a;-webkit-text-stroke:0.3px #111111">N</div>
<div class="m" style="left:258.6px;top:558.44px;color:#2e946a;-webkit-text-stroke:0.3px #111111">9</div>
<div class="m" style="left:277.3px;top:558.44px;color:#2e946a;-webkit-text-stroke:0.3px #111111">2</div>
<div class="dg" style="left:329.55px;top:567px;color:#585858"></div>
<div class="dg" style="left:346.95px;top:567px;color:#585858"></div>
<div class="dg" style="left:364.45px;top:567px;color:#585858"></div>
<div class="ds" style="left:385.85px;top:567px;color:#666666"></div>
<div class="ds" style="left:403.45px;top:567px;color:#666666"></div>
<div class="ds" style="left:426.55px;top:574px;color:#6e6836"></div>
<div class="ds" style="left:444.15px;top:574px;color:#6e6836"></div>
<div class="dg" style="left:468.25px;top:567px;color:#585858"></div>
<div class="dg" style="left:486.25px;top:567px;color:#585858"></div>
<div class="dg" style="left:505.95px;top:567px;color:#585858"></div>
<div class="dg" style="left:523.55px;top:567px;color:#585858"></div>
<div class="dg" style="left:570.7px;top:567px;color:#585858"></div>
<div class="dg" style="left:588.1px;top:567px;color:#585858"></div>
<div class="dg" style="left:605.6px;top:567px;color:#585858"></div>
<div class="ds" style="left:627px;top:567px;color:#666666"></div>
<div class="ds" style="left:644.6px;top:567px;color:#666666"></div>
<div class="ds" style="left:667.7px;top:574px;color:#6e6836"></div>
<div class="ds" style="left:685.3px;top:574px;color:#6e6836"></div>
<div class="dg" style="left:709.4px;top:567px;color:#585858"></div>
<div class="dg" style="left:727.4px;top:567px;color:#585858"></div>
<div class="dg" style="left:747.1px;top:567px;color:#585858"></div>
<div class="dg" style="left:764.7px;top:567px;color:#585858"></div>
<div class="dg" style="left:811.85px;top:567px;color:#585858"></div>
<div class="dg" style="left:829.25px;top:567px;color:#585858"></div>
<div class="dg" style="left:846.75px;top:567px;color:#585858"></div>
<div class="ds" style="left:868.15px;top:567px;color:#666666"></div>
<div class="ds" style="left:885.75px;top:567px;color:#666666"></div>
<div class="ds" style="left:908.85px;top:574px;color:#6e6836"></div>
<div class="ds" style="left:926.45px;top:574px;color:#6e6836"></div>
<div class="dg" style="left:950.55px;top:567px;color:#585858"></div>
<div class="dg" style="left:968.55px;top:567px;color:#585858"></div>
<div class="dg" style="left:988.25px;top:567px;color:#585858"></div>
<div class="dg" style="left:1005.85px;top:567px;color:#585858"></div>
<div class="dg" style="left:1053px;top:567px;color:#585858"></div>
<div class="dg" style="left:1070.4px;top:567px;color:#585858"></div>
<div class="dg" style="left:1087.9px;top:567px;color:#585858"></div>
<div class="ds" style="left:1109.3px;top:567px;color:#666666"></div>
<div class="ds" style="left:1126.9px;top:567px;color:#666666"></div>
<div class="ds" style="left:1150px;top:574px;color:#6e6836"></div>
<div class="ds" style="left:1167.6px;top:574px;color:#6e6836"></div>
<div class="dg" style="left:1191.7px;top:567px;color:#585858"></div>
<div class="dg" style="left:1209.7px;top:567px;color:#585858"></div>
<div class="dg" style="left:1229.4px;top:567px;color:#585858"></div>
<div class="dg" style="left:1247px;top:567px;color:#585858"></div>
<div class="dg" style="left:1294.15px;top:567px;color:#585858"></div>
<div class="dg" style="left:1311.55px;top:567px;color:#585858"></div>
<div class="dg" style="left:1329.05px;top:567px;color:#585858"></div>
<div class="ds" style="left:1350.45px;top:567px;color:#666666"></div>
<div class="ds" style="left:1368.05px;top:567px;color:#666666"></div>
<div class="ds" style="left:1391.15px;top:574px;color:#6e6836"></div>
<div class="ds" style="left:1408.75px;top:574px;color:#6e6836"></div>
<div class="dg" style="left:1432.85px;top:567px;color:#585858"></div>
<div class="dg" style="left:1450.85px;top:567px;color:#585858"></div>
<div class="dg" style="left:1470.55px;top:567px;color:#585858"></div>
<div class="dg" style="left:1488.15px;top:567px;color:#585858"></div>
<div class="dg" style="left:1535.3px;top:567px;color:#585858"></div>
<div class="dg" style="left:1552.7px;top:567px;color:#585858"></div>
<div class="dg" style="left:1570.2px;top:567px;color:#585858"></div>
<div class="ds" style="left:1591.6px;top:567px;color:#666666"></div>
<div class="ds" style="left:1609.2px;top:567px;color:#666666"></div>
<div class="ds" style="left:1632.3px;top:574px;color:#6e6836"></div>
<div class="ds" style="left:1649.9px;top:574px;color:#6e6836"></div>
<div class="dg" style="left:1674px;top:567px;color:#585858"></div>
<div class="dg" style="left:1692px;top:567px;color:#585858"></div>
<div class="dg" style="left:1711.7px;top:567px;color:#585858"></div>
<div class="dg" style="left:1729.3px;top:567px;color:#585858"></div>
<div class="m" style="left:18.1px;top:588.9px;color:#8c8c8c;-webkit-text-stroke:0.3px #111111">1</div>
<div class="m" style="left:35.8px;top:588.9px;color:#8c8c8c;-webkit-text-stroke:0.3px #111111">8</div>
<div class="m" style="left:83.3px;top:588.9px;color:#8e8e8e;-webkit-text-stroke:0.3px #111111">E</div>
<div class="dash" style="left:104.6px;top:599.45px;color:#8e8e8e"></div>
<div class="m" style="left:117.8px;top:588.9px;color:#8e8e8e;-webkit-text-stroke:0.3px #111111">4</div>
<div class="m z" style="left:137.4px;top:588.9px;color:#8e8e8e;-webkit-text-stroke:0.3px #111111">0</div>
<div class="m" style="left:155px;top:588.9px;color:#8e8e8e;-webkit-text-stroke:0.3px #111111">A</div>
<div class="ds" style="left:185.2px;top:604px;color:#6e6836"></div>
<div class="ds" style="left:202.9px;top:604px;color:#6e6836"></div>
<div class="dg" style="left:227px;top:598px;color:#928d50;opacity:.55;height:1.6px"></div>
<div class="m" style="left:239.8px;top:588.9px;color:#928d50;-webkit-text-stroke:0.3px #111111">M</div>
<div class="m" style="left:258.6px;top:588.9px;color:#928d50;-webkit-text-stroke:0.3px #111111">3</div>
<div class="m z" style="left:277.3px;top:588.9px;color:#928d50;-webkit-text-stroke:0.3px #111111">0</div>
<div class="dg" style="left:329.55px;top:598px;color:#585858"></div>
<div class="dg" style="left:346.95px;top:598px;color:#585858"></div>
<div class="dg" style="left:364.45px;top:598px;color:#585858"></div>
<div class="ds" style="left:385.85px;top:598px;color:#666666"></div>
<div class="ds" style="left:403.45px;top:598px;color:#666666"></div>
<div class="ds" style="left:426.55px;top:604px;color:#6e6836"></div>
<div class="ds" style="left:444.15px;top:604px;color:#6e6836"></div>
<div class="dg" style="left:468.25px;top:598px;color:#585858"></div>
<div class="dg" style="left:486.25px;top:598px;color:#585858"></div>
<div class="dg" style="left:505.95px;top:598px;color:#585858"></div>
<div class="dg" style="left:523.55px;top:598px;color:#585858"></div>
<div class="dg" style="left:570.7px;top:598px;color:#585858"></div>
<div class="dg" style="left:588.1px;top:598px;color:#585858"></div>
<div class="dg" style="left:605.6px;top:598px;color:#585858"></div>
<div class="ds" style="left:627px;top:598px;color:#666666"></div>
<div class="ds" style="left:644.6px;top:598px;color:#666666"></div>
<div class="ds" style="left:667.7px;top:604px;color:#6e6836"></div>
<div class="ds" style="left:685.3px;top:604px;color:#6e6836"></div>
<div class="dg" style="left:709.4px;top:598px;color:#585858"></div>
<div class="dg" style="left:727.4px;top:598px;color:#585858"></div>
<div class="dg" style="left:747.1px;top:598px;color:#585858"></div>
<div class="dg" style="left:764.7px;top:598px;color:#585858"></div>
<div class="dg" style="left:811.85px;top:598px;color:#585858"></div>
<div class="dg" style="left:829.25px;top:598px;color:#585858"></div>
<div class="dg" style="left:846.75px;top:598px;color:#585858"></div>
<div class="ds" style="left:868.15px;top:598px;color:#666666"></div>
<div class="ds" style="left:885.75px;top:598px;color:#666666"></div>
<div class="ds" style="left:908.85px;top:604px;color:#6e6836"></div>
<div class="ds" style="left:926.45px;top:604px;color:#6e6836"></div>
<div class="dg" style="left:950.55px;top:598px;color:#585858"></div>
<div class="dg" style="left:968.55px;top:598px;color:#585858"></div>
<div class="dg" style="left:988.25px;top:598px;color:#585858"></div>
<div class="dg" style="left:1005.85px;top:598px;color:#585858"></div>
<div class="dg" style="left:1053px;top:598px;color:#585858"></div>
<div class="dg" style="left:1070.4px;top:598px;color:#585858"></div>
<div class="dg" style="left:1087.9px;top:598px;color:#585858"></div>
<div class="ds" style="left:1109.3px;top:598px;color:#666666"></div>
<div class="ds" style="left:1126.9px;top:598px;color:#666666"></div>
<div class="ds" style="left:1150px;top:604px;color:#6e6836"></div>
<div class="ds" style="left:1167.6px;top:604px;color:#6e6836"></div>
<div class="dg" style="left:1191.7px;top:598px;color:#585858"></div>
<div class="dg" style="left:1209.7px;top:598px;color:#585858"></div>
<div class="dg" style="left:1229.4px;top:598px;color:#585858"></div>
<div class="dg" style="left:1247px;top:598px;color:#585858"></div>
<div class="dg" style="left:1294.15px;top:598px;color:#585858"></div>
<div class="dg" style="left:1311.55px;top:598px;color:#585858"></div>
<div class="dg" style="left:1329.05px;top:598px;color:#585858"></div>
<div class="ds" style="left:1350.45px;top:598px;color:#666666"></div>
<div class="ds" style="left:1368.05px;top:598px;color:#666666"></div>
<div class="ds" style="left:1391.15px;top:604px;color:#6e6836"></div>
<div class="ds" style="left:1408.75px;top:604px;color:#6e6836"></div>
<div class="dg" style="left:1432.85px;top:598px;color:#585858"></div>
<div class="dg" style="left:1450.85px;top:598px;color:#585858"></div>
<div class="dg" style="left:1470.55px;top:598px;color:#585858"></div>
<div class="dg" style="left:1488.15px;top:598px;color:#585858"></div>
<div class="dg" style="left:1535.3px;top:598px;color:#585858"></div>
<div class="dg" style="left:1552.7px;top:598px;color:#585858"></div>
<div class="dg" style="left:1570.2px;top:598px;color:#585858"></div>
<div class="ds" style="left:1591.6px;top:598px;color:#666666"></div>
<div class="ds" style="left:1609.2px;top:598px;color:#666666"></div>
<div class="ds" style="left:1632.3px;top:604px;color:#6e6836"></div>
<div class="ds" style="left:1649.9px;top:604px;color:#6e6836"></div>
<div class="dg" style="left:1674px;top:598px;color:#585858"></div>
<div class="dg" style="left:1692px;top:598px;color:#585858"></div>
<div class="dg" style="left:1711.7px;top:598px;color:#585858"></div>
<div class="dg" style="left:1729.3px;top:598px;color:#585858"></div>
<div class="m" style="left:18.1px;top:619.36px;color:#8c8c8c;-webkit-text-stroke:0.3px #111111">1</div>
<div class="m" style="left:35.8px;top:619.36px;color:#8c8c8c;-webkit-text-stroke:0.3px #111111">9</div>
<div class="m" style="left:83.3px;top:619.36px;color:#8e8e8e;-webkit-text-stroke:0.3px #111111">F</div>
<div class="dash" style="left:104.6px;top:629.91px;color:#8e8e8e"></div>
<div class="m" style="left:117.8px;top:619.36px;color:#8e8e8e;-webkit-text-stroke:0.3px #111111">5</div>
<div class="m z" style="left:137.4px;top:619.36px;color:#8e8e8e;-webkit-text-stroke:0.3px #111111">0</div>
<div class="m" style="left:155px;top:619.36px;color:#8e8e8e;-webkit-text-stroke:0.3px #111111">A</div>
<div class="ds" style="left:185.2px;top:635px;color:#6e6836"></div>
<div class="ds" style="left:202.9px;top:635px;color:#6e6836"></div>
<div class="dg" style="left:227px;top:628px;color:#bb6d3c;opacity:.55;height:1.6px"></div>
<div class="m" style="left:239.8px;top:619.36px;color:#bb6d3c;-webkit-text-stroke:0.3px #111111">V</div>
<div class="m" style="left:258.6px;top:619.36px;color:#bb6d3c;-webkit-text-stroke:0.3px #111111">6</div>
<div class="m" style="left:277.3px;top:619.36px;color:#bb6d3c;-webkit-text-stroke:0.3px #111111">B</div>
<div class="dg" style="left:329.55px;top:628px;color:#585858"></div>
<div class="dg" style="left:346.95px;top:628px;color:#585858"></div>
<div class="dg" style="left:364.45px;top:628px;color:#585858"></div>
<div class="ds" style="left:385.85px;top:628px;color:#666666"></div>
<div class="ds" style="left:403.45px;top:628px;color:#666666"></div>
<div class="ds" style="left:426.55px;top:635px;color:#6e6836"></div>
<div class="ds" style="left:444.15px;top:635px;color:#6e6836"></div>
<div class="dg" style="left:468.25px;top:628px;color:#585858"></div>
<div class="dg" style="left:486.25px;top:628px;color:#585858"></div>
<div class="dg" style="left:505.95px;top:628px;color:#585858"></div>
<div class="dg" style="left:523.55px;top:628px;color:#585858"></div>
<div class="dg" style="left:570.7px;top:628px;color:#585858"></div>
<div class="dg" style="left:588.1px;top:628px;color:#585858"></div>
<div class="dg" style="left:605.6px;top:628px;color:#585858"></div>
<div class="ds" style="left:627px;top:628px;color:#666666"></div>
<div class="ds" style="left:644.6px;top:628px;color:#666666"></div>
<div class="ds" style="left:667.7px;top:635px;color:#6e6836"></div>
<div class="ds" style="left:685.3px;top:635px;color:#6e6836"></div>
<div class="dg" style="left:709.4px;top:628px;color:#585858"></div>
<div class="dg" style="left:727.4px;top:628px;color:#585858"></div>
<div class="dg" style="left:747.1px;top:628px;color:#585858"></div>
<div class="dg" style="left:764.7px;top:628px;color:#585858"></div>
<div class="dg" style="left:811.85px;top:628px;color:#585858"></div>
<div class="dg" style="left:829.25px;top:628px;color:#585858"></div>
<div class="dg" style="left:846.75px;top:628px;color:#585858"></div>
<div class="ds" style="left:868.15px;top:628px;color:#666666"></div>
<div class="ds" style="left:885.75px;top:628px;color:#666666"></div>
<div class="ds" style="left:908.85px;top:635px;color:#6e6836"></div>
<div class="ds" style="left:926.45px;top:635px;color:#6e6836"></div>
<div class="dg" style="left:950.55px;top:628px;color:#585858"></div>
<div class="dg" style="left:968.55px;top:628px;color:#585858"></div>
<div class="dg" style="left:988.25px;top:628px;color:#585858"></div>
<div class="dg" style="left:1005.85px;top:628px;color:#585858"></div>
<div class="dg" style="left:1053px;top:628px;color:#585858"></div>
<div class="dg" style="left:1070.4px;top:628px;color:#585858"></div>
<div class="dg" style="left:1087.9px;top:628px;color:#585858"></div>
<div class="ds" style="left:1109.3px;top:628px;color:#666666"></div>
<div class="ds" style="left:1126.9px;top:628px;color:#666666"></div>
<div class="ds" style="left:1150px;top:635px;color:#6e6836"></div>
<div class="ds" style="left:1167.6px;top:635px;color:#6e6836"></div>
<div class="dg" style="left:1191.7px;top:628px;color:#585858"></div>
<div class="dg" style="left:1209.7px;top:628px;color:#585858"></div>
<div class="dg" style="left:1229.4px;top:628px;color:#585858"></div>
<div class="dg" style="left:1247px;top:628px;color:#585858"></div>
<div class="dg" style="left:1294.15px;top:628px;color:#585858"></div>
<div class="dg" style="left:1311.55px;top:628px;color:#585858"></div>
<div class="dg" style="left:1329.05px;top:628px;color:#585858"></div>
<div class="ds" style="left:1350.45px;top:628px;color:#666666"></div>
<div class="ds" style="left:1368.05px;top:628px;color:#666666"></div>
<div class="ds" style="left:1391.15px;top:635px;color:#6e6836"></div>
<div class="ds" style="left:1408.75px;top:635px;color:#6e6836"></div>
<div class="dg" style="left:1432.85px;top:628px;color:#585858"></div>
<div class="dg" style="left:1450.85px;top:628px;color:#585858"></div>
<div class="dg" style="left:1470.55px;top:628px;color:#585858"></div>
<div class="dg" style="left:1488.15px;top:628px;color:#585858"></div>
<div class="dg" style="left:1535.3px;top:628px;color:#585858"></div>
<div class="dg" style="left:1552.7px;top:628px;color:#585858"></div>
<div class="dg" style="left:1570.2px;top:628px;color:#585858"></div>
<div class="ds" style="left:1591.6px;top:628px;color:#666666"></div>
<div class="ds" style="left:1609.2px;top:628px;color:#666666"></div>
<div class="ds" style="left:1632.3px;top:635px;color:#6e6836"></div>
<div class="ds" style="left:1649.9px;top:635px;color:#6e6836"></div>
<div class="dg" style="left:1674px;top:628px;color:#585858"></div>
<div class="dg" style="left:1692px;top:628px;color:#585858"></div>
<div class="dg" style="left:1711.7px;top:628px;color:#585858"></div>
<div class="dg" style="left:1729.3px;top:628px;color:#585858"></div>
<div class="a" style="left:3px;top:644.54px;width:52px;height:30.46px;background:#262626"></div>
<div class="m" style="left:18.1px;top:649.82px;color:#ffffff">2</div>
<div class="m z" style="left:35.8px;top:649.82px;color:#ffffff">0</div>
<div class="a" style="left:85px;top:644.54px;width:211px;height:30.46px;background:#262626"></div>
<div class="m" style="left:83.3px;top:649.82px;color:#ffffff">D</div>
<div class="m" style="left:100.3px;top:649.82px;color:#ffffff">#</div>
<div class="m" style="left:117.8px;top:649.82px;color:#ffffff">5</div>
<div class="m z" style="left:137.4px;top:649.82px;color:#ffffff">0</div>
<div class="m" style="left:155px;top:649.82px;color:#ffffff">A</div>
<div class="ds" style="left:185.2px;top:665px;color:#a89a48"></div>
<div class="ds" style="left:202.9px;top:665px;color:#a89a48"></div>
<div class="dg" style="left:227px;top:659px;color:#62c4ec;opacity:.75;height:1.6px"></div>
<div class="m" style="left:239.8px;top:649.82px;color:#62c4ec">S</div>
<div class="m" style="left:258.6px;top:649.82px;color:#62c4ec">5</div>
<div class="m" style="left:277.3px;top:649.82px;color:#62c4ec">F</div>
<div class="a" style="left:326.15px;top:644.54px;width:211px;height:30.46px;background:#262626"></div>
<div class="dg" style="left:329.55px;top:659px;color:#a4a4a4"></div>
<div class="dg" style="left:346.95px;top:659px;color:#a4a4a4"></div>
<div class="dg" style="left:364.45px;top:659px;color:#a4a4a4"></div>
<div class="ds" style="left:385.85px;top:659px;color:#acacac"></div>
<div class="ds" style="left:403.45px;top:659px;color:#acacac"></div>
<div class="ds" style="left:426.55px;top:665px;color:#a89a48"></div>
<div class="ds" style="left:444.15px;top:665px;color:#a89a48"></div>
<div class="dg" style="left:468.25px;top:659px;color:#a4a4a4"></div>
<div class="dg" style="left:486.25px;top:659px;color:#a4a4a4"></div>
<div class="dg" style="left:505.95px;top:659px;color:#a4a4a4"></div>
<div class="dg" style="left:523.55px;top:659px;color:#a4a4a4"></div>
<div class="a" style="left:567.3px;top:644.54px;width:211px;height:30.46px;background:#262626"></div>
<div class="dg" style="left:570.7px;top:659px;color:#a4a4a4"></div>
<div class="dg" style="left:588.1px;top:659px;color:#a4a4a4"></div>
<div class="dg" style="left:605.6px;top:659px;color:#a4a4a4"></div>
<div class="ds" style="left:627px;top:659px;color:#acacac"></div>
<div class="ds" style="left:644.6px;top:659px;color:#acacac"></div>
<div class="ds" style="left:667.7px;top:665px;color:#a89a48"></div>
<div class="ds" style="left:685.3px;top:665px;color:#a89a48"></div>
<div class="dg" style="left:709.4px;top:659px;color:#a4a4a4"></div>
<div class="dg" style="left:727.4px;top:659px;color:#a4a4a4"></div>
<div class="dg" style="left:747.1px;top:659px;color:#a4a4a4"></div>
<div class="dg" style="left:764.7px;top:659px;color:#a4a4a4"></div>
<div class="a" style="left:808.45px;top:644.54px;width:211px;height:30.46px;background:#262626"></div>
<div class="dg" style="left:811.85px;top:659px;color:#a4a4a4"></div>
<div class="dg" style="left:829.25px;top:659px;color:#a4a4a4"></div>
<div class="dg" style="left:846.75px;top:659px;color:#a4a4a4"></div>
<div class="ds" style="left:868.15px;top:659px;color:#acacac"></div>
<div class="ds" style="left:885.75px;top:659px;color:#acacac"></div>
<div class="ds" style="left:908.85px;top:665px;color:#a89a48"></div>
<div class="ds" style="left:926.45px;top:665px;color:#a89a48"></div>
<div class="dg" style="left:950.55px;top:659px;color:#a4a4a4"></div>
<div class="dg" style="left:968.55px;top:659px;color:#a4a4a4"></div>
<div class="dg" style="left:988.25px;top:659px;color:#a4a4a4"></div>
<div class="dg" style="left:1005.85px;top:659px;color:#a4a4a4"></div>
<div class="a" style="left:1049.6px;top:644.54px;width:211px;height:30.46px;background:#262626"></div>
<div class="dg" style="left:1053px;top:659px;color:#a4a4a4"></div>
<div class="dg" style="left:1070.4px;top:659px;color:#a4a4a4"></div>
<div class="dg" style="left:1087.9px;top:659px;color:#a4a4a4"></div>
<div class="ds" style="left:1109.3px;top:659px;color:#acacac"></div>
<div class="ds" style="left:1126.9px;top:659px;color:#acacac"></div>
<div class="ds" style="left:1150px;top:665px;color:#a89a48"></div>
<div class="ds" style="left:1167.6px;top:665px;color:#a89a48"></div>
<div class="dg" style="left:1191.7px;top:659px;color:#a4a4a4"></div>
<div class="dg" style="left:1209.7px;top:659px;color:#a4a4a4"></div>
<div class="dg" style="left:1229.4px;top:659px;color:#a4a4a4"></div>
<div class="dg" style="left:1247px;top:659px;color:#a4a4a4"></div>
<div class="a" style="left:1290.75px;top:644.54px;width:211px;height:30.46px;background:#262626"></div>
<div class="dg" style="left:1294.15px;top:659px;color:#a4a4a4"></div>
<div class="dg" style="left:1311.55px;top:659px;color:#a4a4a4"></div>
<div class="dg" style="left:1329.05px;top:659px;color:#a4a4a4"></div>
<div class="ds" style="left:1350.45px;top:659px;color:#acacac"></div>
<div class="ds" style="left:1368.05px;top:659px;color:#acacac"></div>
<div class="ds" style="left:1391.15px;top:665px;color:#a89a48"></div>
<div class="ds" style="left:1408.75px;top:665px;color:#a89a48"></div>
<div class="dg" style="left:1432.85px;top:659px;color:#a4a4a4"></div>
<div class="dg" style="left:1450.85px;top:659px;color:#a4a4a4"></div>
<div class="dg" style="left:1470.55px;top:659px;color:#a4a4a4"></div>
<div class="dg" style="left:1488.15px;top:659px;color:#a4a4a4"></div>
<div class="a" style="left:1531.9px;top:644.54px;width:211px;height:30.46px;background:#262626"></div>
<div class="dg" style="left:1535.3px;top:659px;color:#a4a4a4"></div>
<div class="dg" style="left:1552.7px;top:659px;color:#a4a4a4"></div>
<div class="dg" style="left:1570.2px;top:659px;color:#a4a4a4"></div>
<div class="ds" style="left:1591.6px;top:659px;color:#acacac"></div>
<div class="ds" style="left:1609.2px;top:659px;color:#acacac"></div>
<div class="ds" style="left:1632.3px;top:665px;color:#a89a48"></div>
<div class="ds" style="left:1649.9px;top:665px;color:#a89a48"></div>
<div class="dg" style="left:1674px;top:659px;color:#a4a4a4"></div>
<div class="dg" style="left:1692px;top:659px;color:#a4a4a4"></div>
<div class="dg" style="left:1711.7px;top:659px;color:#a4a4a4"></div>
<div class="dg" style="left:1729.3px;top:659px;color:#a4a4a4"></div>
<div class="m" style="left:18.1px;top:680.28px;color:#8c8c8c;-webkit-text-stroke:0.3px #111111">2</div>
<div class="m" style="left:35.8px;top:680.28px;color:#8c8c8c;-webkit-text-stroke:0.3px #111111">1</div>
<div class="m" style="left:83.3px;top:680.28px;color:#8e8e8e;-webkit-text-stroke:0.3px #111111">C</div>
<div class="m" style="left:100.3px;top:680.28px;color:#8e8e8e;-webkit-text-stroke:0.3px #111111">#</div>
<div class="m" style="left:117.8px;top:680.28px;color:#8e8e8e;-webkit-text-stroke:0.3px #111111">5</div>
<div class="m z" style="left:137.4px;top:680.28px;color:#8e8e8e;-webkit-text-stroke:0.3px #111111">0</div>
<div class="m" style="left:155px;top:680.28px;color:#8e8e8e;-webkit-text-stroke:0.3px #111111">A</div>
<div class="ds" style="left:185.2px;top:696px;color:#6e6836"></div>
<div class="ds" style="left:202.9px;top:696px;color:#6e6836"></div>
<div class="dg" style="left:227px;top:689px;color:#bb6d3c;opacity:.55;height:1.6px"></div>
<div class="m" style="left:239.8px;top:680.28px;color:#bb6d3c;-webkit-text-stroke:0.3px #111111">D</div>
<div class="m" style="left:258.6px;top:680.28px;color:#bb6d3c;-webkit-text-stroke:0.3px #111111">4</div>
<div class="m" style="left:277.3px;top:680.28px;color:#bb6d3c;-webkit-text-stroke:0.3px #111111">7</div>
<div class="dg" style="left:329.55px;top:689px;color:#585858"></div>
<div class="dg" style="left:346.95px;top:689px;color:#585858"></div>
<div class="dg" style="left:364.45px;top:689px;color:#585858"></div>
<div class="ds" style="left:385.85px;top:689px;color:#666666"></div>
<div class="ds" style="left:403.45px;top:689px;color:#666666"></div>
<div class="ds" style="left:426.55px;top:696px;color:#6e6836"></div>
<div class="ds" style="left:444.15px;top:696px;color:#6e6836"></div>
<div class="dg" style="left:468.25px;top:689px;color:#585858"></div>
<div class="dg" style="left:486.25px;top:689px;color:#585858"></div>
<div class="dg" style="left:505.95px;top:689px;color:#585858"></div>
<div class="dg" style="left:523.55px;top:689px;color:#585858"></div>
<div class="dg" style="left:570.7px;top:689px;color:#585858"></div>
<div class="dg" style="left:588.1px;top:689px;color:#585858"></div>
<div class="dg" style="left:605.6px;top:689px;color:#585858"></div>
<div class="ds" style="left:627px;top:689px;color:#666666"></div>
<div class="ds" style="left:644.6px;top:689px;color:#666666"></div>
<div class="ds" style="left:667.7px;top:696px;color:#6e6836"></div>
<div class="ds" style="left:685.3px;top:696px;color:#6e6836"></div>
<div class="dg" style="left:709.4px;top:689px;color:#585858"></div>
<div class="dg" style="left:727.4px;top:689px;color:#585858"></div>
<div class="dg" style="left:747.1px;top:689px;color:#585858"></div>
<div class="dg" style="left:764.7px;top:689px;color:#585858"></div>
<div class="dg" style="left:811.85px;top:689px;color:#585858"></div>
<div class="dg" style="left:829.25px;top:689px;color:#585858"></div>
<div class="dg" style="left:846.75px;top:689px;color:#585858"></div>
<div class="ds" style="left:868.15px;top:689px;color:#666666"></div>
<div class="ds" style="left:885.75px;top:689px;color:#666666"></div>
<div class="ds" style="left:908.85px;top:696px;color:#6e6836"></div>
<div class="ds" style="left:926.45px;top:696px;color:#6e6836"></div>
<div class="dg" style="left:950.55px;top:689px;color:#585858"></div>
<div class="dg" style="left:968.55px;top:689px;color:#585858"></div>
<div class="dg" style="left:988.25px;top:689px;color:#585858"></div>
<div class="dg" style="left:1005.85px;top:689px;color:#585858"></div>
<div class="dg" style="left:1053px;top:689px;color:#585858"></div>
<div class="dg" style="left:1070.4px;top:689px;color:#585858"></div>
<div class="dg" style="left:1087.9px;top:689px;color:#585858"></div>
<div class="ds" style="left:1109.3px;top:689px;color:#666666"></div>
<div class="ds" style="left:1126.9px;top:689px;color:#666666"></div>
<div class="ds" style="left:1150px;top:696px;color:#6e6836"></div>
<div class="ds" style="left:1167.6px;top:696px;color:#6e6836"></div>
<div class="dg" style="left:1191.7px;top:689px;color:#585858"></div>
<div class="dg" style="left:1209.7px;top:689px;color:#585858"></div>
<div class="dg" style="left:1229.4px;top:689px;color:#585858"></div>
<div class="dg" style="left:1247px;top:689px;color:#585858"></div>
<div class="dg" style="left:1294.15px;top:689px;color:#585858"></div>
<div class="dg" style="left:1311.55px;top:689px;color:#585858"></div>
<div class="dg" style="left:1329.05px;top:689px;color:#585858"></div>
<div class="ds" style="left:1350.45px;top:689px;color:#666666"></div>
<div class="ds" style="left:1368.05px;top:689px;color:#666666"></div>
<div class="ds" style="left:1391.15px;top:696px;color:#6e6836"></div>
<div class="ds" style="left:1408.75px;top:696px;color:#6e6836"></div>
<div class="dg" style="left:1432.85px;top:689px;color:#585858"></div>
<div class="dg" style="left:1450.85px;top:689px;color:#585858"></div>
<div class="dg" style="left:1470.55px;top:689px;color:#585858"></div>
<div class="dg" style="left:1488.15px;top:689px;color:#585858"></div>
<div class="dg" style="left:1535.3px;top:689px;color:#585858"></div>
<div class="dg" style="left:1552.7px;top:689px;color:#585858"></div>
<div class="dg" style="left:1570.2px;top:689px;color:#585858"></div>
<div class="ds" style="left:1591.6px;top:689px;color:#666666"></div>
<div class="ds" style="left:1609.2px;top:689px;color:#666666"></div>
<div class="ds" style="left:1632.3px;top:696px;color:#6e6836"></div>
<div class="ds" style="left:1649.9px;top:696px;color:#6e6836"></div>
<div class="dg" style="left:1674px;top:689px;color:#585858"></div>
<div class="dg" style="left:1692px;top:689px;color:#585858"></div>
<div class="dg" style="left:1711.7px;top:689px;color:#585858"></div>
<div class="dg" style="left:1729.3px;top:689px;color:#585858"></div>
<div class="m" style="left:18.1px;top:710.74px;color:#8c8c8c;-webkit-text-stroke:0.3px #111111">2</div>
<div class="m" style="left:35.8px;top:710.74px;color:#8c8c8c;-webkit-text-stroke:0.3px #111111">2</div>
<div class="m" style="left:83.3px;top:710.74px;color:#8e8e8e;-webkit-text-stroke:0.3px #111111">G</div>
<div class="m" style="left:100.3px;top:710.74px;color:#8e8e8e;-webkit-text-stroke:0.3px #111111">#</div>
<div class="m" style="left:117.8px;top:710.74px;color:#8e8e8e;-webkit-text-stroke:0.3px #111111">6</div>
<div class="m z" style="left:137.4px;top:710.74px;color:#8e8e8e;-webkit-text-stroke:0.3px #111111">0</div>
<div class="m" style="left:155px;top:710.74px;color:#8e8e8e;-webkit-text-stroke:0.3px #111111">A</div>
<div class="ds" style="left:185.2px;top:726px;color:#6e6836"></div>
<div class="ds" style="left:202.9px;top:726px;color:#6e6836"></div>
<div class="dg" style="left:227px;top:719px;color:#924c8c;opacity:.55;height:1.6px"></div>
<div class="m" style="left:239.8px;top:710.74px;color:#924c8c;-webkit-text-stroke:0.3px #111111">Z</div>
<div class="m" style="left:258.6px;top:710.74px;color:#924c8c;-webkit-text-stroke:0.3px #111111">3</div>
<div class="m" style="left:277.3px;top:710.74px;color:#924c8c;-webkit-text-stroke:0.3px #111111">B</div>
<div class="dg" style="left:329.55px;top:719px;color:#585858"></div>
<div class="dg" style="left:346.95px;top:719px;color:#585858"></div>
<div class="dg" style="left:364.45px;top:719px;color:#585858"></div>
<div class="ds" style="left:385.85px;top:719px;color:#666666"></div>
<div class="ds" style="left:403.45px;top:719px;color:#666666"></div>
<div class="ds" style="left:426.55px;top:726px;color:#6e6836"></div>
<div class="ds" style="left:444.15px;top:726px;color:#6e6836"></div>
<div class="dg" style="left:468.25px;top:719px;color:#585858"></div>
<div class="dg" style="left:486.25px;top:719px;color:#585858"></div>
<div class="dg" style="left:505.95px;top:719px;color:#585858"></div>
<div class="dg" style="left:523.55px;top:719px;color:#585858"></div>
<div class="dg" style="left:570.7px;top:719px;color:#585858"></div>
<div class="dg" style="left:588.1px;top:719px;color:#585858"></div>
<div class="dg" style="left:605.6px;top:719px;color:#585858"></div>
<div class="ds" style="left:627px;top:719px;color:#666666"></div>
<div class="ds" style="left:644.6px;top:719px;color:#666666"></div>
<div class="ds" style="left:667.7px;top:726px;color:#6e6836"></div>
<div class="ds" style="left:685.3px;top:726px;color:#6e6836"></div>
<div class="dg" style="left:709.4px;top:719px;color:#585858"></div>
<div class="dg" style="left:727.4px;top:719px;color:#585858"></div>
<div class="dg" style="left:747.1px;top:719px;color:#585858"></div>
<div class="dg" style="left:764.7px;top:719px;color:#585858"></div>
<div class="dg" style="left:811.85px;top:719px;color:#585858"></div>
<div class="dg" style="left:829.25px;top:719px;color:#585858"></div>
<div class="dg" style="left:846.75px;top:719px;color:#585858"></div>
<div class="ds" style="left:868.15px;top:719px;color:#666666"></div>
<div class="ds" style="left:885.75px;top:719px;color:#666666"></div>
<div class="ds" style="left:908.85px;top:726px;color:#6e6836"></div>
<div class="ds" style="left:926.45px;top:726px;color:#6e6836"></div>
<div class="dg" style="left:950.55px;top:719px;color:#585858"></div>
<div class="dg" style="left:968.55px;top:719px;color:#585858"></div>
<div class="dg" style="left:988.25px;top:719px;color:#585858"></div>
<div class="dg" style="left:1005.85px;top:719px;color:#585858"></div>
<div class="dg" style="left:1053px;top:719px;color:#585858"></div>
<div class="dg" style="left:1070.4px;top:719px;color:#585858"></div>
<div class="dg" style="left:1087.9px;top:719px;color:#585858"></div>
<div class="ds" style="left:1109.3px;top:719px;color:#666666"></div>
<div class="ds" style="left:1126.9px;top:719px;color:#666666"></div>
<div class="ds" style="left:1150px;top:726px;color:#6e6836"></div>
<div class="ds" style="left:1167.6px;top:726px;color:#6e6836"></div>
<div class="dg" style="left:1191.7px;top:719px;color:#585858"></div>
<div class="dg" style="left:1209.7px;top:719px;color:#585858"></div>
<div class="dg" style="left:1229.4px;top:719px;color:#585858"></div>
<div class="dg" style="left:1247px;top:719px;color:#585858"></div>
<div class="dg" style="left:1294.15px;top:719px;color:#585858"></div>
<div class="dg" style="left:1311.55px;top:719px;color:#585858"></div>
<div class="dg" style="left:1329.05px;top:719px;color:#585858"></div>
<div class="ds" style="left:1350.45px;top:719px;color:#666666"></div>
<div class="ds" style="left:1368.05px;top:719px;color:#666666"></div>
<div class="ds" style="left:1391.15px;top:726px;color:#6e6836"></div>
<div class="ds" style="left:1408.75px;top:726px;color:#6e6836"></div>
<div class="dg" style="left:1432.85px;top:719px;color:#585858"></div>
<div class="dg" style="left:1450.85px;top:719px;color:#585858"></div>
<div class="dg" style="left:1470.55px;top:719px;color:#585858"></div>
<div class="dg" style="left:1488.15px;top:719px;color:#585858"></div>
<div class="dg" style="left:1535.3px;top:719px;color:#585858"></div>
<div class="dg" style="left:1552.7px;top:719px;color:#585858"></div>
<div class="dg" style="left:1570.2px;top:719px;color:#585858"></div>
<div class="ds" style="left:1591.6px;top:719px;color:#666666"></div>
<div class="ds" style="left:1609.2px;top:719px;color:#666666"></div>
<div class="ds" style="left:1632.3px;top:726px;color:#6e6836"></div>
<div class="ds" style="left:1649.9px;top:726px;color:#6e6836"></div>
<div class="dg" style="left:1674px;top:719px;color:#585858"></div>
<div class="dg" style="left:1692px;top:719px;color:#585858"></div>
<div class="dg" style="left:1711.7px;top:719px;color:#585858"></div>
<div class="dg" style="left:1729.3px;top:719px;color:#585858"></div>
<div class="m" style="left:18.1px;top:741.2px;color:#8c8c8c;-webkit-text-stroke:0.3px #111111">2</div>
<div class="m" style="left:35.8px;top:741.2px;color:#8c8c8c;-webkit-text-stroke:0.3px #111111">3</div>
<div class="m" style="left:83.3px;top:741.2px;color:#8e8e8e;-webkit-text-stroke:0.3px #111111">D</div>
<div class="m" style="left:100.3px;top:741.2px;color:#8e8e8e;-webkit-text-stroke:0.3px #111111">#</div>
<div class="m" style="left:117.8px;top:741.2px;color:#8e8e8e;-webkit-text-stroke:0.3px #111111">4</div>
<div class="m z" style="left:137.4px;top:741.2px;color:#8e8e8e;-webkit-text-stroke:0.3px #111111">0</div>
<div class="m" style="left:155px;top:741.2px;color:#8e8e8e;-webkit-text-stroke:0.3px #111111">A</div>
<div class="ds" style="left:185.2px;top:757px;color:#6e6836"></div>
<div class="ds" style="left:202.9px;top:757px;color:#6e6836"></div>
<div class="dg" style="left:227px;top:750px;color:#924c8c;opacity:.55;height:1.6px"></div>
<div class="m" style="left:239.8px;top:741.2px;color:#924c8c;-webkit-text-stroke:0.3px #111111">Z</div>
<div class="m" style="left:258.6px;top:741.2px;color:#924c8c;-webkit-text-stroke:0.3px #111111">4</div>
<div class="m" style="left:277.3px;top:741.2px;color:#924c8c;-webkit-text-stroke:0.3px #111111">B</div>
<div class="dg" style="left:329.55px;top:750px;color:#585858"></div>
<div class="dg" style="left:346.95px;top:750px;color:#585858"></div>
<div class="dg" style="left:364.45px;top:750px;color:#585858"></div>
<div class="ds" style="left:385.85px;top:750px;color:#666666"></div>
<div class="ds" style="left:403.45px;top:750px;color:#666666"></div>
<div class="ds" style="left:426.55px;top:757px;color:#6e6836"></div>
<div class="ds" style="left:444.15px;top:757px;color:#6e6836"></div>
<div class="dg" style="left:468.25px;top:750px;color:#585858"></div>
<div class="dg" style="left:486.25px;top:750px;color:#585858"></div>
<div class="dg" style="left:505.95px;top:750px;color:#585858"></div>
<div class="dg" style="left:523.55px;top:750px;color:#585858"></div>
<div class="dg" style="left:570.7px;top:750px;color:#585858"></div>
<div class="dg" style="left:588.1px;top:750px;color:#585858"></div>
<div class="dg" style="left:605.6px;top:750px;color:#585858"></div>
<div class="ds" style="left:627px;top:750px;color:#666666"></div>
<div class="ds" style="left:644.6px;top:750px;color:#666666"></div>
<div class="ds" style="left:667.7px;top:757px;color:#6e6836"></div>
<div class="ds" style="left:685.3px;top:757px;color:#6e6836"></div>
<div class="dg" style="left:709.4px;top:750px;color:#585858"></div>
<div class="dg" style="left:727.4px;top:750px;color:#585858"></div>
<div class="dg" style="left:747.1px;top:750px;color:#585858"></div>
<div class="dg" style="left:764.7px;top:750px;color:#585858"></div>
<div class="dg" style="left:811.85px;top:750px;color:#585858"></div>
<div class="dg" style="left:829.25px;top:750px;color:#585858"></div>
<div class="dg" style="left:846.75px;top:750px;color:#585858"></div>
<div class="ds" style="left:868.15px;top:750px;color:#666666"></div>
<div class="ds" style="left:885.75px;top:750px;color:#666666"></div>
<div class="ds" style="left:908.85px;top:757px;color:#6e6836"></div>
<div class="ds" style="left:926.45px;top:757px;color:#6e6836"></div>
<div class="dg" style="left:950.55px;top:750px;color:#585858"></div>
<div class="dg" style="left:968.55px;top:750px;color:#585858"></div>
<div class="dg" style="left:988.25px;top:750px;color:#585858"></div>
<div class="dg" style="left:1005.85px;top:750px;color:#585858"></div>
<div class="dg" style="left:1053px;top:750px;color:#585858"></div>
<div class="dg" style="left:1070.4px;top:750px;color:#585858"></div>
<div class="dg" style="left:1087.9px;top:750px;color:#585858"></div>
<div class="ds" style="left:1109.3px;top:750px;color:#666666"></div>
<div class="ds" style="left:1126.9px;top:750px;color:#666666"></div>
<div class="ds" style="left:1150px;top:757px;color:#6e6836"></div>
<div class="ds" style="left:1167.6px;top:757px;color:#6e6836"></div>
<div class="dg" style="left:1191.7px;top:750px;color:#585858"></div>
<div class="dg" style="left:1209.7px;top:750px;color:#585858"></div>
<div class="dg" style="left:1229.4px;top:750px;color:#585858"></div>
<div class="dg" style="left:1247px;top:750px;color:#585858"></div>
<div class="dg" style="left:1294.15px;top:750px;color:#585858"></div>
<div class="dg" style="left:1311.55px;top:750px;color:#585858"></div>
<div class="dg" style="left:1329.05px;top:750px;color:#585858"></div>
<div class="ds" style="left:1350.45px;top:750px;color:#666666"></div>
<div class="ds" style="left:1368.05px;top:750px;color:#666666"></div>
<div class="ds" style="left:1391.15px;top:757px;color:#6e6836"></div>
<div class="ds" style="left:1408.75px;top:757px;color:#6e6836"></div>
<div class="dg" style="left:1432.85px;top:750px;color:#585858"></div>
<div class="dg" style="left:1450.85px;top:750px;color:#585858"></div>
<div class="dg" style="left:1470.55px;top:750px;color:#585858"></div>
<div class="dg" style="left:1488.15px;top:750px;color:#585858"></div>
<div class="dg" style="left:1535.3px;top:750px;color:#585858"></div>
<div class="dg" style="left:1552.7px;top:750px;color:#585858"></div>
<div class="dg" style="left:1570.2px;top:750px;color:#585858"></div>
<div class="ds" style="left:1591.6px;top:750px;color:#666666"></div>
<div class="ds" style="left:1609.2px;top:750px;color:#666666"></div>
<div class="ds" style="left:1632.3px;top:757px;color:#6e6836"></div>
<div class="ds" style="left:1649.9px;top:757px;color:#6e6836"></div>
<div class="dg" style="left:1674px;top:750px;color:#585858"></div>
<div class="dg" style="left:1692px;top:750px;color:#585858"></div>
<div class="dg" style="left:1711.7px;top:750px;color:#585858"></div>
<div class="dg" style="left:1729.3px;top:750px;color:#585858"></div>
<div class="a" style="left:3px;top:766.38px;width:52px;height:30.46px;background:#262626"></div>
<div class="m" style="left:18.1px;top:771.66px;color:#ffffff">2</div>
<div class="m" style="left:35.8px;top:771.66px;color:#ffffff">4</div>
<div class="a" style="left:85px;top:766.38px;width:211px;height:30.46px;background:#262626"></div>
<div class="m" style="left:83.3px;top:771.66px;color:#ffffff">G</div>
<div class="dash" style="left:104.6px;top:782.21px;color:#ffffff"></div>
<div class="m" style="left:117.8px;top:771.66px;color:#ffffff">5</div>
<div class="m z" style="left:137.4px;top:771.66px;color:#ffffff">0</div>
<div class="m" style="left:155px;top:771.66px;color:#ffffff">A</div>
<div class="ds" style="left:185.2px;top:787px;color:#a89a48"></div>
<div class="ds" style="left:202.9px;top:787px;color:#a89a48"></div>
<div class="dg" style="left:227px;top:780px;color:#e474c8;opacity:.75;height:1.6px"></div>
<div class="m" style="left:239.8px;top:771.66px;color:#e474c8">Z</div>
<div class="m" style="left:258.6px;top:771.66px;color:#e474c8">7</div>
<div class="m" style="left:277.3px;top:771.66px;color:#e474c8">D</div>
<div class="a" style="left:326.15px;top:766.38px;width:211px;height:30.46px;background:#262626"></div>
<div class="dg" style="left:329.55px;top:780px;color:#a4a4a4"></div>
<div class="dg" style="left:346.95px;top:780px;color:#a4a4a4"></div>
<div class="dg" style="left:364.45px;top:780px;color:#a4a4a4"></div>
<div class="ds" style="left:385.85px;top:780px;color:#acacac"></div>
<div class="ds" style="left:403.45px;top:780px;color:#acacac"></div>
<div class="ds" style="left:426.55px;top:787px;color:#a89a48"></div>
<div class="ds" style="left:444.15px;top:787px;color:#a89a48"></div>
<div class="dg" style="left:468.25px;top:780px;color:#a4a4a4"></div>
<div class="dg" style="left:486.25px;top:780px;color:#a4a4a4"></div>
<div class="dg" style="left:505.95px;top:780px;color:#a4a4a4"></div>
<div class="dg" style="left:523.55px;top:780px;color:#a4a4a4"></div>
<div class="a" style="left:567.3px;top:766.38px;width:211px;height:30.46px;background:#262626"></div>
<div class="dg" style="left:570.7px;top:780px;color:#a4a4a4"></div>
<div class="dg" style="left:588.1px;top:780px;color:#a4a4a4"></div>
<div class="dg" style="left:605.6px;top:780px;color:#a4a4a4"></div>
<div class="ds" style="left:627px;top:780px;color:#acacac"></div>
<div class="ds" style="left:644.6px;top:780px;color:#acacac"></div>
<div class="ds" style="left:667.7px;top:787px;color:#a89a48"></div>
<div class="ds" style="left:685.3px;top:787px;color:#a89a48"></div>
<div class="dg" style="left:709.4px;top:780px;color:#a4a4a4"></div>
<div class="dg" style="left:727.4px;top:780px;color:#a4a4a4"></div>
<div class="dg" style="left:747.1px;top:780px;color:#a4a4a4"></div>
<div class="dg" style="left:764.7px;top:780px;color:#a4a4a4"></div>
<div class="a" style="left:808.45px;top:766.38px;width:211px;height:30.46px;background:#262626"></div>
<div class="dg" style="left:811.85px;top:780px;color:#a4a4a4"></div>
<div class="dg" style="left:829.25px;top:780px;color:#a4a4a4"></div>
<div class="dg" style="left:846.75px;top:780px;color:#a4a4a4"></div>
<div class="ds" style="left:868.15px;top:780px;color:#acacac"></div>
<div class="ds" style="left:885.75px;top:780px;color:#acacac"></div>
<div class="ds" style="left:908.85px;top:787px;color:#a89a48"></div>
<div class="ds" style="left:926.45px;top:787px;color:#a89a48"></div>
<div class="dg" style="left:950.55px;top:780px;color:#a4a4a4"></div>
<div class="dg" style="left:968.55px;top:780px;color:#a4a4a4"></div>
<div class="dg" style="left:988.25px;top:780px;color:#a4a4a4"></div>
<div class="dg" style="left:1005.85px;top:780px;color:#a4a4a4"></div>
<div class="a" style="left:1049.6px;top:766.38px;width:211px;height:30.46px;background:#262626"></div>
<div class="dg" style="left:1053px;top:780px;color:#a4a4a4"></div>
<div class="dg" style="left:1070.4px;top:780px;color:#a4a4a4"></div>
<div class="dg" style="left:1087.9px;top:780px;color:#a4a4a4"></div>
<div class="ds" style="left:1109.3px;top:780px;color:#acacac"></div>
<div class="ds" style="left:1126.9px;top:780px;color:#acacac"></div>
<div class="ds" style="left:1150px;top:787px;color:#a89a48"></div>
<div class="ds" style="left:1167.6px;top:787px;color:#a89a48"></div>
<div class="dg" style="left:1191.7px;top:780px;color:#a4a4a4"></div>
<div class="dg" style="left:1209.7px;top:780px;color:#a4a4a4"></div>
<div class="dg" style="left:1229.4px;top:780px;color:#a4a4a4"></div>
<div class="dg" style="left:1247px;top:780px;color:#a4a4a4"></div>
<div class="a" style="left:1290.75px;top:766.38px;width:211px;height:30.46px;background:#262626"></div>
<div class="dg" style="left:1294.15px;top:780px;color:#a4a4a4"></div>
<div class="dg" style="left:1311.55px;top:780px;color:#a4a4a4"></div>
<div class="dg" style="left:1329.05px;top:780px;color:#a4a4a4"></div>
<div class="ds" style="left:1350.45px;top:780px;color:#acacac"></div>
<div class="ds" style="left:1368.05px;top:780px;color:#acacac"></div>
<div class="ds" style="left:1391.15px;top:787px;color:#a89a48"></div>
<div class="ds" style="left:1408.75px;top:787px;color:#a89a48"></div>
<div class="dg" style="left:1432.85px;top:780px;color:#a4a4a4"></div>
<div class="dg" style="left:1450.85px;top:780px;color:#a4a4a4"></div>
<div class="dg" style="left:1470.55px;top:780px;color:#a4a4a4"></div>
<div class="dg" style="left:1488.15px;top:780px;color:#a4a4a4"></div>
<div class="a" style="left:1531.9px;top:766.38px;width:211px;height:30.46px;background:#262626"></div>
<div class="dg" style="left:1535.3px;top:780px;color:#a4a4a4"></div>
<div class="dg" style="left:1552.7px;top:780px;color:#a4a4a4"></div>
<div class="dg" style="left:1570.2px;top:780px;color:#a4a4a4"></div>
<div class="ds" style="left:1591.6px;top:780px;color:#acacac"></div>
<div class="ds" style="left:1609.2px;top:780px;color:#acacac"></div>
<div class="ds" style="left:1632.3px;top:787px;color:#a89a48"></div>
<div class="ds" style="left:1649.9px;top:787px;color:#a89a48"></div>
<div class="dg" style="left:1674px;top:780px;color:#a4a4a4"></div>
<div class="dg" style="left:1692px;top:780px;color:#a4a4a4"></div>
<div class="dg" style="left:1711.7px;top:780px;color:#a4a4a4"></div>
<div class="dg" style="left:1729.3px;top:780px;color:#a4a4a4"></div>
<div class="m" style="left:18.1px;top:802.12px;color:#8c8c8c;-webkit-text-stroke:0.3px #111111">2</div>
<div class="m" style="left:35.8px;top:802.12px;color:#8c8c8c;-webkit-text-stroke:0.3px #111111">5</div>
<div class="m" style="left:83.3px;top:802.12px;color:#8e8e8e;-webkit-text-stroke:0.3px #111111">C</div>
<div class="m" style="left:100.3px;top:802.12px;color:#8e8e8e;-webkit-text-stroke:0.3px #111111">#</div>
<div class="m" style="left:117.8px;top:802.12px;color:#8e8e8e;-webkit-text-stroke:0.3px #111111">5</div>
<div class="m z" style="left:137.4px;top:802.12px;color:#8e8e8e;-webkit-text-stroke:0.3px #111111">0</div>
<div class="m" style="left:155px;top:802.12px;color:#8e8e8e;-webkit-text-stroke:0.3px #111111">A</div>
<div class="ds" style="left:185.2px;top:818px;color:#6e6836"></div>
<div class="ds" style="left:202.9px;top:818px;color:#6e6836"></div>
<div class="dg" style="left:227px;top:811px;color:#928d50;opacity:.55;height:1.6px"></div>
<div class="m" style="left:239.8px;top:802.12px;color:#928d50;-webkit-text-stroke:0.3px #111111">O</div>
<div class="m" style="left:258.6px;top:802.12px;color:#928d50;-webkit-text-stroke:0.3px #111111">D</div>
<div class="m" style="left:277.3px;top:802.12px;color:#928d50;-webkit-text-stroke:0.3px #111111">E</div>
<div class="dg" style="left:329.55px;top:811px;color:#585858"></div>
<div class="dg" style="left:346.95px;top:811px;color:#585858"></div>
<div class="dg" style="left:364.45px;top:811px;color:#585858"></div>
<div class="ds" style="left:385.85px;top:811px;color:#666666"></div>
<div class="ds" style="left:403.45px;top:811px;color:#666666"></div>
<div class="ds" style="left:426.55px;top:818px;color:#6e6836"></div>
<div class="ds" style="left:444.15px;top:818px;color:#6e6836"></div>
<div class="dg" style="left:468.25px;top:811px;color:#585858"></div>
<div class="dg" style="left:486.25px;top:811px;color:#585858"></div>
<div class="dg" style="left:505.95px;top:811px;color:#585858"></div>
<div class="dg" style="left:523.55px;top:811px;color:#585858"></div>
<div class="dg" style="left:570.7px;top:811px;color:#585858"></div>
<div class="dg" style="left:588.1px;top:811px;color:#585858"></div>
<div class="dg" style="left:605.6px;top:811px;color:#585858"></div>
<div class="ds" style="left:627px;top:811px;color:#666666"></div>
<div class="ds" style="left:644.6px;top:811px;color:#666666"></div>
<div class="ds" style="left:667.7px;top:818px;color:#6e6836"></div>
<div class="ds" style="left:685.3px;top:818px;color:#6e6836"></div>
<div class="dg" style="left:709.4px;top:811px;color:#585858"></div>
<div class="dg" style="left:727.4px;top:811px;color:#585858"></div>
<div class="dg" style="left:747.1px;top:811px;color:#585858"></div>
<div class="dg" style="left:764.7px;top:811px;color:#585858"></div>
<div class="dg" style="left:811.85px;top:811px;color:#585858"></div>
<div class="dg" style="left:829.25px;top:811px;color:#585858"></div>
<div class="dg" style="left:846.75px;top:811px;color:#585858"></div>
<div class="ds" style="left:868.15px;top:811px;color:#666666"></div>
<div class="ds" style="left:885.75px;top:811px;color:#666666"></div>
<div class="ds" style="left:908.85px;top:818px;color:#6e6836"></div>
<div class="ds" style="left:926.45px;top:818px;color:#6e6836"></div>
<div class="dg" style="left:950.55px;top:811px;color:#585858"></div>
<div class="dg" style="left:968.55px;top:811px;color:#585858"></div>
<div class="dg" style="left:988.25px;top:811px;color:#585858"></div>
<div class="dg" style="left:1005.85px;top:811px;color:#585858"></div>
<div class="dg" style="left:1053px;top:811px;color:#585858"></div>
<div class="dg" style="left:1070.4px;top:811px;color:#585858"></div>
<div class="dg" style="left:1087.9px;top:811px;color:#585858"></div>
<div class="ds" style="left:1109.3px;top:811px;color:#666666"></div>
<div class="ds" style="left:1126.9px;top:811px;color:#666666"></div>
<div class="ds" style="left:1150px;top:818px;color:#6e6836"></div>
<div class="ds" style="left:1167.6px;top:818px;color:#6e6836"></div>
<div class="dg" style="left:1191.7px;top:811px;color:#585858"></div>
<div class="dg" style="left:1209.7px;top:811px;color:#585858"></div>
<div class="dg" style="left:1229.4px;top:811px;color:#585858"></div>
<div class="dg" style="left:1247px;top:811px;color:#585858"></div>
<div class="dg" style="left:1294.15px;top:811px;color:#585858"></div>
<div class="dg" style="left:1311.55px;top:811px;color:#585858"></div>
<div class="dg" style="left:1329.05px;top:811px;color:#585858"></div>
<div class="ds" style="left:1350.45px;top:811px;color:#666666"></div>
<div class="ds" style="left:1368.05px;top:811px;color:#666666"></div>
<div class="ds" style="left:1391.15px;top:818px;color:#6e6836"></div>
<div class="ds" style="left:1408.75px;top:818px;color:#6e6836"></div>
<div class="dg" style="left:1432.85px;top:811px;color:#585858"></div>
<div class="dg" style="left:1450.85px;top:811px;color:#585858"></div>
<div class="dg" style="left:1470.55px;top:811px;color:#585858"></div>
<div class="dg" style="left:1488.15px;top:811px;color:#585858"></div>
<div class="dg" style="left:1535.3px;top:811px;color:#585858"></div>
<div class="dg" style="left:1552.7px;top:811px;color:#585858"></div>
<div class="dg" style="left:1570.2px;top:811px;color:#585858"></div>
<div class="ds" style="left:1591.6px;top:811px;color:#666666"></div>
<div class="ds" style="left:1609.2px;top:811px;color:#666666"></div>
<div class="ds" style="left:1632.3px;top:818px;color:#6e6836"></div>
<div class="ds" style="left:1649.9px;top:818px;color:#6e6836"></div>
<div class="dg" style="left:1674px;top:811px;color:#585858"></div>
<div class="dg" style="left:1692px;top:811px;color:#585858"></div>
<div class="dg" style="left:1711.7px;top:811px;color:#585858"></div>
<div class="dg" style="left:1729.3px;top:811px;color:#585858"></div>
<div class="m" style="left:18.1px;top:832.58px;color:#8c8c8c;-webkit-text-stroke:0.3px #111111">2</div>
<div class="m" style="left:35.8px;top:832.58px;color:#8c8c8c;-webkit-text-stroke:0.3px #111111">6</div>
<div class="m" style="left:83.3px;top:832.58px;color:#8e8e8e;-webkit-text-stroke:0.3px #111111">E</div>
<div class="dash" style="left:104.6px;top:843.13px;color:#8e8e8e"></div>
<div class="m" style="left:117.8px;top:832.58px;color:#8e8e8e;-webkit-text-stroke:0.3px #111111">5</div>
<div class="m z" style="left:137.4px;top:832.58px;color:#8e8e8e;-webkit-text-stroke:0.3px #111111">0</div>
<div class="m" style="left:155px;top:832.58px;color:#8e8e8e;-webkit-text-stroke:0.3px #111111">A</div>
<div class="ds" style="left:185.2px;top:848px;color:#6e6836"></div>
<div class="ds" style="left:202.9px;top:848px;color:#6e6836"></div>
<div class="dg" style="left:227px;top:841px;color:#bb6d3c;opacity:.55;height:1.6px"></div>
<div class="m" style="left:239.8px;top:832.58px;color:#bb6d3c;-webkit-text-stroke:0.3px #111111">G</div>
<div class="m" style="left:258.6px;top:832.58px;color:#bb6d3c;-webkit-text-stroke:0.3px #111111">D</div>
<div class="m" style="left:277.3px;top:832.58px;color:#bb6d3c;-webkit-text-stroke:0.3px #111111">F</div>
<div class="dg" style="left:329.55px;top:841px;color:#585858"></div>
<div class="dg" style="left:346.95px;top:841px;color:#585858"></div>
<div class="dg" style="left:364.45px;top:841px;color:#585858"></div>
<div class="ds" style="left:385.85px;top:841px;color:#666666"></div>
<div class="ds" style="left:403.45px;top:841px;color:#666666"></div>
<div class="ds" style="left:426.55px;top:848px;color:#6e6836"></div>
<div class="ds" style="left:444.15px;top:848px;color:#6e6836"></div>
<div class="dg" style="left:468.25px;top:841px;color:#585858"></div>
<div class="dg" style="left:486.25px;top:841px;color:#585858"></div>
<div class="dg" style="left:505.95px;top:841px;color:#585858"></div>
<div class="dg" style="left:523.55px;top:841px;color:#585858"></div>
<div class="dg" style="left:570.7px;top:841px;color:#585858"></div>
<div class="dg" style="left:588.1px;top:841px;color:#585858"></div>
<div class="dg" style="left:605.6px;top:841px;color:#585858"></div>
<div class="ds" style="left:627px;top:841px;color:#666666"></div>
<div class="ds" style="left:644.6px;top:841px;color:#666666"></div>
<div class="ds" style="left:667.7px;top:848px;color:#6e6836"></div>
<div class="ds" style="left:685.3px;top:848px;color:#6e6836"></div>
<div class="dg" style="left:709.4px;top:841px;color:#585858"></div>
<div class="dg" style="left:727.4px;top:841px;color:#585858"></div>
<div class="dg" style="left:747.1px;top:841px;color:#585858"></div>
<div class="dg" style="left:764.7px;top:841px;color:#585858"></div>
<div class="dg" style="left:811.85px;top:841px;color:#585858"></div>
<div class="dg" style="left:829.25px;top:841px;color:#585858"></div>
<div class="dg" style="left:846.75px;top:841px;color:#585858"></div>
<div class="ds" style="left:868.15px;top:841px;color:#666666"></div>
<div class="ds" style="left:885.75px;top:841px;color:#666666"></div>
<div class="ds" style="left:908.85px;top:848px;color:#6e6836"></div>
<div class="ds" style="left:926.45px;top:848px;color:#6e6836"></div>
<div class="dg" style="left:950.55px;top:841px;color:#585858"></div>
<div class="dg" style="left:968.55px;top:841px;color:#585858"></div>
<div class="dg" style="left:988.25px;top:841px;color:#585858"></div>
<div class="dg" style="left:1005.85px;top:841px;color:#585858"></div>
<div class="dg" style="left:1053px;top:841px;color:#585858"></div>
<div class="dg" style="left:1070.4px;top:841px;color:#585858"></div>
<div class="dg" style="left:1087.9px;top:841px;color:#585858"></div>
<div class="ds" style="left:1109.3px;top:841px;color:#666666"></div>
<div class="ds" style="left:1126.9px;top:841px;color:#666666"></div>
<div class="ds" style="left:1150px;top:848px;color:#6e6836"></div>
<div class="ds" style="left:1167.6px;top:848px;color:#6e6836"></div>
<div class="dg" style="left:1191.7px;top:841px;color:#585858"></div>
<div class="dg" style="left:1209.7px;top:841px;color:#585858"></div>
<div class="dg" style="left:1229.4px;top:841px;color:#585858"></div>
<div class="dg" style="left:1247px;top:841px;color:#585858"></div>
<div class="dg" style="left:1294.15px;top:841px;color:#585858"></div>
<div class="dg" style="left:1311.55px;top:841px;color:#585858"></div>
<div class="dg" style="left:1329.05px;top:841px;color:#585858"></div>
<div class="ds" style="left:1350.45px;top:841px;color:#666666"></div>
<div class="ds" style="left:1368.05px;top:841px;color:#666666"></div>
<div class="ds" style="left:1391.15px;top:848px;color:#6e6836"></div>
<div class="ds" style="left:1408.75px;top:848px;color:#6e6836"></div>
<div class="dg" style="left:1432.85px;top:841px;color:#585858"></div>
<div class="dg" style="left:1450.85px;top:841px;color:#585858"></div>
<div class="dg" style="left:1470.55px;top:841px;color:#585858"></div>
<div class="dg" style="left:1488.15px;top:841px;color:#585858"></div>
<div class="dg" style="left:1535.3px;top:841px;color:#585858"></div>
<div class="dg" style="left:1552.7px;top:841px;color:#585858"></div>
<div class="dg" style="left:1570.2px;top:841px;color:#585858"></div>
<div class="ds" style="left:1591.6px;top:841px;color:#666666"></div>
<div class="ds" style="left:1609.2px;top:841px;color:#666666"></div>
<div class="ds" style="left:1632.3px;top:848px;color:#6e6836"></div>
<div class="ds" style="left:1649.9px;top:848px;color:#6e6836"></div>
<div class="dg" style="left:1674px;top:841px;color:#585858"></div>
<div class="dg" style="left:1692px;top:841px;color:#585858"></div>
<div class="dg" style="left:1711.7px;top:841px;color:#585858"></div>
<div class="dg" style="left:1729.3px;top:841px;color:#585858"></div>
<div class="m" style="left:18.1px;top:863.04px;color:#8c8c8c;-webkit-text-stroke:0.3px #111111">2</div>
<div class="m" style="left:35.8px;top:863.04px;color:#8c8c8c;-webkit-text-stroke:0.3px #111111">7</div>
<div class="m" style="left:83.3px;top:863.04px;color:#8e8e8e;-webkit-text-stroke:0.3px #111111">A</div>
<div class="m" style="left:100.3px;top:863.04px;color:#8e8e8e;-webkit-text-stroke:0.3px #111111">#</div>
<div class="m" style="left:117.8px;top:863.04px;color:#8e8e8e;-webkit-text-stroke:0.3px #111111">5</div>
<div class="m z" style="left:137.4px;top:863.04px;color:#8e8e8e;-webkit-text-stroke:0.3px #111111">0</div>
<div class="m" style="left:155px;top:863.04px;color:#8e8e8e;-webkit-text-stroke:0.3px #111111">A</div>
<div class="ds" style="left:185.2px;top:879px;color:#6e6836"></div>
<div class="ds" style="left:202.9px;top:879px;color:#6e6836"></div>
<div class="dg" style="left:227px;top:872px;color:#4a8eb2;opacity:.55;height:1.6px"></div>
<div class="m" style="left:239.8px;top:863.04px;color:#4a8eb2;-webkit-text-stroke:0.3px #111111">E</div>
<div class="m" style="left:258.6px;top:863.04px;color:#4a8eb2;-webkit-text-stroke:0.3px #111111">4</div>
<div class="m" style="left:277.3px;top:863.04px;color:#4a8eb2;-webkit-text-stroke:0.3px #111111">E</div>
<div class="dg" style="left:329.55px;top:872px;color:#585858"></div>
<div class="dg" style="left:346.95px;top:872px;color:#585858"></div>
<div class="dg" style="left:364.45px;top:872px;color:#585858"></div>
<div class="ds" style="left:385.85px;top:872px;color:#666666"></div>
<div class="ds" style="left:403.45px;top:872px;color:#666666"></div>
<div class="ds" style="left:426.55px;top:879px;color:#6e6836"></div>
<div class="ds" style="left:444.15px;top:879px;color:#6e6836"></div>
<div class="dg" style="left:468.25px;top:872px;color:#585858"></div>
<div class="dg" style="left:486.25px;top:872px;color:#585858"></div>
<div class="dg" style="left:505.95px;top:872px;color:#585858"></div>
<div class="dg" style="left:523.55px;top:872px;color:#585858"></div>
<div class="dg" style="left:570.7px;top:872px;color:#585858"></div>
<div class="dg" style="left:588.1px;top:872px;color:#585858"></div>
<div class="dg" style="left:605.6px;top:872px;color:#585858"></div>
<div class="ds" style="left:627px;top:872px;color:#666666"></div>
<div class="ds" style="left:644.6px;top:872px;color:#666666"></div>
<div class="ds" style="left:667.7px;top:879px;color:#6e6836"></div>
<div class="ds" style="left:685.3px;top:879px;color:#6e6836"></div>
<div class="dg" style="left:709.4px;top:872px;color:#585858"></div>
<div class="dg" style="left:727.4px;top:872px;color:#585858"></div>
<div class="dg" style="left:747.1px;top:872px;color:#585858"></div>
<div class="dg" style="left:764.7px;top:872px;color:#585858"></div>
<div class="dg" style="left:811.85px;top:872px;color:#585858"></div>
<div class="dg" style="left:829.25px;top:872px;color:#585858"></div>
<div class="dg" style="left:846.75px;top:872px;color:#585858"></div>
<div class="ds" style="left:868.15px;top:872px;color:#666666"></div>
<div class="ds" style="left:885.75px;top:872px;color:#666666"></div>
<div class="ds" style="left:908.85px;top:879px;color:#6e6836"></div>
<div class="ds" style="left:926.45px;top:879px;color:#6e6836"></div>
<div class="dg" style="left:950.55px;top:872px;color:#585858"></div>
<div class="dg" style="left:968.55px;top:872px;color:#585858"></div>
<div class="dg" style="left:988.25px;top:872px;color:#585858"></div>
<div class="dg" style="left:1005.85px;top:872px;color:#585858"></div>
<div class="dg" style="left:1053px;top:872px;color:#585858"></div>
<div class="dg" style="left:1070.4px;top:872px;color:#585858"></div>
<div class="dg" style="left:1087.9px;top:872px;color:#585858"></div>
<div class="ds" style="left:1109.3px;top:872px;color:#666666"></div>
<div class="ds" style="left:1126.9px;top:872px;color:#666666"></div>
<div class="ds" style="left:1150px;top:879px;color:#6e6836"></div>
<div class="ds" style="left:1167.6px;top:879px;color:#6e6836"></div>
<div class="dg" style="left:1191.7px;top:872px;color:#585858"></div>
<div class="dg" style="left:1209.7px;top:872px;color:#585858"></div>
<div class="dg" style="left:1229.4px;top:872px;color:#585858"></div>
<div class="dg" style="left:1247px;top:872px;color:#585858"></div>
<div class="dg" style="left:1294.15px;top:872px;color:#585858"></div>
<div class="dg" style="left:1311.55px;top:872px;color:#585858"></div>
<div class="dg" style="left:1329.05px;top:872px;color:#585858"></div>
<div class="ds" style="left:1350.45px;top:872px;color:#666666"></div>
<div class="ds" style="left:1368.05px;top:872px;color:#666666"></div>
<div class="ds" style="left:1391.15px;top:879px;color:#6e6836"></div>
<div class="ds" style="left:1408.75px;top:879px;color:#6e6836"></div>
<div class="dg" style="left:1432.85px;top:872px;color:#585858"></div>
<div class="dg" style="left:1450.85px;top:872px;color:#585858"></div>
<div class="dg" style="left:1470.55px;top:872px;color:#585858"></div>
<div class="dg" style="left:1488.15px;top:872px;color:#585858"></div>
<div class="dg" style="left:1535.3px;top:872px;color:#585858"></div>
<div class="dg" style="left:1552.7px;top:872px;color:#585858"></div>
<div class="dg" style="left:1570.2px;top:872px;color:#585858"></div>
<div class="ds" style="left:1591.6px;top:872px;color:#666666"></div>
<div class="ds" style="left:1609.2px;top:872px;color:#666666"></div>
<div class="ds" style="left:1632.3px;top:879px;color:#6e6836"></div>
<div class="ds" style="left:1649.9px;top:879px;color:#6e6836"></div>
<div class="dg" style="left:1674px;top:872px;color:#585858"></div>
<div class="dg" style="left:1692px;top:872px;color:#585858"></div>
<div class="dg" style="left:1711.7px;top:872px;color:#585858"></div>
<div class="dg" style="left:1729.3px;top:872px;color:#585858"></div>
<div class="a" style="left:3px;top:888.22px;width:52px;height:30.46px;background:#262626"></div>
<div class="m" style="left:18.1px;top:893.5px;color:#ffffff">2</div>
<div class="m" style="left:35.8px;top:893.5px;color:#ffffff">8</div>
<div class="a" style="left:85px;top:888.22px;width:211px;height:30.46px;background:#262626"></div>
<div class="m" style="left:83.3px;top:893.5px;color:#ffffff">A</div>
<div class="m" style="left:100.3px;top:893.5px;color:#ffffff">#</div>
<div class="m" style="left:117.8px;top:893.5px;color:#ffffff">5</div>
<div class="m z" style="left:137.4px;top:893.5px;color:#ffffff">0</div>
<div class="m" style="left:155px;top:893.5px;color:#ffffff">A</div>
<div class="ds" style="left:185.2px;top:909px;color:#a89a48"></div>
<div class="ds" style="left:202.9px;top:909px;color:#a89a48"></div>
<div class="dg" style="left:227px;top:902px;color:#62c4ec;opacity:.75;height:1.6px"></div>
<div class="m" style="left:239.8px;top:893.5px;color:#62c4ec">Y</div>
<div class="m" style="left:258.6px;top:893.5px;color:#62c4ec">D</div>
<div class="m" style="left:277.3px;top:893.5px;color:#62c4ec">9</div>
<div class="a" style="left:326.15px;top:888.22px;width:211px;height:30.46px;background:#262626"></div>
<div class="dg" style="left:329.55px;top:902px;color:#a4a4a4"></div>
<div class="dg" style="left:346.95px;top:902px;color:#a4a4a4"></div>
<div class="dg" style="left:364.45px;top:902px;color:#a4a4a4"></div>
<div class="ds" style="left:385.85px;top:902px;color:#acacac"></div>
<div class="ds" style="left:403.45px;top:902px;color:#acacac"></div>
<div class="ds" style="left:426.55px;top:909px;color:#a89a48"></div>
<div class="ds" style="left:444.15px;top:909px;color:#a89a48"></div>
<div class="dg" style="left:468.25px;top:902px;color:#a4a4a4"></div>
<div class="dg" style="left:486.25px;top:902px;color:#a4a4a4"></div>
<div class="dg" style="left:505.95px;top:902px;color:#a4a4a4"></div>
<div class="dg" style="left:523.55px;top:902px;color:#a4a4a4"></div>
<div class="a" style="left:567.3px;top:888.22px;width:211px;height:30.46px;background:#262626"></div>
<div class="dg" style="left:570.7px;top:902px;color:#a4a4a4"></div>
<div class="dg" style="left:588.1px;top:902px;color:#a4a4a4"></div>
<div class="dg" style="left:605.6px;top:902px;color:#a4a4a4"></div>
<div class="ds" style="left:627px;top:902px;color:#acacac"></div>
<div class="ds" style="left:644.6px;top:902px;color:#acacac"></div>
<div class="ds" style="left:667.7px;top:909px;color:#a89a48"></div>
<div class="ds" style="left:685.3px;top:909px;color:#a89a48"></div>
<div class="dg" style="left:709.4px;top:902px;color:#a4a4a4"></div>
<div class="dg" style="left:727.4px;top:902px;color:#a4a4a4"></div>
<div class="dg" style="left:747.1px;top:902px;color:#a4a4a4"></div>
<div class="dg" style="left:764.7px;top:902px;color:#a4a4a4"></div>
<div class="a" style="left:808.45px;top:888.22px;width:211px;height:30.46px;background:#262626"></div>
<div class="dg" style="left:811.85px;top:902px;color:#a4a4a4"></div>
<div class="dg" style="left:829.25px;top:902px;color:#a4a4a4"></div>
<div class="dg" style="left:846.75px;top:902px;color:#a4a4a4"></div>
<div class="ds" style="left:868.15px;top:902px;color:#acacac"></div>
<div class="ds" style="left:885.75px;top:902px;color:#acacac"></div>
<div class="ds" style="left:908.85px;top:909px;color:#a89a48"></div>
<div class="ds" style="left:926.45px;top:909px;color:#a89a48"></div>
<div class="dg" style="left:950.55px;top:902px;color:#a4a4a4"></div>
<div class="dg" style="left:968.55px;top:902px;color:#a4a4a4"></div>
<div class="dg" style="left:988.25px;top:902px;color:#a4a4a4"></div>
<div class="dg" style="left:1005.85px;top:902px;color:#a4a4a4"></div>
<div class="a" style="left:1049.6px;top:888.22px;width:211px;height:30.46px;background:#262626"></div>
<div class="dg" style="left:1053px;top:902px;color:#a4a4a4"></div>
<div class="dg" style="left:1070.4px;top:902px;color:#a4a4a4"></div>
<div class="dg" style="left:1087.9px;top:902px;color:#a4a4a4"></div>
<div class="ds" style="left:1109.3px;top:902px;color:#acacac"></div>
<div class="ds" style="left:1126.9px;top:902px;color:#acacac"></div>
<div class="ds" style="left:1150px;top:909px;color:#a89a48"></div>
<div class="ds" style="left:1167.6px;top:909px;color:#a89a48"></div>
<div class="dg" style="left:1191.7px;top:902px;color:#a4a4a4"></div>
<div class="dg" style="left:1209.7px;top:902px;color:#a4a4a4"></div>
<div class="dg" style="left:1229.4px;top:902px;color:#a4a4a4"></div>
<div class="dg" style="left:1247px;top:902px;color:#a4a4a4"></div>
<div class="a" style="left:1290.75px;top:888.22px;width:211px;height:30.46px;background:#262626"></div>
<div class="dg" style="left:1294.15px;top:902px;color:#a4a4a4"></div>
<div class="dg" style="left:1311.55px;top:902px;color:#a4a4a4"></div>
<div class="dg" style="left:1329.05px;top:902px;color:#a4a4a4"></div>
<div class="ds" style="left:1350.45px;top:902px;color:#acacac"></div>
<div class="ds" style="left:1368.05px;top:902px;color:#acacac"></div>
<div class="ds" style="left:1391.15px;top:909px;color:#a89a48"></div>
<div class="ds" style="left:1408.75px;top:909px;color:#a89a48"></div>
<div class="dg" style="left:1432.85px;top:902px;color:#a4a4a4"></div>
<div class="dg" style="left:1450.85px;top:902px;color:#a4a4a4"></div>
<div class="dg" style="left:1470.55px;top:902px;color:#a4a4a4"></div>
<div class="dg" style="left:1488.15px;top:902px;color:#a4a4a4"></div>
<div class="a" style="left:1531.9px;top:888.22px;width:211px;height:30.46px;background:#262626"></div>
<div class="dg" style="left:1535.3px;top:902px;color:#a4a4a4"></div>
<div class="dg" style="left:1552.7px;top:902px;color:#a4a4a4"></div>
<div class="dg" style="left:1570.2px;top:902px;color:#a4a4a4"></div>
<div class="ds" style="left:1591.6px;top:902px;color:#acacac"></div>
<div class="ds" style="left:1609.2px;top:902px;color:#acacac"></div>
<div class="ds" style="left:1632.3px;top:909px;color:#a89a48"></div>
<div class="ds" style="left:1649.9px;top:909px;color:#a89a48"></div>
<div class="dg" style="left:1674px;top:902px;color:#a4a4a4"></div>
<div class="dg" style="left:1692px;top:902px;color:#a4a4a4"></div>
<div class="dg" style="left:1711.7px;top:902px;color:#a4a4a4"></div>
<div class="dg" style="left:1729.3px;top:902px;color:#a4a4a4"></div>
<div class="m" style="left:18.1px;top:923.96px;color:#8c8c8c;-webkit-text-stroke:0.3px #111111">2</div>
<div class="m" style="left:35.8px;top:923.96px;color:#8c8c8c;-webkit-text-stroke:0.3px #111111">9</div>
<div class="m" style="left:83.3px;top:923.96px;color:#8e8e8e;-webkit-text-stroke:0.3px #111111">D</div>
<div class="dash" style="left:104.6px;top:934.51px;color:#8e8e8e"></div>
<div class="m" style="left:117.8px;top:923.96px;color:#8e8e8e;-webkit-text-stroke:0.3px #111111">5</div>
<div class="m z" style="left:137.4px;top:923.96px;color:#8e8e8e;-webkit-text-stroke:0.3px #111111">0</div>
<div class="m" style="left:155px;top:923.96px;color:#8e8e8e;-webkit-text-stroke:0.3px #111111">A</div>
<div class="ds" style="left:185.2px;top:940px;color:#6e6836"></div>
<div class="ds" style="left:202.9px;top:940px;color:#6e6836"></div>
<div class="dg" style="left:227px;top:933px;color:#bb6d3c;opacity:.55;height:1.6px"></div>
<div class="m" style="left:239.8px;top:923.96px;color:#bb6d3c;-webkit-text-stroke:0.3px #111111">G</div>
<div class="m z" style="left:258.6px;top:923.96px;color:#bb6d3c;-webkit-text-stroke:0.3px #111111">0</div>
<div class="m" style="left:277.3px;top:923.96px;color:#bb6d3c;-webkit-text-stroke:0.3px #111111">5</div>
<div class="dg" style="left:329.55px;top:933px;color:#585858"></div>
<div class="dg" style="left:346.95px;top:933px;color:#585858"></div>
<div class="dg" style="left:364.45px;top:933px;color:#585858"></div>
<div class="ds" style="left:385.85px;top:933px;color:#666666"></div>
<div class="ds" style="left:403.45px;top:933px;color:#666666"></div>
<div class="ds" style="left:426.55px;top:940px;color:#6e6836"></div>
<div class="ds" style="left:444.15px;top:940px;color:#6e6836"></div>
<div class="dg" style="left:468.25px;top:933px;color:#585858"></div>
<div class="dg" style="left:486.25px;top:933px;color:#585858"></div>
<div class="dg" style="left:505.95px;top:933px;color:#585858"></div>
<div class="dg" style="left:523.55px;top:933px;color:#585858"></div>
<div class="dg" style="left:570.7px;top:933px;color:#585858"></div>
<div class="dg" style="left:588.1px;top:933px;color:#585858"></div>
<div class="dg" style="left:605.6px;top:933px;color:#585858"></div>
<div class="ds" style="left:627px;top:933px;color:#666666"></div>
<div class="ds" style="left:644.6px;top:933px;color:#666666"></div>
<div class="ds" style="left:667.7px;top:940px;color:#6e6836"></div>
<div class="ds" style="left:685.3px;top:940px;color:#6e6836"></div>
<div class="dg" style="left:709.4px;top:933px;color:#585858"></div>
<div class="dg" style="left:727.4px;top:933px;color:#585858"></div>
<div class="dg" style="left:747.1px;top:933px;color:#585858"></div>
<div class="dg" style="left:764.7px;top:933px;color:#585858"></div>
<div class="dg" style="left:811.85px;top:933px;color:#585858"></div>
<div class="dg" style="left:829.25px;top:933px;color:#585858"></div>
<div class="dg" style="left:846.75px;top:933px;color:#585858"></div>
<div class="ds" style="left:868.15px;top:933px;color:#666666"></div>
<div class="ds" style="left:885.75px;top:933px;color:#666666"></div>
<div class="ds" style="left:908.85px;top:940px;color:#6e6836"></div>
<div class="ds" style="left:926.45px;top:940px;color:#6e6836"></div>
<div class="dg" style="left:950.55px;top:933px;color:#585858"></div>
<div class="dg" style="left:968.55px;top:933px;color:#585858"></div>
<div class="dg" style="left:988.25px;top:933px;color:#585858"></div>
<div class="dg" style="left:1005.85px;top:933px;color:#585858"></div>
<div class="dg" style="left:1053px;top:933px;color:#585858"></div>
<div class="dg" style="left:1070.4px;top:933px;color:#585858"></div>
<div class="dg" style="left:1087.9px;top:933px;color:#585858"></div>
<div class="ds" style="left:1109.3px;top:933px;color:#666666"></div>
<div class="ds" style="left:1126.9px;top:933px;color:#666666"></div>
<div class="ds" style="left:1150px;top:940px;color:#6e6836"></div>
<div class="ds" style="left:1167.6px;top:940px;color:#6e6836"></div>
<div class="dg" style="left:1191.7px;top:933px;color:#585858"></div>
<div class="dg" style="left:1209.7px;top:933px;color:#585858"></div>
<div class="dg" style="left:1229.4px;top:933px;color:#585858"></div>
<div class="dg" style="left:1247px;top:933px;color:#585858"></div>
<div class="dg" style="left:1294.15px;top:933px;color:#585858"></div>
<div class="dg" style="left:1311.55px;top:933px;color:#585858"></div>
<div class="dg" style="left:1329.05px;top:933px;color:#585858"></div>
<div class="ds" style="left:1350.45px;top:933px;color:#666666"></div>
<div class="ds" style="left:1368.05px;top:933px;color:#666666"></div>
<div class="ds" style="left:1391.15px;top:940px;color:#6e6836"></div>
<div class="ds" style="left:1408.75px;top:940px;color:#6e6836"></div>
<div class="dg" style="left:1432.85px;top:933px;color:#585858"></div>
<div class="dg" style="left:1450.85px;top:933px;color:#585858"></div>
<div class="dg" style="left:1470.55px;top:933px;color:#585858"></div>
<div class="dg" style="left:1488.15px;top:933px;color:#585858"></div>
<div class="dg" style="left:1535.3px;top:933px;color:#585858"></div>
<div class="dg" style="left:1552.7px;top:933px;color:#585858"></div>
<div class="dg" style="left:1570.2px;top:933px;color:#585858"></div>
<div class="ds" style="left:1591.6px;top:933px;color:#666666"></div>
<div class="ds" style="left:1609.2px;top:933px;color:#666666"></div>
<div class="ds" style="left:1632.3px;top:940px;color:#6e6836"></div>
<div class="ds" style="left:1649.9px;top:940px;color:#6e6836"></div>
<div class="dg" style="left:1674px;top:933px;color:#585858"></div>
<div class="dg" style="left:1692px;top:933px;color:#585858"></div>
<div class="dg" style="left:1711.7px;top:933px;color:#585858"></div>
<div class="dg" style="left:1729.3px;top:933px;color:#585858"></div>
<div class="m" style="left:18.1px;top:954.42px;color:#8c8c8c;-webkit-text-stroke:0.3px #111111">3</div>
<div class="m z" style="left:35.8px;top:954.42px;color:#8c8c8c;-webkit-text-stroke:0.3px #111111">0</div>
<div class="m" style="left:83.3px;top:954.42px;color:#8e8e8e;-webkit-text-stroke:0.3px #111111">B</div>
<div class="dash" style="left:104.6px;top:964.97px;color:#8e8e8e"></div>
<div class="m" style="left:117.8px;top:954.42px;color:#8e8e8e;-webkit-text-stroke:0.3px #111111">4</div>
<div class="m z" style="left:137.4px;top:954.42px;color:#8e8e8e;-webkit-text-stroke:0.3px #111111">0</div>
<div class="m" style="left:155px;top:954.42px;color:#8e8e8e;-webkit-text-stroke:0.3px #111111">A</div>
<div class="ds" style="left:185.2px;top:970px;color:#6e6836"></div>
<div class="ds" style="left:202.9px;top:970px;color:#6e6836"></div>
<div class="dg" style="left:227px;top:963px;color:#928d50;opacity:.55;height:1.6px"></div>
<div class="m" style="left:239.8px;top:954.42px;color:#928d50;-webkit-text-stroke:0.3px #111111">O</div>
<div class="m" style="left:258.6px;top:954.42px;color:#928d50;-webkit-text-stroke:0.3px #111111">9</div>
<div class="m" style="left:277.3px;top:954.42px;color:#928d50;-webkit-text-stroke:0.3px #111111">C</div>
<div class="dg" style="left:329.55px;top:963px;color:#585858"></div>
<div class="dg" style="left:346.95px;top:963px;color:#585858"></div>
<div class="dg" style="left:364.45px;top:963px;color:#585858"></div>
<div class="ds" style="left:385.85px;top:963px;color:#666666"></div>
<div class="ds" style="left:403.45px;top:963px;color:#666666"></div>
<div class="ds" style="left:426.55px;top:970px;color:#6e6836"></div>
<div class="ds" style="left:444.15px;top:970px;color:#6e6836"></div>
<div class="dg" style="left:468.25px;top:963px;color:#585858"></div>
<div class="dg" style="left:486.25px;top:963px;color:#585858"></div>
<div class="dg" style="left:505.95px;top:963px;color:#585858"></div>
<div class="dg" style="left:523.55px;top:963px;color:#585858"></div>
<div class="dg" style="left:570.7px;top:963px;color:#585858"></div>
<div class="dg" style="left:588.1px;top:963px;color:#585858"></div>
<div class="dg" style="left:605.6px;top:963px;color:#585858"></div>
<div class="ds" style="left:627px;top:963px;color:#666666"></div>
<div class="ds" style="left:644.6px;top:963px;color:#666666"></div>
<div class="ds" style="left:667.7px;top:970px;color:#6e6836"></div>
<div class="ds" style="left:685.3px;top:970px;color:#6e6836"></div>
<div class="dg" style="left:709.4px;top:963px;color:#585858"></div>
<div class="dg" style="left:727.4px;top:963px;color:#585858"></div>
<div class="dg" style="left:747.1px;top:963px;color:#585858"></div>
<div class="dg" style="left:764.7px;top:963px;color:#585858"></div>
<div class="dg" style="left:811.85px;top:963px;color:#585858"></div>
<div class="dg" style="left:829.25px;top:963px;color:#585858"></div>
<div class="dg" style="left:846.75px;top:963px;color:#585858"></div>
<div class="ds" style="left:868.15px;top:963px;color:#666666"></div>
<div class="ds" style="left:885.75px;top:963px;color:#666666"></div>
<div class="ds" style="left:908.85px;top:970px;color:#6e6836"></div>
<div class="ds" style="left:926.45px;top:970px;color:#6e6836"></div>
<div class="dg" style="left:950.55px;top:963px;color:#585858"></div>
<div class="dg" style="left:968.55px;top:963px;color:#585858"></div>
<div class="dg" style="left:988.25px;top:963px;color:#585858"></div>
<div class="dg" style="left:1005.85px;top:963px;color:#585858"></div>
<div class="dg" style="left:1053px;top:963px;color:#585858"></div>
<div class="dg" style="left:1070.4px;top:963px;color:#585858"></div>
<div class="dg" style="left:1087.9px;top:963px;color:#585858"></div>
<div class="ds" style="left:1109.3px;top:963px;color:#666666"></div>
<div class="ds" style="left:1126.9px;top:963px;color:#666666"></div>
<div class="ds" style="left:1150px;top:970px;color:#6e6836"></div>
<div class="ds" style="left:1167.6px;top:970px;color:#6e6836"></div>
<div class="dg" style="left:1191.7px;top:963px;color:#585858"></div>
<div class="dg" style="left:1209.7px;top:963px;color:#585858"></div>
<div class="dg" style="left:1229.4px;top:963px;color:#585858"></div>
<div class="dg" style="left:1247px;top:963px;color:#585858"></div>
<div class="dg" style="left:1294.15px;top:963px;color:#585858"></div>
<div class="dg" style="left:1311.55px;top:963px;color:#585858"></div>
<div class="dg" style="left:1329.05px;top:963px;color:#585858"></div>
<div class="ds" style="left:1350.45px;top:963px;color:#666666"></div>
<div class="ds" style="left:1368.05px;top:963px;color:#666666"></div>
<div class="ds" style="left:1391.15px;top:970px;color:#6e6836"></div>
<div class="ds" style="left:1408.75px;top:970px;color:#6e6836"></div>
<div class="dg" style="left:1432.85px;top:963px;color:#585858"></div>
<div class="dg" style="left:1450.85px;top:963px;color:#585858"></div>
<div class="dg" style="left:1470.55px;top:963px;color:#585858"></div>
<div class="dg" style="left:1488.15px;top:963px;color:#585858"></div>
<div class="dg" style="left:1535.3px;top:963px;color:#585858"></div>
<div class="dg" style="left:1552.7px;top:963px;color:#585858"></div>
<div class="dg" style="left:1570.2px;top:963px;color:#585858"></div>
<div class="ds" style="left:1591.6px;top:963px;color:#666666"></div>
<div class="ds" style="left:1609.2px;top:963px;color:#666666"></div>
<div class="ds" style="left:1632.3px;top:970px;color:#6e6836"></div>
<div class="ds" style="left:1649.9px;top:970px;color:#6e6836"></div>
<div class="dg" style="left:1674px;top:963px;color:#585858"></div>
<div class="dg" style="left:1692px;top:963px;color:#585858"></div>
<div class="dg" style="left:1711.7px;top:963px;color:#585858"></div>
<div class="dg" style="left:1729.3px;top:963px;color:#585858"></div>
<div class="m" style="left:18.1px;top:984.88px;color:#8c8c8c;-webkit-text-stroke:0.3px #111111">3</div>
<div class="m" style="left:35.8px;top:984.88px;color:#8c8c8c;-webkit-text-stroke:0.3px #111111">1</div>
<div class="m" style="left:83.3px;top:984.88px;color:#8e8e8e;-webkit-text-stroke:0.3px #111111">D</div>
<div class="m" style="left:100.3px;top:984.88px;color:#8e8e8e;-webkit-text-stroke:0.3px #111111">#</div>
<div class="m" style="left:117.8px;top:984.88px;color:#8e8e8e;-webkit-text-stroke:0.3px #111111">6</div>
<div class="m z" style="left:137.4px;top:984.88px;color:#8e8e8e;-webkit-text-stroke:0.3px #111111">0</div>
<div class="m" style="left:155px;top:984.88px;color:#8e8e8e;-webkit-text-stroke:0.3px #111111">A</div>
<div class="ds" style="left:185.2px;top:1000px;color:#6e6836"></div>
<div class="ds" style="left:202.9px;top:1000px;color:#6e6836"></div>
<div class="dg" style="left:227px;top:994px;color:#928d50;opacity:.55;height:1.6px"></div>
<div class="m" style="left:239.8px;top:984.88px;color:#928d50;-webkit-text-stroke:0.3px #111111">M</div>
<div class="m" style="left:258.6px;top:984.88px;color:#928d50;-webkit-text-stroke:0.3px #111111">E</div>
<div class="m" style="left:277.3px;top:984.88px;color:#928d50;-webkit-text-stroke:0.3px #111111">E</div>
<div class="dg" style="left:329.55px;top:994px;color:#585858"></div>
<div class="dg" style="left:346.95px;top:994px;color:#585858"></div>
<div class="dg" style="left:364.45px;top:994px;color:#585858"></div>
<div class="ds" style="left:385.85px;top:994px;color:#666666"></div>
<div class="ds" style="left:403.45px;top:994px;color:#666666"></div>
<div class="ds" style="left:426.55px;top:1000px;color:#6e6836"></div>
<div class="ds" style="left:444.15px;top:1000px;color:#6e6836"></div>
<div class="dg" style="left:468.25px;top:994px;color:#585858"></div>
<div class="dg" style="left:486.25px;top:994px;color:#585858"></div>
<div class="dg" style="left:505.95px;top:994px;color:#585858"></div>
<div class="dg" style="left:523.55px;top:994px;color:#585858"></div>
<div class="dg" style="left:570.7px;top:994px;color:#585858"></div>
<div class="dg" style="left:588.1px;top:994px;color:#585858"></div>
<div class="dg" style="left:605.6px;top:994px;color:#585858"></div>
<div class="ds" style="left:627px;top:994px;color:#666666"></div>
<div class="ds" style="left:644.6px;top:994px;color:#666666"></div>
<div class="ds" style="left:667.7px;top:1000px;color:#6e6836"></div>
<div class="ds" style="left:685.3px;top:1000px;color:#6e6836"></div>
<div class="dg" style="left:709.4px;top:994px;color:#585858"></div>
<div class="dg" style="left:727.4px;top:994px;color:#585858"></div>
<div class="dg" style="left:747.1px;top:994px;color:#585858"></div>
<div class="dg" style="left:764.7px;top:994px;color:#585858"></div>
<div class="dg" style="left:811.85px;top:994px;color:#585858"></div>
<div class="dg" style="left:829.25px;top:994px;color:#585858"></div>
<div class="dg" style="left:846.75px;top:994px;color:#585858"></div>
<div class="ds" style="left:868.15px;top:994px;color:#666666"></div>
<div class="ds" style="left:885.75px;top:994px;color:#666666"></div>
<div class="ds" style="left:908.85px;top:1000px;color:#6e6836"></div>
<div class="ds" style="left:926.45px;top:1000px;color:#6e6836"></div>
<div class="dg" style="left:950.55px;top:994px;color:#585858"></div>
<div class="dg" style="left:968.55px;top:994px;color:#585858"></div>
<div class="dg" style="left:988.25px;top:994px;color:#585858"></div>
<div class="dg" style="left:1005.85px;top:994px;color:#585858"></div>
<div class="dg" style="left:1053px;top:994px;color:#585858"></div>
<div class="dg" style="left:1070.4px;top:994px;color:#585858"></div>
<div class="dg" style="left:1087.9px;top:994px;color:#585858"></div>
<div class="ds" style="left:1109.3px;top:994px;color:#666666"></div>
<div class="ds" style="left:1126.9px;top:994px;color:#666666"></div>
<div class="ds" style="left:1150px;top:1000px;color:#6e6836"></div>
<div class="ds" style="left:1167.6px;top:1000px;color:#6e6836"></div>
<div class="dg" style="left:1191.7px;top:994px;color:#585858"></div>
<div class="dg" style="left:1209.7px;top:994px;color:#585858"></div>
<div class="dg" style="left:1229.4px;top:994px;color:#585858"></div>
<div class="dg" style="left:1247px;top:994px;color:#585858"></div>
<div class="dg" style="left:1294.15px;top:994px;color:#585858"></div>
<div class="dg" style="left:1311.55px;top:994px;color:#585858"></div>
<div class="dg" style="left:1329.05px;top:994px;color:#585858"></div>
<div class="ds" style="left:1350.45px;top:994px;color:#666666"></div>
<div class="ds" style="left:1368.05px;top:994px;color:#666666"></div>
<div class="ds" style="left:1391.15px;top:1000px;color:#6e6836"></div>
<div class="ds" style="left:1408.75px;top:1000px;color:#6e6836"></div>
<div class="dg" style="left:1432.85px;top:994px;color:#585858"></div>
<div class="dg" style="left:1450.85px;top:994px;color:#585858"></div>
<div class="dg" style="left:1470.55px;top:994px;color:#585858"></div>
<div class="dg" style="left:1488.15px;top:994px;color:#585858"></div>
<div class="dg" style="left:1535.3px;top:994px;color:#585858"></div>
<div class="dg" style="left:1552.7px;top:994px;color:#585858"></div>
<div class="dg" style="left:1570.2px;top:994px;color:#585858"></div>
<div class="ds" style="left:1591.6px;top:994px;color:#666666"></div>
<div class="ds" style="left:1609.2px;top:994px;color:#666666"></div>
<div class="ds" style="left:1632.3px;top:1000px;color:#6e6836"></div>
<div class="ds" style="left:1649.9px;top:1000px;color:#6e6836"></div>
<div class="dg" style="left:1674px;top:994px;color:#585858"></div>
<div class="dg" style="left:1692px;top:994px;color:#585858"></div>
<div class="dg" style="left:1711.7px;top:994px;color:#585858"></div>
<div class="dg" style="left:1729.3px;top:994px;color:#585858"></div>
<div class="a" style="left:3px;top:1010.06px;width:52px;height:30.46px;background:#262626"></div>
<div class="m" style="left:18.1px;top:1015.34px;color:#ffffff">3</div>
<div class="m" style="left:35.8px;top:1015.34px;color:#ffffff">2</div>
<div class="a" style="left:85px;top:1010.06px;width:211px;height:30.46px;background:#262626"></div>
<div class="m" style="left:83.3px;top:1015.34px;color:#ffffff">E</div>
<div class="dash" style="left:104.6px;top:1025.88px;color:#ffffff"></div>
<div class="m" style="left:117.8px;top:1015.34px;color:#ffffff">6</div>
<div class="m z" style="left:137.4px;top:1015.34px;color:#ffffff">0</div>
<div class="m" style="left:155px;top:1015.34px;color:#ffffff">A</div>
<div class="ds" style="left:185.2px;top:1031px;color:#a89a48"></div>
<div class="ds" style="left:202.9px;top:1031px;color:#a89a48"></div>
<div class="dg" style="left:227px;top:1024px;color:#f39058;opacity:.75;height:1.6px"></div>
<div class="m" style="left:239.8px;top:1015.34px;color:#f39058">A</div>
<div class="m" style="left:258.6px;top:1015.34px;color:#f39058">7</div>
<div class="m" style="left:277.3px;top:1015.34px;color:#f39058">D</div>
<div class="a" style="left:326.15px;top:1010.06px;width:211px;height:30.46px;background:#262626"></div>
<div class="dg" style="left:329.55px;top:1024px;color:#a4a4a4"></div>
<div class="dg" style="left:346.95px;top:1024px;color:#a4a4a4"></div>
<div class="dg" style="left:364.45px;top:1024px;color:#a4a4a4"></div>
<div class="ds" style="left:385.85px;top:1024px;color:#acacac"></div>
<div class="ds" style="left:403.45px;top:1024px;color:#acacac"></div>
<div class="ds" style="left:426.55px;top:1031px;color:#a89a48"></div>
<div class="ds" style="left:444.15px;top:1031px;color:#a89a48"></div>
<div class="dg" style="left:468.25px;top:1024px;color:#a4a4a4"></div>
<div class="dg" style="left:486.25px;top:1024px;color:#a4a4a4"></div>
<div class="dg" style="left:505.95px;top:1024px;color:#a4a4a4"></div>
<div class="dg" style="left:523.55px;top:1024px;color:#a4a4a4"></div>
<div class="a" style="left:567.3px;top:1010.06px;width:211px;height:30.46px;background:#262626"></div>
<div class="dg" style="left:570.7px;top:1024px;color:#a4a4a4"></div>
<div class="dg" style="left:588.1px;top:1024px;color:#a4a4a4"></div>
<div class="dg" style="left:605.6px;top:1024px;color:#a4a4a4"></div>
<div class="ds" style="left:627px;top:1024px;color:#acacac"></div>
<div class="ds" style="left:644.6px;top:1024px;color:#acacac"></div>
<div class="ds" style="left:667.7px;top:1031px;color:#a89a48"></div>
<div class="ds" style="left:685.3px;top:1031px;color:#a89a48"></div>
<div class="dg" style="left:709.4px;top:1024px;color:#a4a4a4"></div>
<div class="dg" style="left:727.4px;top:1024px;color:#a4a4a4"></div>
<div class="dg" style="left:747.1px;top:1024px;color:#a4a4a4"></div>
<div class="dg" style="left:764.7px;top:1024px;color:#a4a4a4"></div>
<div class="a" style="left:808.45px;top:1010.06px;width:211px;height:30.46px;background:#262626"></div>
<div class="dg" style="left:811.85px;top:1024px;color:#a4a4a4"></div>
<div class="dg" style="left:829.25px;top:1024px;color:#a4a4a4"></div>
<div class="dg" style="left:846.75px;top:1024px;color:#a4a4a4"></div>
<div class="ds" style="left:868.15px;top:1024px;color:#acacac"></div>
<div class="ds" style="left:885.75px;top:1024px;color:#acacac"></div>
<div class="ds" style="left:908.85px;top:1031px;color:#a89a48"></div>
<div class="ds" style="left:926.45px;top:1031px;color:#a89a48"></div>
<div class="dg" style="left:950.55px;top:1024px;color:#a4a4a4"></div>
<div class="dg" style="left:968.55px;top:1024px;color:#a4a4a4"></div>
<div class="dg" style="left:988.25px;top:1024px;color:#a4a4a4"></div>
<div class="dg" style="left:1005.85px;top:1024px;color:#a4a4a4"></div>
<div class="a" style="left:1049.6px;top:1010.06px;width:211px;height:30.46px;background:#262626"></div>
<div class="dg" style="left:1053px;top:1024px;color:#a4a4a4"></div>
<div class="dg" style="left:1070.4px;top:1024px;color:#a4a4a4"></div>
<div class="dg" style="left:1087.9px;top:1024px;color:#a4a4a4"></div>
<div class="ds" style="left:1109.3px;top:1024px;color:#acacac"></div>
<div class="ds" style="left:1126.9px;top:1024px;color:#acacac"></div>
<div class="ds" style="left:1150px;top:1031px;color:#a89a48"></div>
<div class="ds" style="left:1167.6px;top:1031px;color:#a89a48"></div>
<div class="dg" style="left:1191.7px;top:1024px;color:#a4a4a4"></div>
<div class="dg" style="left:1209.7px;top:1024px;color:#a4a4a4"></div>
<div class="dg" style="left:1229.4px;top:1024px;color:#a4a4a4"></div>
<div class="dg" style="left:1247px;top:1024px;color:#a4a4a4"></div>
<div class="a" style="left:1290.75px;top:1010.06px;width:211px;height:30.46px;background:#262626"></div>
<div class="dg" style="left:1294.15px;top:1024px;color:#a4a4a4"></div>
<div class="dg" style="left:1311.55px;top:1024px;color:#a4a4a4"></div>
<div class="dg" style="left:1329.05px;top:1024px;color:#a4a4a4"></div>
<div class="ds" style="left:1350.45px;top:1024px;color:#acacac"></div>
<div class="ds" style="left:1368.05px;top:1024px;color:#acacac"></div>
<div class="ds" style="left:1391.15px;top:1031px;color:#a89a48"></div>
<div class="ds" style="left:1408.75px;top:1031px;color:#a89a48"></div>
<div class="dg" style="left:1432.85px;top:1024px;color:#a4a4a4"></div>
<div class="dg" style="left:1450.85px;top:1024px;color:#a4a4a4"></div>
<div class="dg" style="left:1470.55px;top:1024px;color:#a4a4a4"></div>
<div class="dg" style="left:1488.15px;top:1024px;color:#a4a4a4"></div>
<div class="a" style="left:1531.9px;top:1010.06px;width:211px;height:30.46px;background:#262626"></div>
<div class="dg" style="left:1535.3px;top:1024px;color:#a4a4a4"></div>
<div class="dg" style="left:1552.7px;top:1024px;color:#a4a4a4"></div>
<div class="dg" style="left:1570.2px;top:1024px;color:#a4a4a4"></div>
<div class="ds" style="left:1591.6px;top:1024px;color:#acacac"></div>
<div class="ds" style="left:1609.2px;top:1024px;color:#acacac"></div>
<div class="ds" style="left:1632.3px;top:1031px;color:#a89a48"></div>
<div class="ds" style="left:1649.9px;top:1031px;color:#a89a48"></div>
<div class="dg" style="left:1674px;top:1024px;color:#a4a4a4"></div>
<div class="dg" style="left:1692px;top:1024px;color:#a4a4a4"></div>
<div class="dg" style="left:1711.7px;top:1024px;color:#a4a4a4"></div>
<div class="dg" style="left:1729.3px;top:1024px;color:#a4a4a4"></div>
<div class="m" style="left:18.1px;top:1045.8px;color:#8c8c8c;-webkit-text-stroke:0.3px #111111">3</div>
<div class="m" style="left:35.8px;top:1045.8px;color:#8c8c8c;-webkit-text-stroke:0.3px #111111">3</div>
<div class="m" style="left:83.3px;top:1045.8px;color:#8e8e8e;-webkit-text-stroke:0.3px #111111">F</div>
<div class="m" style="left:100.3px;top:1045.8px;color:#8e8e8e;-webkit-text-stroke:0.3px #111111">#</div>
<div class="m" style="left:117.8px;top:1045.8px;color:#8e8e8e;-webkit-text-stroke:0.3px #111111">6</div>
<div class="m z" style="left:137.4px;top:1045.8px;color:#8e8e8e;-webkit-text-stroke:0.3px #111111">0</div>
<div class="m" style="left:155px;top:1045.8px;color:#8e8e8e;-webkit-text-stroke:0.3px #111111">A</div>
<div class="ds" style="left:185.2px;top:1061px;color:#6e6836"></div>
<div class="ds" style="left:202.9px;top:1061px;color:#6e6836"></div>
<div class="dg" style="left:227px;top:1055px;color:#928d50;opacity:.55;height:1.6px"></div>
<div class="m" style="left:239.8px;top:1045.8px;color:#928d50;-webkit-text-stroke:0.3px #111111">M</div>
<div class="m" style="left:258.6px;top:1045.8px;color:#928d50;-webkit-text-stroke:0.3px #111111">4</div>
<div class="m" style="left:277.3px;top:1045.8px;color:#928d50;-webkit-text-stroke:0.3px #111111">8</div>
<div class="dg" style="left:329.55px;top:1055px;color:#585858"></div>
<div class="dg" style="left:346.95px;top:1055px;color:#585858"></div>
<div class="dg" style="left:364.45px;top:1055px;color:#585858"></div>
<div class="ds" style="left:385.85px;top:1055px;color:#666666"></div>
<div class="ds" style="left:403.45px;top:1055px;color:#666666"></div>
<div class="ds" style="left:426.55px;top:1061px;color:#6e6836"></div>
<div class="ds" style="left:444.15px;top:1061px;color:#6e6836"></div>
<div class="dg" style="left:468.25px;top:1055px;color:#585858"></div>
<div class="dg" style="left:486.25px;top:1055px;color:#585858"></div>
<div class="dg" style="left:505.95px;top:1055px;color:#585858"></div>
<div class="dg" style="left:523.55px;top:1055px;color:#585858"></div>
<div class="dg" style="left:570.7px;top:1055px;color:#585858"></div>
<div class="dg" style="left:588.1px;top:1055px;color:#585858"></div>
<div class="dg" style="left:605.6px;top:1055px;color:#585858"></div>
<div class="ds" style="left:627px;top:1055px;color:#666666"></div>
<div class="ds" style="left:644.6px;top:1055px;color:#666666"></div>
<div class="ds" style="left:667.7px;top:1061px;color:#6e6836"></div>
<div class="ds" style="left:685.3px;top:1061px;color:#6e6836"></div>
<div class="dg" style="left:709.4px;top:1055px;color:#585858"></div>
<div class="dg" style="left:727.4px;top:1055px;color:#585858"></div>
<div class="dg" style="left:747.1px;top:1055px;color:#585858"></div>
<div class="dg" style="left:764.7px;top:1055px;color:#585858"></div>
<div class="dg" style="left:811.85px;top:1055px;color:#585858"></div>
<div class="dg" style="left:829.25px;top:1055px;color:#585858"></div>
<div class="dg" style="left:846.75px;top:1055px;color:#585858"></div>
<div class="ds" style="left:868.15px;top:1055px;color:#666666"></div>
<div class="ds" style="left:885.75px;top:1055px;color:#666666"></div>
<div class="ds" style="left:908.85px;top:1061px;color:#6e6836"></div>
<div class="ds" style="left:926.45px;top:1061px;color:#6e6836"></div>
<div class="dg" style="left:950.55px;top:1055px;color:#585858"></div>
<div class="dg" style="left:968.55px;top:1055px;color:#585858"></div>
<div class="dg" style="left:988.25px;top:1055px;color:#585858"></div>
<div class="dg" style="left:1005.85px;top:1055px;color:#585858"></div>
<div class="dg" style="left:1053px;top:1055px;color:#585858"></div>
<div class="dg" style="left:1070.4px;top:1055px;color:#585858"></div>
<div class="dg" style="left:1087.9px;top:1055px;color:#585858"></div>
<div class="ds" style="left:1109.3px;top:1055px;color:#666666"></div>
<div class="ds" style="left:1126.9px;top:1055px;color:#666666"></div>
<div class="ds" style="left:1150px;top:1061px;color:#6e6836"></div>
<div class="ds" style="left:1167.6px;top:1061px;color:#6e6836"></div>
<div class="dg" style="left:1191.7px;top:1055px;color:#585858"></div>
<div class="dg" style="left:1209.7px;top:1055px;color:#585858"></div>
<div class="dg" style="left:1229.4px;top:1055px;color:#585858"></div>
<div class="dg" style="left:1247px;top:1055px;color:#585858"></div>
<div class="dg" style="left:1294.15px;top:1055px;color:#585858"></div>
<div class="dg" style="left:1311.55px;top:1055px;color:#585858"></div>
<div class="dg" style="left:1329.05px;top:1055px;color:#585858"></div>
<div class="ds" style="left:1350.45px;top:1055px;color:#666666"></div>
<div class="ds" style="left:1368.05px;top:1055px;color:#666666"></div>
<div class="ds" style="left:1391.15px;top:1061px;color:#6e6836"></div>
<div class="ds" style="left:1408.75px;top:1061px;color:#6e6836"></div>
<div class="dg" style="left:1432.85px;top:1055px;color:#585858"></div>
<div class="dg" style="left:1450.85px;top:1055px;color:#585858"></div>
<div class="dg" style="left:1470.55px;top:1055px;color:#585858"></div>
<div class="dg" style="left:1488.15px;top:1055px;color:#585858"></div>
<div class="dg" style="left:1535.3px;top:1055px;color:#585858"></div>
<div class="dg" style="left:1552.7px;top:1055px;color:#585858"></div>
<div class="dg" style="left:1570.2px;top:1055px;color:#585858"></div>
<div class="ds" style="left:1591.6px;top:1055px;color:#666666"></div>
<div class="ds" style="left:1609.2px;top:1055px;color:#666666"></div>
<div class="ds" style="left:1632.3px;top:1061px;color:#6e6836"></div>
<div class="ds" style="left:1649.9px;top:1061px;color:#6e6836"></div>
<div class="dg" style="left:1674px;top:1055px;color:#585858"></div>
<div class="dg" style="left:1692px;top:1055px;color:#585858"></div>
<div class="dg" style="left:1711.7px;top:1055px;color:#585858"></div>
<div class="dg" style="left:1729.3px;top:1055px;color:#585858"></div>
<div class="m" style="left:18.1px;top:1076.26px;color:#8c8c8c;-webkit-text-stroke:0.3px #111111">3</div>
<div class="m" style="left:35.8px;top:1076.26px;color:#8c8c8c;-webkit-text-stroke:0.3px #111111">4</div>
<div class="m" style="left:83.3px;top:1076.26px;color:#8e8e8e;-webkit-text-stroke:0.3px #111111">E</div>
<div class="dash" style="left:104.6px;top:1086.81px;color:#8e8e8e"></div>
<div class="m" style="left:117.8px;top:1076.26px;color:#8e8e8e;-webkit-text-stroke:0.3px #111111">4</div>
<div class="m z" style="left:137.4px;top:1076.26px;color:#8e8e8e;-webkit-text-stroke:0.3px #111111">0</div>
<div class="m" style="left:155px;top:1076.26px;color:#8e8e8e;-webkit-text-stroke:0.3px #111111">A</div>
<div class="ds" style="left:185.2px;top:1092px;color:#6e6836"></div>
<div class="ds" style="left:202.9px;top:1092px;color:#6e6836"></div>
<div class="dg" style="left:227px;top:1085px;color:#2e946a;opacity:.55;height:1.6px"></div>
<div class="m" style="left:239.8px;top:1076.26px;color:#2e946a;-webkit-text-stroke:0.3px #111111">N</div>
<div class="m" style="left:258.6px;top:1076.26px;color:#2e946a;-webkit-text-stroke:0.3px #111111">4</div>
<div class="m" style="left:277.3px;top:1076.26px;color:#2e946a;-webkit-text-stroke:0.3px #111111">D</div>
<div class="dg" style="left:329.55px;top:1085px;color:#585858"></div>
<div class="dg" style="left:346.95px;top:1085px;color:#585858"></div>
<div class="dg" style="left:364.45px;top:1085px;color:#585858"></div>
<div class="ds" style="left:385.85px;top:1085px;color:#666666"></div>
<div class="ds" style="left:403.45px;top:1085px;color:#666666"></div>
<div class="ds" style="left:426.55px;top:1092px;color:#6e6836"></div>
<div class="ds" style="left:444.15px;top:1092px;color:#6e6836"></div>
<div class="dg" style="left:468.25px;top:1085px;color:#585858"></div>
<div class="dg" style="left:486.25px;top:1085px;color:#585858"></div>
<div class="dg" style="left:505.95px;top:1085px;color:#585858"></div>
<div class="dg" style="left:523.55px;top:1085px;color:#585858"></div>
<div class="dg" style="left:570.7px;top:1085px;color:#585858"></div>
<div class="dg" style="left:588.1px;top:1085px;color:#585858"></div>
<div class="dg" style="left:605.6px;top:1085px;color:#585858"></div>
<div class="ds" style="left:627px;top:1085px;color:#666666"></div>
<div class="ds" style="left:644.6px;top:1085px;color:#666666"></div>
<div class="ds" style="left:667.7px;top:1092px;color:#6e6836"></div>
<div class="ds" style="left:685.3px;top:1092px;color:#6e6836"></div>
<div class="dg" style="left:709.4px;top:1085px;color:#585858"></div>
<div class="dg" style="left:727.4px;top:1085px;color:#585858"></div>
<div class="dg" style="left:747.1px;top:1085px;color:#585858"></div>
<div class="dg" style="left:764.7px;top:1085px;color:#585858"></div>
<div class="dg" style="left:811.85px;top:1085px;color:#585858"></div>
<div class="dg" style="left:829.25px;top:1085px;color:#585858"></div>
<div class="dg" style="left:846.75px;top:1085px;color:#585858"></div>
<div class="ds" style="left:868.15px;top:1085px;color:#666666"></div>
<div class="ds" style="left:885.75px;top:1085px;color:#666666"></div>
<div class="ds" style="left:908.85px;top:1092px;color:#6e6836"></div>
<div class="ds" style="left:926.45px;top:1092px;color:#6e6836"></div>
<div class="dg" style="left:950.55px;top:1085px;color:#585858"></div>
<div class="dg" style="left:968.55px;top:1085px;color:#585858"></div>
<div class="dg" style="left:988.25px;top:1085px;color:#585858"></div>
<div class="dg" style="left:1005.85px;top:1085px;color:#585858"></div>
<div class="dg" style="left:1053px;top:1085px;color:#585858"></div>
<div class="dg" style="left:1070.4px;top:1085px;color:#585858"></div>
<div class="dg" style="left:1087.9px;top:1085px;color:#585858"></div>
<div class="ds" style="left:1109.3px;top:1085px;color:#666666"></div>
<div class="ds" style="left:1126.9px;top:1085px;color:#666666"></div>
<div class="ds" style="left:1150px;top:1092px;color:#6e6836"></div>
<div class="ds" style="left:1167.6px;top:1092px;color:#6e6836"></div>
<div class="dg" style="left:1191.7px;top:1085px;color:#585858"></div>
<div class="dg" style="left:1209.7px;top:1085px;color:#585858"></div>
<div class="dg" style="left:1229.4px;top:1085px;color:#585858"></div>
<div class="dg" style="left:1247px;top:1085px;color:#585858"></div>
<div class="dg" style="left:1294.15px;top:1085px;color:#585858"></div>
<div class="dg" style="left:1311.55px;top:1085px;color:#585858"></div>
<div class="dg" style="left:1329.05px;top:1085px;color:#585858"></div>
<div class="ds" style="left:1350.45px;top:1085px;color:#666666"></div>
<div class="ds" style="left:1368.05px;top:1085px;color:#666666"></div>
<div class="ds" style="left:1391.15px;top:1092px;color:#6e6836"></div>
<div class="ds" style="left:1408.75px;top:1092px;color:#6e6836"></div>
<div class="dg" style="left:1432.85px;top:1085px;color:#585858"></div>
<div class="dg" style="left:1450.85px;top:1085px;color:#585858"></div>
<div class="dg" style="left:1470.55px;top:1085px;color:#585858"></div>
<div class="dg" style="left:1488.15px;top:1085px;color:#585858"></div>
<div class="dg" style="left:1535.3px;top:1085px;color:#585858"></div>
<div class="dg" style="left:1552.7px;top:1085px;color:#585858"></div>
<div class="dg" style="left:1570.2px;top:1085px;color:#585858"></div>
<div class="ds" style="left:1591.6px;top:1085px;color:#666666"></div>
<div class="ds" style="left:1609.2px;top:1085px;color:#666666"></div>
<div class="ds" style="left:1632.3px;top:1092px;color:#6e6836"></div>
<div class="ds" style="left:1649.9px;top:1092px;color:#6e6836"></div>
<div class="dg" style="left:1674px;top:1085px;color:#585858"></div>
<div class="dg" style="left:1692px;top:1085px;color:#585858"></div>
<div class="dg" style="left:1711.7px;top:1085px;color:#585858"></div>
<div class="dg" style="left:1729.3px;top:1085px;color:#585858"></div>
<div class="m" style="left:18.1px;top:1106.72px;color:#8c8c8c;-webkit-text-stroke:0.3px #111111">3</div>
<div class="m" style="left:35.8px;top:1106.72px;color:#8c8c8c;-webkit-text-stroke:0.3px #111111">5</div>
<div class="m" style="left:83.3px;top:1106.72px;color:#8e8e8e;-webkit-text-stroke:0.3px #111111">F</div>
<div class="dash" style="left:104.6px;top:1117.27px;color:#8e8e8e"></div>
<div class="m" style="left:117.8px;top:1106.72px;color:#8e8e8e;-webkit-text-stroke:0.3px #111111">5</div>
<div class="m z" style="left:137.4px;top:1106.72px;color:#8e8e8e;-webkit-text-stroke:0.3px #111111">0</div>
<div class="m" style="left:155px;top:1106.72px;color:#8e8e8e;-webkit-text-stroke:0.3px #111111">A</div>
<div class="ds" style="left:185.2px;top:1122px;color:#6e6836"></div>
<div class="ds" style="left:202.9px;top:1122px;color:#6e6836"></div>
<div class="dg" style="left:227px;top:1115px;color:#2e946a;opacity:.55;height:1.6px"></div>
<div class="m" style="left:239.8px;top:1106.72px;color:#2e946a;-webkit-text-stroke:0.3px #111111">N</div>
<div class="m" style="left:258.6px;top:1106.72px;color:#2e946a;-webkit-text-stroke:0.3px #111111">8</div>
<div class="m" style="left:277.3px;top:1106.72px;color:#2e946a;-webkit-text-stroke:0.3px #111111">6</div>
<div class="dg" style="left:329.55px;top:1115px;color:#585858"></div>
<div class="dg" style="left:346.95px;top:1115px;color:#585858"></div>
<div class="dg" style="left:364.45px;top:1115px;color:#585858"></div>
<div class="ds" style="left:385.85px;top:1115px;color:#666666"></div>
<div class="ds" style="left:403.45px;top:1115px;color:#666666"></div>
<div class="ds" style="left:426.55px;top:1122px;color:#6e6836"></div>
<div class="ds" style="left:444.15px;top:1122px;color:#6e6836"></div>
<div class="dg" style="left:468.25px;top:1115px;color:#585858"></div>
<div class="dg" style="left:486.25px;top:1115px;color:#585858"></div>
<div class="dg" style="left:505.95px;top:1115px;color:#585858"></div>
<div class="dg" style="left:523.55px;top:1115px;color:#585858"></div>
<div class="dg" style="left:570.7px;top:1115px;color:#585858"></div>
<div class="dg" style="left:588.1px;top:1115px;color:#585858"></div>
<div class="dg" style="left:605.6px;top:1115px;color:#585858"></div>
<div class="ds" style="left:627px;top:1115px;color:#666666"></div>
<div class="ds" style="left:644.6px;top:1115px;color:#666666"></div>
<div class="ds" style="left:667.7px;top:1122px;color:#6e6836"></div>
<div class="ds" style="left:685.3px;top:1122px;color:#6e6836"></div>
<div class="dg" style="left:709.4px;top:1115px;color:#585858"></div>
<div class="dg" style="left:727.4px;top:1115px;color:#585858"></div>
<div class="dg" style="left:747.1px;top:1115px;color:#585858"></div>
<div class="dg" style="left:764.7px;top:1115px;color:#585858"></div>
<div class="dg" style="left:811.85px;top:1115px;color:#585858"></div>
<div class="dg" style="left:829.25px;top:1115px;color:#585858"></div>
<div class="dg" style="left:846.75px;top:1115px;color:#585858"></div>
<div class="ds" style="left:868.15px;top:1115px;color:#666666"></div>
<div class="ds" style="left:885.75px;top:1115px;color:#666666"></div>
<div class="ds" style="left:908.85px;top:1122px;color:#6e6836"></div>
<div class="ds" style="left:926.45px;top:1122px;color:#6e6836"></div>
<div class="dg" style="left:950.55px;top:1115px;color:#585858"></div>
<div class="dg" style="left:968.55px;top:1115px;color:#585858"></div>
<div class="dg" style="left:988.25px;top:1115px;color:#585858"></div>
<div class="dg" style="left:1005.85px;top:1115px;color:#585858"></div>
<div class="dg" style="left:1053px;top:1115px;color:#585858"></div>
<div class="dg" style="left:1070.4px;top:1115px;color:#585858"></div>
<div class="dg" style="left:1087.9px;top:1115px;color:#585858"></div>
<div class="ds" style="left:1109.3px;top:1115px;color:#666666"></div>
<div class="ds" style="left:1126.9px;top:1115px;color:#666666"></div>
<div class="ds" style="left:1150px;top:1122px;color:#6e6836"></div>
<div class="ds" style="left:1167.6px;top:1122px;color:#6e6836"></div>
<div class="dg" style="left:1191.7px;top:1115px;color:#585858"></div>
<div class="dg" style="left:1209.7px;top:1115px;color:#585858"></div>
<div class="dg" style="left:1229.4px;top:1115px;color:#585858"></div>
<div class="dg" style="left:1247px;top:1115px;color:#585858"></div>
<div class="dg" style="left:1294.15px;top:1115px;color:#585858"></div>
<div class="dg" style="left:1311.55px;top:1115px;color:#585858"></div>
<div class="dg" style="left:1329.05px;top:1115px;color:#585858"></div>
<div class="ds" style="left:1350.45px;top:1115px;color:#666666"></div>
<div class="ds" style="left:1368.05px;top:1115px;color:#666666"></div>
<div class="ds" style="left:1391.15px;top:1122px;color:#6e6836"></div>
<div class="ds" style="left:1408.75px;top:1122px;color:#6e6836"></div>
<div class="dg" style="left:1432.85px;top:1115px;color:#585858"></div>
<div class="dg" style="left:1450.85px;top:1115px;color:#585858"></div>
<div class="dg" style="left:1470.55px;top:1115px;color:#585858"></div>
<div class="dg" style="left:1488.15px;top:1115px;color:#585858"></div>
<div class="dg" style="left:1535.3px;top:1115px;color:#585858"></div>
<div class="dg" style="left:1552.7px;top:1115px;color:#585858"></div>
<div class="dg" style="left:1570.2px;top:1115px;color:#585858"></div>
<div class="ds" style="left:1591.6px;top:1115px;color:#666666"></div>
<div class="ds" style="left:1609.2px;top:1115px;color:#666666"></div>
<div class="ds" style="left:1632.3px;top:1122px;color:#6e6836"></div>
<div class="ds" style="left:1649.9px;top:1122px;color:#6e6836"></div>
<div class="dg" style="left:1674px;top:1115px;color:#585858"></div>
<div class="dg" style="left:1692px;top:1115px;color:#585858"></div>
<div class="dg" style="left:1711.7px;top:1115px;color:#585858"></div>
<div class="dg" style="left:1729.3px;top:1115px;color:#585858"></div>
<div class="a" style="left:3px;top:1131.9px;width:52px;height:30.46px;background:#262626"></div>
<div class="m" style="left:18.1px;top:1137.18px;color:#ffffff">3</div>
<div class="m" style="left:35.8px;top:1137.18px;color:#ffffff">6</div>
<div class="a" style="left:85px;top:1131.9px;width:211px;height:30.46px;background:#262626"></div>
<div class="m" style="left:83.3px;top:1137.18px;color:#ffffff">G</div>
<div class="m" style="left:100.3px;top:1137.18px;color:#ffffff">#</div>
<div class="m" style="left:117.8px;top:1137.18px;color:#ffffff">6</div>
<div class="m z" style="left:137.4px;top:1137.18px;color:#ffffff">0</div>
<div class="m" style="left:155px;top:1137.18px;color:#ffffff">A</div>
<div class="ds" style="left:185.2px;top:1153px;color:#a89a48"></div>
<div class="ds" style="left:202.9px;top:1153px;color:#a89a48"></div>
<div class="dg" style="left:227px;top:1146px;color:#f39058;opacity:.75;height:1.6px"></div>
<div class="m" style="left:239.8px;top:1137.18px;color:#f39058">A</div>
<div class="m" style="left:258.6px;top:1137.18px;color:#f39058">7</div>
<div class="m" style="left:277.3px;top:1137.18px;color:#f39058">1</div>
<div class="a" style="left:326.15px;top:1131.9px;width:211px;height:30.46px;background:#262626"></div>
<div class="dg" style="left:329.55px;top:1146px;color:#a4a4a4"></div>
<div class="dg" style="left:346.95px;top:1146px;color:#a4a4a4"></div>
<div class="dg" style="left:364.45px;top:1146px;color:#a4a4a4"></div>
<div class="ds" style="left:385.85px;top:1146px;color:#acacac"></div>
<div class="ds" style="left:403.45px;top:1146px;color:#acacac"></div>
<div class="ds" style="left:426.55px;top:1153px;color:#a89a48"></div>
<div class="ds" style="left:444.15px;top:1153px;color:#a89a48"></div>
<div class="dg" style="left:468.25px;top:1146px;color:#a4a4a4"></div>
<div class="dg" style="left:486.25px;top:1146px;color:#a4a4a4"></div>
<div class="dg" style="left:505.95px;top:1146px;color:#a4a4a4"></div>
<div class="dg" style="left:523.55px;top:1146px;color:#a4a4a4"></div>
<div class="a" style="left:567.3px;top:1131.9px;width:211px;height:30.46px;background:#262626"></div>
<div class="dg" style="left:570.7px;top:1146px;color:#a4a4a4"></div>
<div class="dg" style="left:588.1px;top:1146px;color:#a4a4a4"></div>
<div class="dg" style="left:605.6px;top:1146px;color:#a4a4a4"></div>
<div class="ds" style="left:627px;top:1146px;color:#acacac"></div>
<div class="ds" style="left:644.6px;top:1146px;color:#acacac"></div>
<div class="ds" style="left:667.7px;top:1153px;color:#a89a48"></div>
<div class="ds" style="left:685.3px;top:1153px;color:#a89a48"></div>
<div class="dg" style="left:709.4px;top:1146px;color:#a4a4a4"></div>
<div class="dg" style="left:727.4px;top:1146px;color:#a4a4a4"></div>
<div class="dg" style="left:747.1px;top:1146px;color:#a4a4a4"></div>
<div class="dg" style="left:764.7px;top:1146px;color:#a4a4a4"></div>
<div class="a" style="left:808.45px;top:1131.9px;width:211px;height:30.46px;background:#262626"></div>
<div class="dg" style="left:811.85px;top:1146px;color:#a4a4a4"></div>
<div class="dg" style="left:829.25px;top:1146px;color:#a4a4a4"></div>
<div class="dg" style="left:846.75px;top:1146px;color:#a4a4a4"></div>
<div class="ds" style="left:868.15px;top:1146px;color:#acacac"></div>
<div class="ds" style="left:885.75px;top:1146px;color:#acacac"></div>
<div class="ds" style="left:908.85px;top:1153px;color:#a89a48"></div>
<div class="ds" style="left:926.45px;top:1153px;color:#a89a48"></div>
<div class="dg" style="left:950.55px;top:1146px;color:#a4a4a4"></div>
<div class="dg" style="left:968.55px;top:1146px;color:#a4a4a4"></div>
<div class="dg" style="left:988.25px;top:1146px;color:#a4a4a4"></div>
<div class="dg" style="left:1005.85px;top:1146px;color:#a4a4a4"></div>
<div class="a" style="left:1049.6px;top:1131.9px;width:211px;height:30.46px;background:#262626"></div>
<div class="dg" style="left:1053px;top:1146px;color:#a4a4a4"></div>
<div class="dg" style="left:1070.4px;top:1146px;color:#a4a4a4"></div>
<div class="dg" style="left:1087.9px;top:1146px;color:#a4a4a4"></div>
<div class="ds" style="left:1109.3px;top:1146px;color:#acacac"></div>
<div class="ds" style="left:1126.9px;top:1146px;color:#acacac"></div>
<div class="ds" style="left:1150px;top:1153px;color:#a89a48"></div>
<div class="ds" style="left:1167.6px;top:1153px;color:#a89a48"></div>
<div class="dg" style="left:1191.7px;top:1146px;color:#a4a4a4"></div>
<div class="dg" style="left:1209.7px;top:1146px;color:#a4a4a4"></div>
<div class="dg" style="left:1229.4px;top:1146px;color:#a4a4a4"></div>
<div class="dg" style="left:1247px;top:1146px;color:#a4a4a4"></div>
<div class="a" style="left:1290.75px;top:1131.9px;width:211px;height:30.46px;background:#262626"></div>
<div class="dg" style="left:1294.15px;top:1146px;color:#a4a4a4"></div>
<div class="dg" style="left:1311.55px;top:1146px;color:#a4a4a4"></div>
<div class="dg" style="left:1329.05px;top:1146px;color:#a4a4a4"></div>
<div class="ds" style="left:1350.45px;top:1146px;color:#acacac"></div>
<div class="ds" style="left:1368.05px;top:1146px;color:#acacac"></div>
<div class="ds" style="left:1391.15px;top:1153px;color:#a89a48"></div>
<div class="ds" style="left:1408.75px;top:1153px;color:#a89a48"></div>
<div class="dg" style="left:1432.85px;top:1146px;color:#a4a4a4"></div>
<div class="dg" style="left:1450.85px;top:1146px;color:#a4a4a4"></div>
<div class="dg" style="left:1470.55px;top:1146px;color:#a4a4a4"></div>
<div class="dg" style="left:1488.15px;top:1146px;color:#a4a4a4"></div>
<div class="a" style="left:1531.9px;top:1131.9px;width:211px;height:30.46px;background:#262626"></div>
<div class="dg" style="left:1535.3px;top:1146px;color:#a4a4a4"></div>
<div class="dg" style="left:1552.7px;top:1146px;color:#a4a4a4"></div>
<div class="dg" style="left:1570.2px;top:1146px;color:#a4a4a4"></div>
<div class="ds" style="left:1591.6px;top:1146px;color:#acacac"></div>
<div class="ds" style="left:1609.2px;top:1146px;color:#acacac"></div>
<div class="ds" style="left:1632.3px;top:1153px;color:#a89a48"></div>
<div class="ds" style="left:1649.9px;top:1153px;color:#a89a48"></div>
<div class="dg" style="left:1674px;top:1146px;color:#a4a4a4"></div>
<div class="dg" style="left:1692px;top:1146px;color:#a4a4a4"></div>
<div class="dg" style="left:1711.7px;top:1146px;color:#a4a4a4"></div>
<div class="dg" style="left:1729.3px;top:1146px;color:#a4a4a4"></div>
<div class="m" style="left:18.1px;top:1167.64px;color:#8c8c8c;-webkit-text-stroke:0.3px #111111">3</div>
<div class="m" style="left:35.8px;top:1167.64px;color:#8c8c8c;-webkit-text-stroke:0.3px #111111">7</div>
<div class="m" style="left:83.3px;top:1167.64px;color:#8e8e8e;-webkit-text-stroke:0.3px #111111">E</div>
<div class="dash" style="left:104.6px;top:1178.19px;color:#8e8e8e"></div>
<div class="m" style="left:117.8px;top:1167.64px;color:#8e8e8e;-webkit-text-stroke:0.3px #111111">5</div>
<div class="m z" style="left:137.4px;top:1167.64px;color:#8e8e8e;-webkit-text-stroke:0.3px #111111">0</div>
<div class="m" style="left:155px;top:1167.64px;color:#8e8e8e;-webkit-text-stroke:0.3px #111111">A</div>
<div class="ds" style="left:185.2px;top:1183px;color:#6e6836"></div>
<div class="ds" style="left:202.9px;top:1183px;color:#6e6836"></div>
<div class="dg" style="left:227px;top:1176px;color:#bb6d3c;opacity:.55;height:1.6px"></div>
<div class="m" style="left:239.8px;top:1167.64px;color:#bb6d3c;-webkit-text-stroke:0.3px #111111">V</div>
<div class="m" style="left:258.6px;top:1167.64px;color:#bb6d3c;-webkit-text-stroke:0.3px #111111">E</div>
<div class="m" style="left:277.3px;top:1167.64px;color:#bb6d3c;-webkit-text-stroke:0.3px #111111">9</div>
<div class="dg" style="left:329.55px;top:1176px;color:#585858"></div>
<div class="dg" style="left:346.95px;top:1176px;color:#585858"></div>
<div class="dg" style="left:364.45px;top:1176px;color:#585858"></div>
<div class="ds" style="left:385.85px;top:1176px;color:#666666"></div>
<div class="ds" style="left:403.45px;top:1176px;color:#666666"></div>
<div class="ds" style="left:426.55px;top:1183px;color:#6e6836"></div>
<div class="ds" style="left:444.15px;top:1183px;color:#6e6836"></div>
<div class="dg" style="left:468.25px;top:1176px;color:#585858"></div>
<div class="dg" style="left:486.25px;top:1176px;color:#585858"></div>
<div class="dg" style="left:505.95px;top:1176px;color:#585858"></div>
<div class="dg" style="left:523.55px;top:1176px;color:#585858"></div>
<div class="dg" style="left:570.7px;top:1176px;color:#585858"></div>
<div class="dg" style="left:588.1px;top:1176px;color:#585858"></div>
<div class="dg" style="left:605.6px;top:1176px;color:#585858"></div>
<div class="ds" style="left:627px;top:1176px;color:#666666"></div>
<div class="ds" style="left:644.6px;top:1176px;color:#666666"></div>
<div class="ds" style="left:667.7px;top:1183px;color:#6e6836"></div>
<div class="ds" style="left:685.3px;top:1183px;color:#6e6836"></div>
<div class="dg" style="left:709.4px;top:1176px;color:#585858"></div>
<div class="dg" style="left:727.4px;top:1176px;color:#585858"></div>
<div class="dg" style="left:747.1px;top:1176px;color:#585858"></div>
<div class="dg" style="left:764.7px;top:1176px;color:#585858"></div>
<div class="dg" style="left:811.85px;top:1176px;color:#585858"></div>
<div class="dg" style="left:829.25px;top:1176px;color:#585858"></div>
<div class="dg" style="left:846.75px;top:1176px;color:#585858"></div>
<div class="ds" style="left:868.15px;top:1176px;color:#666666"></div>
<div class="ds" style="left:885.75px;top:1176px;color:#666666"></div>
<div class="ds" style="left:908.85px;top:1183px;color:#6e6836"></div>
<div class="ds" style="left:926.45px;top:1183px;color:#6e6836"></div>
<div class="dg" style="left:950.55px;top:1176px;color:#585858"></div>
<div class="dg" style="left:968.55px;top:1176px;color:#585858"></div>
<div class="dg" style="left:988.25px;top:1176px;color:#585858"></div>
<div class="dg" style="left:1005.85px;top:1176px;color:#585858"></div>
<div class="dg" style="left:1053px;top:1176px;color:#585858"></div>
<div class="dg" style="left:1070.4px;top:1176px;color:#585858"></div>
<div class="dg" style="left:1087.9px;top:1176px;color:#585858"></div>
<div class="ds" style="left:1109.3px;top:1176px;color:#666666"></div>
<div class="ds" style="left:1126.9px;top:1176px;color:#666666"></div>
<div class="ds" style="left:1150px;top:1183px;color:#6e6836"></div>
<div class="ds" style="left:1167.6px;top:1183px;color:#6e6836"></div>
<div class="dg" style="left:1191.7px;top:1176px;color:#585858"></div>
<div class="dg" style="left:1209.7px;top:1176px;color:#585858"></div>
<div class="dg" style="left:1229.4px;top:1176px;color:#585858"></div>
<div class="dg" style="left:1247px;top:1176px;color:#585858"></div>
<div class="dg" style="left:1294.15px;top:1176px;color:#585858"></div>
<div class="dg" style="left:1311.55px;top:1176px;color:#585858"></div>
<div class="dg" style="left:1329.05px;top:1176px;color:#585858"></div>
<div class="ds" style="left:1350.45px;top:1176px;color:#666666"></div>
<div class="ds" style="left:1368.05px;top:1176px;color:#666666"></div>
<div class="ds" style="left:1391.15px;top:1183px;color:#6e6836"></div>
<div class="ds" style="left:1408.75px;top:1183px;color:#6e6836"></div>
<div class="dg" style="left:1432.85px;top:1176px;color:#585858"></div>
<div class="dg" style="left:1450.85px;top:1176px;color:#585858"></div>
<div class="dg" style="left:1470.55px;top:1176px;color:#585858"></div>
<div class="dg" style="left:1488.15px;top:1176px;color:#585858"></div>
<div class="dg" style="left:1535.3px;top:1176px;color:#585858"></div>
<div class="dg" style="left:1552.7px;top:1176px;color:#585858"></div>
<div class="dg" style="left:1570.2px;top:1176px;color:#585858"></div>
<div class="ds" style="left:1591.6px;top:1176px;color:#666666"></div>
<div class="ds" style="left:1609.2px;top:1176px;color:#666666"></div>
<div class="ds" style="left:1632.3px;top:1183px;color:#6e6836"></div>
<div class="ds" style="left:1649.9px;top:1183px;color:#6e6836"></div>
<div class="dg" style="left:1674px;top:1176px;color:#585858"></div>
<div class="dg" style="left:1692px;top:1176px;color:#585858"></div>
<div class="dg" style="left:1711.7px;top:1176px;color:#585858"></div>
<div class="dg" style="left:1729.3px;top:1176px;color:#585858"></div>
<div class="m" style="left:18.1px;top:1198.1px;color:#8c8c8c;-webkit-text-stroke:0.3px #111111">3</div>
<div class="m" style="left:35.8px;top:1198.1px;color:#8c8c8c;-webkit-text-stroke:0.3px #111111">8</div>
<div class="m" style="left:83.3px;top:1198.1px;color:#8e8e8e;-webkit-text-stroke:0.3px #111111">C</div>
<div class="dash" style="left:104.6px;top:1208.64px;color:#8e8e8e"></div>
<div class="m" style="left:117.8px;top:1198.1px;color:#8e8e8e;-webkit-text-stroke:0.3px #111111">5</div>
<div class="m z" style="left:137.4px;top:1198.1px;color:#8e8e8e;-webkit-text-stroke:0.3px #111111">0</div>
<div class="m" style="left:155px;top:1198.1px;color:#8e8e8e;-webkit-text-stroke:0.3px #111111">A</div>
<div class="ds" style="left:185.2px;top:1214px;color:#6e6836"></div>
<div class="ds" style="left:202.9px;top:1214px;color:#6e6836"></div>
<div class="dg" style="left:227px;top:1207px;color:#924c8c;opacity:.55;height:1.6px"></div>
<div class="m" style="left:239.8px;top:1198.1px;color:#924c8c;-webkit-text-stroke:0.3px #111111">Z</div>
<div class="m" style="left:258.6px;top:1198.1px;color:#924c8c;-webkit-text-stroke:0.3px #111111">3</div>
<div class="m" style="left:277.3px;top:1198.1px;color:#924c8c;-webkit-text-stroke:0.3px #111111">1</div>
<div class="dg" style="left:329.55px;top:1207px;color:#585858"></div>
<div class="dg" style="left:346.95px;top:1207px;color:#585858"></div>
<div class="dg" style="left:364.45px;top:1207px;color:#585858"></div>
<div class="ds" style="left:385.85px;top:1207px;color:#666666"></div>
<div class="ds" style="left:403.45px;top:1207px;color:#666666"></div>
<div class="ds" style="left:426.55px;top:1214px;color:#6e6836"></div>
<div class="ds" style="left:444.15px;top:1214px;color:#6e6836"></div>
<div class="dg" style="left:468.25px;top:1207px;color:#585858"></div>
<div class="dg" style="left:486.25px;top:1207px;color:#585858"></div>
<div class="dg" style="left:505.95px;top:1207px;color:#585858"></div>
<div class="dg" style="left:523.55px;top:1207px;color:#585858"></div>
<div class="dg" style="left:570.7px;top:1207px;color:#585858"></div>
<div class="dg" style="left:588.1px;top:1207px;color:#585858"></div>
<div class="dg" style="left:605.6px;top:1207px;color:#585858"></div>
<div class="ds" style="left:627px;top:1207px;color:#666666"></div>
<div class="ds" style="left:644.6px;top:1207px;color:#666666"></div>
<div class="ds" style="left:667.7px;top:1214px;color:#6e6836"></div>
<div class="ds" style="left:685.3px;top:1214px;color:#6e6836"></div>
<div class="dg" style="left:709.4px;top:1207px;color:#585858"></div>
<div class="dg" style="left:727.4px;top:1207px;color:#585858"></div>
<div class="dg" style="left:747.1px;top:1207px;color:#585858"></div>
<div class="dg" style="left:764.7px;top:1207px;color:#585858"></div>
<div class="dg" style="left:811.85px;top:1207px;color:#585858"></div>
<div class="dg" style="left:829.25px;top:1207px;color:#585858"></div>
<div class="dg" style="left:846.75px;top:1207px;color:#585858"></div>
<div class="ds" style="left:868.15px;top:1207px;color:#666666"></div>
<div class="ds" style="left:885.75px;top:1207px;color:#666666"></div>
<div class="ds" style="left:908.85px;top:1214px;color:#6e6836"></div>
<div class="ds" style="left:926.45px;top:1214px;color:#6e6836"></div>
<div class="dg" style="left:950.55px;top:1207px;color:#585858"></div>
<div class="dg" style="left:968.55px;top:1207px;color:#585858"></div>
<div class="dg" style="left:988.25px;top:1207px;color:#585858"></div>
<div class="dg" style="left:1005.85px;top:1207px;color:#585858"></div>
<div class="dg" style="left:1053px;top:1207px;color:#585858"></div>
<div class="dg" style="left:1070.4px;top:1207px;color:#585858"></div>
<div class="dg" style="left:1087.9px;top:1207px;color:#585858"></div>
<div class="ds" style="left:1109.3px;top:1207px;color:#666666"></div>
<div class="ds" style="left:1126.9px;top:1207px;color:#666666"></div>
<div class="ds" style="left:1150px;top:1214px;color:#6e6836"></div>
<div class="ds" style="left:1167.6px;top:1214px;color:#6e6836"></div>
<div class="dg" style="left:1191.7px;top:1207px;color:#585858"></div>
<div class="dg" style="left:1209.7px;top:1207px;color:#585858"></div>
<div class="dg" style="left:1229.4px;top:1207px;color:#585858"></div>
<div class="dg" style="left:1247px;top:1207px;color:#585858"></div>
<div class="dg" style="left:1294.15px;top:1207px;color:#585858"></div>
<div class="dg" style="left:1311.55px;top:1207px;color:#585858"></div>
<div class="dg" style="left:1329.05px;top:1207px;color:#585858"></div>
<div class="ds" style="left:1350.45px;top:1207px;color:#666666"></div>
<div class="ds" style="left:1368.05px;top:1207px;color:#666666"></div>
<div class="ds" style="left:1391.15px;top:1214px;color:#6e6836"></div>
<div class="ds" style="left:1408.75px;top:1214px;color:#6e6836"></div>
<div class="dg" style="left:1432.85px;top:1207px;color:#585858"></div>
<div class="dg" style="left:1450.85px;top:1207px;color:#585858"></div>
<div class="dg" style="left:1470.55px;top:1207px;color:#585858"></div>
<div class="dg" style="left:1488.15px;top:1207px;color:#585858"></div>
<div class="dg" style="left:1535.3px;top:1207px;color:#585858"></div>
<div class="dg" style="left:1552.7px;top:1207px;color:#585858"></div>
<div class="dg" style="left:1570.2px;top:1207px;color:#585858"></div>
<div class="ds" style="left:1591.6px;top:1207px;color:#666666"></div>
<div class="ds" style="left:1609.2px;top:1207px;color:#666666"></div>
<div class="ds" style="left:1632.3px;top:1214px;color:#6e6836"></div>
<div class="ds" style="left:1649.9px;top:1214px;color:#6e6836"></div>
<div class="dg" style="left:1674px;top:1207px;color:#585858"></div>
<div class="dg" style="left:1692px;top:1207px;color:#585858"></div>
<div class="dg" style="left:1711.7px;top:1207px;color:#585858"></div>
<div class="dg" style="left:1729.3px;top:1207px;color:#585858"></div>
<div class="m" style="left:18.1px;top:1228.56px;color:#8c8c8c;-webkit-text-stroke:0.3px #111111">3</div>
<div class="m" style="left:35.8px;top:1228.56px;color:#8c8c8c;-webkit-text-stroke:0.3px #111111">9</div>
<div class="m" style="left:83.3px;top:1228.56px;color:#8e8e8e;-webkit-text-stroke:0.3px #111111">C</div>
<div class="m" style="left:100.3px;top:1228.56px;color:#8e8e8e;-webkit-text-stroke:0.3px #111111">#</div>
<div class="m" style="left:117.8px;top:1228.56px;color:#8e8e8e;-webkit-text-stroke:0.3px #111111">6</div>
<div class="m z" style="left:137.4px;top:1228.56px;color:#8e8e8e;-webkit-text-stroke:0.3px #111111">0</div>
<div class="m" style="left:155px;top:1228.56px;color:#8e8e8e;-webkit-text-stroke:0.3px #111111">A</div>
<div class="ds" style="left:185.2px;top:1244px;color:#6e6836"></div>
<div class="ds" style="left:202.9px;top:1244px;color:#6e6836"></div>
<div class="dg" style="left:227px;top:1237px;color:#928d50;opacity:.55;height:1.6px"></div>
<div class="m" style="left:239.8px;top:1228.56px;color:#928d50;-webkit-text-stroke:0.3px #111111">C</div>
<div class="m" style="left:258.6px;top:1228.56px;color:#928d50;-webkit-text-stroke:0.3px #111111">2</div>
<div class="m" style="left:277.3px;top:1228.56px;color:#928d50;-webkit-text-stroke:0.3px #111111">E</div>
<div class="dg" style="left:329.55px;top:1237px;color:#585858"></div>
<div class="dg" style="left:346.95px;top:1237px;color:#585858"></div>
<div class="dg" style="left:364.45px;top:1237px;color:#585858"></div>
<div class="ds" style="left:385.85px;top:1237px;color:#666666"></div>
<div class="ds" style="left:403.45px;top:1237px;color:#666666"></div>
<div class="ds" style="left:426.55px;top:1244px;color:#6e6836"></div>
<div class="ds" style="left:444.15px;top:1244px;color:#6e6836"></div>
<div class="dg" style="left:468.25px;top:1237px;color:#585858"></div>
<div class="dg" style="left:486.25px;top:1237px;color:#585858"></div>
<div class="dg" style="left:505.95px;top:1237px;color:#585858"></div>
<div class="dg" style="left:523.55px;top:1237px;color:#585858"></div>
<div class="dg" style="left:570.7px;top:1237px;color:#585858"></div>
<div class="dg" style="left:588.1px;top:1237px;color:#585858"></div>
<div class="dg" style="left:605.6px;top:1237px;color:#585858"></div>
<div class="ds" style="left:627px;top:1237px;color:#666666"></div>
<div class="ds" style="left:644.6px;top:1237px;color:#666666"></div>
<div class="ds" style="left:667.7px;top:1244px;color:#6e6836"></div>
<div class="ds" style="left:685.3px;top:1244px;color:#6e6836"></div>
<div class="dg" style="left:709.4px;top:1237px;color:#585858"></div>
<div class="dg" style="left:727.4px;top:1237px;color:#585858"></div>
<div class="dg" style="left:747.1px;top:1237px;color:#585858"></div>
<div class="dg" style="left:764.7px;top:1237px;color:#585858"></div>
<div class="dg" style="left:811.85px;top:1237px;color:#585858"></div>
<div class="dg" style="left:829.25px;top:1237px;color:#585858"></div>
<div class="dg" style="left:846.75px;top:1237px;color:#585858"></div>
<div class="ds" style="left:868.15px;top:1237px;color:#666666"></div>
<div class="ds" style="left:885.75px;top:1237px;color:#666666"></div>
<div class="ds" style="left:908.85px;top:1244px;color:#6e6836"></div>
<div class="ds" style="left:926.45px;top:1244px;color:#6e6836"></div>
<div class="dg" style="left:950.55px;top:1237px;color:#585858"></div>
<div class="dg" style="left:968.55px;top:1237px;color:#585858"></div>
<div class="dg" style="left:988.25px;top:1237px;color:#585858"></div>
<div class="dg" style="left:1005.85px;top:1237px;color:#585858"></div>
<div class="dg" style="left:1053px;top:1237px;color:#585858"></div>
<div class="dg" style="left:1070.4px;top:1237px;color:#585858"></div>
<div class="dg" style="left:1087.9px;top:1237px;color:#585858"></div>
<div class="ds" style="left:1109.3px;top:1237px;color:#666666"></div>
<div class="ds" style="left:1126.9px;top:1237px;color:#666666"></div>
<div class="ds" style="left:1150px;top:1244px;color:#6e6836"></div>
<div class="ds" style="left:1167.6px;top:1244px;color:#6e6836"></div>
<div class="dg" style="left:1191.7px;top:1237px;color:#585858"></div>
<div class="dg" style="left:1209.7px;top:1237px;color:#585858"></div>
<div class="dg" style="left:1229.4px;top:1237px;color:#585858"></div>
<div class="dg" style="left:1247px;top:1237px;color:#585858"></div>
<div class="dg" style="left:1294.15px;top:1237px;color:#585858"></div>
<div class="dg" style="left:1311.55px;top:1237px;color:#585858"></div>
<div class="dg" style="left:1329.05px;top:1237px;color:#585858"></div>
<div class="ds" style="left:1350.45px;top:1237px;color:#666666"></div>
<div class="ds" style="left:1368.05px;top:1237px;color:#666666"></div>
<div class="ds" style="left:1391.15px;top:1244px;color:#6e6836"></div>
<div class="ds" style="left:1408.75px;top:1244px;color:#6e6836"></div>
<div class="dg" style="left:1432.85px;top:1237px;color:#585858"></div>
<div class="dg" style="left:1450.85px;top:1237px;color:#585858"></div>
<div class="dg" style="left:1470.55px;top:1237px;color:#585858"></div>
<div class="dg" style="left:1488.15px;top:1237px;color:#585858"></div>
<div class="dg" style="left:1535.3px;top:1237px;color:#585858"></div>
<div class="dg" style="left:1552.7px;top:1237px;color:#585858"></div>
<div class="dg" style="left:1570.2px;top:1237px;color:#585858"></div>
<div class="ds" style="left:1591.6px;top:1237px;color:#666666"></div>
<div class="ds" style="left:1609.2px;top:1237px;color:#666666"></div>
<div class="ds" style="left:1632.3px;top:1244px;color:#6e6836"></div>
<div class="ds" style="left:1649.9px;top:1244px;color:#6e6836"></div>
<div class="dg" style="left:1674px;top:1237px;color:#585858"></div>
<div class="dg" style="left:1692px;top:1237px;color:#585858"></div>
<div class="dg" style="left:1711.7px;top:1237px;color:#585858"></div>
<div class="dg" style="left:1729.3px;top:1237px;color:#585858"></div>
<div class="a" style="left:3px;top:1253.74px;width:52px;height:30.46px;background:#262626"></div>
<div class="m" style="left:18.1px;top:1259.02px;color:#ffffff">4</div>
<div class="m z" style="left:35.8px;top:1259.02px;color:#ffffff">0</div>
<div class="a" style="left:85px;top:1253.74px;width:211px;height:30.46px;background:#262626"></div>
<div class="m" style="left:83.3px;top:1259.02px;color:#ffffff">E</div>
<div class="dash" style="left:104.6px;top:1269.57px;color:#ffffff"></div>
<div class="m" style="left:117.8px;top:1259.02px;color:#ffffff">4</div>
<div class="m z" style="left:137.4px;top:1259.02px;color:#ffffff">0</div>
<div class="m" style="left:155px;top:1259.02px;color:#ffffff">A</div>
<div class="ds" style="left:185.2px;top:1275px;color:#a89a48"></div>
<div class="ds" style="left:202.9px;top:1275px;color:#a89a48"></div>
<div class="dg" style="left:227px;top:1268px;color:#f39058;opacity:.75;height:1.6px"></div>
<div class="m" style="left:239.8px;top:1259.02px;color:#f39058">V</div>
<div class="m" style="left:258.6px;top:1259.02px;color:#f39058">F</div>
<div class="m" style="left:277.3px;top:1259.02px;color:#f39058">F</div>
<div class="a" style="left:326.15px;top:1253.74px;width:211px;height:30.46px;background:#262626"></div>
<div class="dg" style="left:329.55px;top:1268px;color:#a4a4a4"></div>
<div class="dg" style="left:346.95px;top:1268px;color:#a4a4a4"></div>
<div class="dg" style="left:364.45px;top:1268px;color:#a4a4a4"></div>
<div class="ds" style="left:385.85px;top:1268px;color:#acacac"></div>
<div class="ds" style="left:403.45px;top:1268px;color:#acacac"></div>
<div class="ds" style="left:426.55px;top:1275px;color:#a89a48"></div>
<div class="ds" style="left:444.15px;top:1275px;color:#a89a48"></div>
<div class="dg" style="left:468.25px;top:1268px;color:#a4a4a4"></div>
<div class="dg" style="left:486.25px;top:1268px;color:#a4a4a4"></div>
<div class="dg" style="left:505.95px;top:1268px;color:#a4a4a4"></div>
<div class="dg" style="left:523.55px;top:1268px;color:#a4a4a4"></div>
<div class="a" style="left:567.3px;top:1253.74px;width:211px;height:30.46px;background:#262626"></div>
<div class="dg" style="left:570.7px;top:1268px;color:#a4a4a4"></div>
<div class="dg" style="left:588.1px;top:1268px;color:#a4a4a4"></div>
<div class="dg" style="left:605.6px;top:1268px;color:#a4a4a4"></div>
<div class="ds" style="left:627px;top:1268px;color:#acacac"></div>
<div class="ds" style="left:644.6px;top:1268px;color:#acacac"></div>
<div class="ds" style="left:667.7px;top:1275px;color:#a89a48"></div>
<div class="ds" style="left:685.3px;top:1275px;color:#a89a48"></div>
<div class="dg" style="left:709.4px;top:1268px;color:#a4a4a4"></div>
<div class="dg" style="left:727.4px;top:1268px;color:#a4a4a4"></div>
<div class="dg" style="left:747.1px;top:1268px;color:#a4a4a4"></div>
<div class="dg" style="left:764.7px;top:1268px;color:#a4a4a4"></div>
<div class="a" style="left:808.45px;top:1253.74px;width:211px;height:30.46px;background:#262626"></div>
<div class="dg" style="left:811.85px;top:1268px;color:#a4a4a4"></div>
<div class="dg" style="left:829.25px;top:1268px;color:#a4a4a4"></div>
<div class="dg" style="left:846.75px;top:1268px;color:#a4a4a4"></div>
<div class="ds" style="left:868.15px;top:1268px;color:#acacac"></div>
<div class="ds" style="left:885.75px;top:1268px;color:#acacac"></div>
<div class="ds" style="left:908.85px;top:1275px;color:#a89a48"></div>
<div class="ds" style="left:926.45px;top:1275px;color:#a89a48"></div>
<div class="dg" style="left:950.55px;top:1268px;color:#a4a4a4"></div>
<div class="dg" style="left:968.55px;top:1268px;color:#a4a4a4"></div>
<div class="dg" style="left:988.25px;top:1268px;color:#a4a4a4"></div>
<div class="dg" style="left:1005.85px;top:1268px;color:#a4a4a4"></div>
<div class="a" style="left:1049.6px;top:1253.74px;width:211px;height:30.46px;background:#262626"></div>
<div class="dg" style="left:1053px;top:1268px;color:#a4a4a4"></div>
<div class="dg" style="left:1070.4px;top:1268px;color:#a4a4a4"></div>
<div class="dg" style="left:1087.9px;top:1268px;color:#a4a4a4"></div>
<div class="ds" style="left:1109.3px;top:1268px;color:#acacac"></div>
<div class="ds" style="left:1126.9px;top:1268px;color:#acacac"></div>
<div class="ds" style="left:1150px;top:1275px;color:#a89a48"></div>
<div class="ds" style="left:1167.6px;top:1275px;color:#a89a48"></div>
<div class="dg" style="left:1191.7px;top:1268px;color:#a4a4a4"></div>
<div class="dg" style="left:1209.7px;top:1268px;color:#a4a4a4"></div>
<div class="dg" style="left:1229.4px;top:1268px;color:#a4a4a4"></div>
<div class="dg" style="left:1247px;top:1268px;color:#a4a4a4"></div>
<div class="a" style="left:1290.75px;top:1253.74px;width:211px;height:30.46px;background:#262626"></div>
<div class="dg" style="left:1294.15px;top:1268px;color:#a4a4a4"></div>
<div class="dg" style="left:1311.55px;top:1268px;color:#a4a4a4"></div>
<div class="dg" style="left:1329.05px;top:1268px;color:#a4a4a4"></div>
<div class="ds" style="left:1350.45px;top:1268px;color:#acacac"></div>
<div class="ds" style="left:1368.05px;top:1268px;color:#acacac"></div>
<div class="ds" style="left:1391.15px;top:1275px;color:#a89a48"></div>
<div class="ds" style="left:1408.75px;top:1275px;color:#a89a48"></div>
<div class="dg" style="left:1432.85px;top:1268px;color:#a4a4a4"></div>
<div class="dg" style="left:1450.85px;top:1268px;color:#a4a4a4"></div>
<div class="dg" style="left:1470.55px;top:1268px;color:#a4a4a4"></div>
<div class="dg" style="left:1488.15px;top:1268px;color:#a4a4a4"></div>
<div class="a" style="left:1531.9px;top:1253.74px;width:211px;height:30.46px;background:#262626"></div>
<div class="dg" style="left:1535.3px;top:1268px;color:#a4a4a4"></div>
<div class="dg" style="left:1552.7px;top:1268px;color:#a4a4a4"></div>
<div class="dg" style="left:1570.2px;top:1268px;color:#a4a4a4"></div>
<div class="ds" style="left:1591.6px;top:1268px;color:#acacac"></div>
<div class="ds" style="left:1609.2px;top:1268px;color:#acacac"></div>
<div class="ds" style="left:1632.3px;top:1275px;color:#a89a48"></div>
<div class="ds" style="left:1649.9px;top:1275px;color:#a89a48"></div>
<div class="dg" style="left:1674px;top:1268px;color:#a4a4a4"></div>
<div class="dg" style="left:1692px;top:1268px;color:#a4a4a4"></div>
<div class="dg" style="left:1711.7px;top:1268px;color:#a4a4a4"></div>
<div class="dg" style="left:1729.3px;top:1268px;color:#a4a4a4"></div>
<div class="m" style="left:18.1px;top:1289.47px;color:#8c8c8c;-webkit-text-stroke:0.3px #111111">4</div>
<div class="m" style="left:35.8px;top:1289.47px;color:#8c8c8c;-webkit-text-stroke:0.3px #111111">1</div>
<div class="m" style="left:83.3px;top:1289.47px;color:#8e8e8e;-webkit-text-stroke:0.3px #111111">E</div>
<div class="dash" style="left:104.6px;top:1300.02px;color:#8e8e8e"></div>
<div class="m" style="left:117.8px;top:1289.47px;color:#8e8e8e;-webkit-text-stroke:0.3px #111111">4</div>
<div class="m z" style="left:137.4px;top:1289.47px;color:#8e8e8e;-webkit-text-stroke:0.3px #111111">0</div>
<div class="m" style="left:155px;top:1289.47px;color:#8e8e8e;-webkit-text-stroke:0.3px #111111">A</div>
<div class="ds" style="left:185.2px;top:1305px;color:#6e6836"></div>
<div class="ds" style="left:202.9px;top:1305px;color:#6e6836"></div>
<div class="dg" style="left:227px;top:1298px;color:#928d50;opacity:.55;height:1.6px"></div>
<div class="m" style="left:239.8px;top:1289.47px;color:#928d50;-webkit-text-stroke:0.3px #111111">C</div>
<div class="m" style="left:258.6px;top:1289.47px;color:#928d50;-webkit-text-stroke:0.3px #111111">4</div>
<div class="m" style="left:277.3px;top:1289.47px;color:#928d50;-webkit-text-stroke:0.3px #111111">1</div>
<div class="dg" style="left:329.55px;top:1298px;color:#585858"></div>
<div class="dg" style="left:346.95px;top:1298px;color:#585858"></div>
<div class="dg" style="left:364.45px;top:1298px;color:#585858"></div>
<div class="ds" style="left:385.85px;top:1298px;color:#666666"></div>
<div class="ds" style="left:403.45px;top:1298px;color:#666666"></div>
<div class="ds" style="left:426.55px;top:1305px;color:#6e6836"></div>
<div class="ds" style="left:444.15px;top:1305px;color:#6e6836"></div>
<div class="dg" style="left:468.25px;top:1298px;color:#585858"></div>
<div class="dg" style="left:486.25px;top:1298px;color:#585858"></div>
<div class="dg" style="left:505.95px;top:1298px;color:#585858"></div>
<div class="dg" style="left:523.55px;top:1298px;color:#585858"></div>
<div class="dg" style="left:570.7px;top:1298px;color:#585858"></div>
<div class="dg" style="left:588.1px;top:1298px;color:#585858"></div>
<div class="dg" style="left:605.6px;top:1298px;color:#585858"></div>
<div class="ds" style="left:627px;top:1298px;color:#666666"></div>
<div class="ds" style="left:644.6px;top:1298px;color:#666666"></div>
<div class="ds" style="left:667.7px;top:1305px;color:#6e6836"></div>
<div class="ds" style="left:685.3px;top:1305px;color:#6e6836"></div>
<div class="dg" style="left:709.4px;top:1298px;color:#585858"></div>
<div class="dg" style="left:727.4px;top:1298px;color:#585858"></div>
<div class="dg" style="left:747.1px;top:1298px;color:#585858"></div>
<div class="dg" style="left:764.7px;top:1298px;color:#585858"></div>
<div class="dg" style="left:811.85px;top:1298px;color:#585858"></div>
<div class="dg" style="left:829.25px;top:1298px;color:#585858"></div>
<div class="dg" style="left:846.75px;top:1298px;color:#585858"></div>
<div class="ds" style="left:868.15px;top:1298px;color:#666666"></div>
<div class="ds" style="left:885.75px;top:1298px;color:#666666"></div>
<div class="ds" style="left:908.85px;top:1305px;color:#6e6836"></div>
<div class="ds" style="left:926.45px;top:1305px;color:#6e6836"></div>
<div class="dg" style="left:950.55px;top:1298px;color:#585858"></div>
<div class="dg" style="left:968.55px;top:1298px;color:#585858"></div>
<div class="dg" style="left:988.25px;top:1298px;color:#585858"></div>
<div class="dg" style="left:1005.85px;top:1298px;color:#585858"></div>
<div class="dg" style="left:1053px;top:1298px;color:#585858"></div>
<div class="dg" style="left:1070.4px;top:1298px;color:#585858"></div>
<div class="dg" style="left:1087.9px;top:1298px;color:#585858"></div>
<div class="ds" style="left:1109.3px;top:1298px;color:#666666"></div>
<div class="ds" style="left:1126.9px;top:1298px;color:#666666"></div>
<div class="ds" style="left:1150px;top:1305px;color:#6e6836"></div>
<div class="ds" style="left:1167.6px;top:1305px;color:#6e6836"></div>
<div class="dg" style="left:1191.7px;top:1298px;color:#585858"></div>
<div class="dg" style="left:1209.7px;top:1298px;color:#585858"></div>
<div class="dg" style="left:1229.4px;top:1298px;color:#585858"></div>
<div class="dg" style="left:1247px;top:1298px;color:#585858"></div>
<div class="dg" style="left:1294.15px;top:1298px;color:#585858"></div>
<div class="dg" style="left:1311.55px;top:1298px;color:#585858"></div>
<div class="dg" style="left:1329.05px;top:1298px;color:#585858"></div>
<div class="ds" style="left:1350.45px;top:1298px;color:#666666"></div>
<div class="ds" style="left:1368.05px;top:1298px;color:#666666"></div>
<div class="ds" style="left:1391.15px;top:1305px;color:#6e6836"></div>
<div class="ds" style="left:1408.75px;top:1305px;color:#6e6836"></div>
<div class="dg" style="left:1432.85px;top:1298px;color:#585858"></div>
<div class="dg" style="left:1450.85px;top:1298px;color:#585858"></div>
<div class="dg" style="left:1470.55px;top:1298px;color:#585858"></div>
<div class="dg" style="left:1488.15px;top:1298px;color:#585858"></div>
<div class="dg" style="left:1535.3px;top:1298px;color:#585858"></div>
<div class="dg" style="left:1552.7px;top:1298px;color:#585858"></div>
<div class="dg" style="left:1570.2px;top:1298px;color:#585858"></div>
<div class="ds" style="left:1591.6px;top:1298px;color:#666666"></div>
<div class="ds" style="left:1609.2px;top:1298px;color:#666666"></div>
<div class="ds" style="left:1632.3px;top:1305px;color:#6e6836"></div>
<div class="ds" style="left:1649.9px;top:1305px;color:#6e6836"></div>
<div class="dg" style="left:1674px;top:1298px;color:#585858"></div>
<div class="dg" style="left:1692px;top:1298px;color:#585858"></div>
<div class="dg" style="left:1711.7px;top:1298px;color:#585858"></div>
<div class="dg" style="left:1729.3px;top:1298px;color:#585858"></div>
<div class="m" style="left:18.1px;top:1319.93px;color:#8c8c8c;-webkit-text-stroke:0.3px #111111">4</div>
<div class="m" style="left:35.8px;top:1319.93px;color:#8c8c8c;-webkit-text-stroke:0.3px #111111">2</div>
<div class="m" style="left:83.3px;top:1319.93px;color:#8e8e8e;-webkit-text-stroke:0.3px #111111">F</div>
<div class="dash" style="left:104.6px;top:1330.48px;color:#8e8e8e"></div>
<div class="m" style="left:117.8px;top:1319.93px;color:#8e8e8e;-webkit-text-stroke:0.3px #111111">6</div>
<div class="m z" style="left:137.4px;top:1319.93px;color:#8e8e8e;-webkit-text-stroke:0.3px #111111">0</div>
<div class="m" style="left:155px;top:1319.93px;color:#8e8e8e;-webkit-text-stroke:0.3px #111111">A</div>
<div class="ds" style="left:185.2px;top:1335px;color:#6e6836"></div>
<div class="ds" style="left:202.9px;top:1335px;color:#6e6836"></div>
<div class="dg" style="left:227px;top:1329px;color:#bb6d3c;opacity:.55;height:1.6px"></div>
<div class="m" style="left:239.8px;top:1319.93px;color:#bb6d3c;-webkit-text-stroke:0.3px #111111">G</div>
<div class="m" style="left:258.6px;top:1319.93px;color:#bb6d3c;-webkit-text-stroke:0.3px #111111">6</div>
<div class="m" style="left:277.3px;top:1319.93px;color:#bb6d3c;-webkit-text-stroke:0.3px #111111">A</div>
<div class="dg" style="left:329.55px;top:1329px;color:#585858"></div>
<div class="dg" style="left:346.95px;top:1329px;color:#585858"></div>
<div class="dg" style="left:364.45px;top:1329px;color:#585858"></div>
<div class="ds" style="left:385.85px;top:1329px;color:#666666"></div>
<div class="ds" style="left:403.45px;top:1329px;color:#666666"></div>
<div class="ds" style="left:426.55px;top:1335px;color:#6e6836"></div>
<div class="ds" style="left:444.15px;top:1335px;color:#6e6836"></div>
<div class="dg" style="left:468.25px;top:1329px;color:#585858"></div>
<div class="dg" style="left:486.25px;top:1329px;color:#585858"></div>
<div class="dg" style="left:505.95px;top:1329px;color:#585858"></div>
<div class="dg" style="left:523.55px;top:1329px;color:#585858"></div>
<div class="dg" style="left:570.7px;top:1329px;color:#585858"></div>
<div class="dg" style="left:588.1px;top:1329px;color:#585858"></div>
<div class="dg" style="left:605.6px;top:1329px;color:#585858"></div>
<div class="ds" style="left:627px;top:1329px;color:#666666"></div>
<div class="ds" style="left:644.6px;top:1329px;color:#666666"></div>
<div class="ds" style="left:667.7px;top:1335px;color:#6e6836"></div>
<div class="ds" style="left:685.3px;top:1335px;color:#6e6836"></div>
<div class="dg" style="left:709.4px;top:1329px;color:#585858"></div>
<div class="dg" style="left:727.4px;top:1329px;color:#585858"></div>
<div class="dg" style="left:747.1px;top:1329px;color:#585858"></div>
<div class="dg" style="left:764.7px;top:1329px;color:#585858"></div>
<div class="dg" style="left:811.85px;top:1329px;color:#585858"></div>
<div class="dg" style="left:829.25px;top:1329px;color:#585858"></div>
<div class="dg" style="left:846.75px;top:1329px;color:#585858"></div>
<div class="ds" style="left:868.15px;top:1329px;color:#666666"></div>
<div class="ds" style="left:885.75px;top:1329px;color:#666666"></div>
<div class="ds" style="left:908.85px;top:1335px;color:#6e6836"></div>
<div class="ds" style="left:926.45px;top:1335px;color:#6e6836"></div>
<div class="dg" style="left:950.55px;top:1329px;color:#585858"></div>
<div class="dg" style="left:968.55px;top:1329px;color:#585858"></div>
<div class="dg" style="left:988.25px;top:1329px;color:#585858"></div>
<div class="dg" style="left:1005.85px;top:1329px;color:#585858"></div>
<div class="dg" style="left:1053px;top:1329px;color:#585858"></div>
<div class="dg" style="left:1070.4px;top:1329px;color:#585858"></div>
<div class="dg" style="left:1087.9px;top:1329px;color:#585858"></div>
<div class="ds" style="left:1109.3px;top:1329px;color:#666666"></div>
<div class="ds" style="left:1126.9px;top:1329px;color:#666666"></div>
<div class="ds" style="left:1150px;top:1335px;color:#6e6836"></div>
<div class="ds" style="left:1167.6px;top:1335px;color:#6e6836"></div>
<div class="dg" style="left:1191.7px;top:1329px;color:#585858"></div>
<div class="dg" style="left:1209.7px;top:1329px;color:#585858"></div>
<div class="dg" style="left:1229.4px;top:1329px;color:#585858"></div>
<div class="dg" style="left:1247px;top:1329px;color:#585858"></div>
<div class="dg" style="left:1294.15px;top:1329px;color:#585858"></div>
<div class="dg" style="left:1311.55px;top:1329px;color:#585858"></div>
<div class="dg" style="left:1329.05px;top:1329px;color:#585858"></div>
<div class="ds" style="left:1350.45px;top:1329px;color:#666666"></div>
<div class="ds" style="left:1368.05px;top:1329px;color:#666666"></div>
<div class="ds" style="left:1391.15px;top:1335px;color:#6e6836"></div>
<div class="ds" style="left:1408.75px;top:1335px;color:#6e6836"></div>
<div class="dg" style="left:1432.85px;top:1329px;color:#585858"></div>
<div class="dg" style="left:1450.85px;top:1329px;color:#585858"></div>
<div class="dg" style="left:1470.55px;top:1329px;color:#585858"></div>
<div class="dg" style="left:1488.15px;top:1329px;color:#585858"></div>
<div class="dg" style="left:1535.3px;top:1329px;color:#585858"></div>
<div class="dg" style="left:1552.7px;top:1329px;color:#585858"></div>
<div class="dg" style="left:1570.2px;top:1329px;color:#585858"></div>
<div class="ds" style="left:1591.6px;top:1329px;color:#666666"></div>
<div class="ds" style="left:1609.2px;top:1329px;color:#666666"></div>
<div class="ds" style="left:1632.3px;top:1335px;color:#6e6836"></div>
<div class="ds" style="left:1649.9px;top:1335px;color:#6e6836"></div>
<div class="dg" style="left:1674px;top:1329px;color:#585858"></div>
<div class="dg" style="left:1692px;top:1329px;color:#585858"></div>
<div class="dg" style="left:1711.7px;top:1329px;color:#585858"></div>
<div class="dg" style="left:1729.3px;top:1329px;color:#585858"></div>
<div class="m" style="left:18.1px;top:1350.39px;color:#8c8c8c;-webkit-text-stroke:0.3px #111111">4</div>
<div class="m" style="left:35.8px;top:1350.39px;color:#8c8c8c;-webkit-text-stroke:0.3px #111111">3</div>
<div class="m" style="left:83.3px;top:1350.39px;color:#8e8e8e;-webkit-text-stroke:0.3px #111111">D</div>
<div class="m" style="left:100.3px;top:1350.39px;color:#8e8e8e;-webkit-text-stroke:0.3px #111111">#</div>
<div class="m" style="left:117.8px;top:1350.39px;color:#8e8e8e;-webkit-text-stroke:0.3px #111111">4</div>
<div class="m z" style="left:137.4px;top:1350.39px;color:#8e8e8e;-webkit-text-stroke:0.3px #111111">0</div>
<div class="m" style="left:155px;top:1350.39px;color:#8e8e8e;-webkit-text-stroke:0.3px #111111">A</div>
<div class="ds" style="left:185.2px;top:1366px;color:#6e6836"></div>
<div class="ds" style="left:202.9px;top:1366px;color:#6e6836"></div>
<div class="dg" style="left:227px;top:1359px;color:#928d50;opacity:.55;height:1.6px"></div>
<div class="m" style="left:239.8px;top:1350.39px;color:#928d50;-webkit-text-stroke:0.3px #111111">C</div>
<div class="m" style="left:258.6px;top:1350.39px;color:#928d50;-webkit-text-stroke:0.3px #111111">7</div>
<div class="m" style="left:277.3px;top:1350.39px;color:#928d50;-webkit-text-stroke:0.3px #111111">6</div>
<div class="dg" style="left:329.55px;top:1359px;color:#585858"></div>
<div class="dg" style="left:346.95px;top:1359px;color:#585858"></div>
<div class="dg" style="left:364.45px;top:1359px;color:#585858"></div>
<div class="ds" style="left:385.85px;top:1359px;color:#666666"></div>
<div class="ds" style="left:403.45px;top:1359px;color:#666666"></div>
<div class="ds" style="left:426.55px;top:1366px;color:#6e6836"></div>
<div class="ds" style="left:444.15px;top:1366px;color:#6e6836"></div>
<div class="dg" style="left:468.25px;top:1359px;color:#585858"></div>
<div class="dg" style="left:486.25px;top:1359px;color:#585858"></div>
<div class="dg" style="left:505.95px;top:1359px;color:#585858"></div>
<div class="dg" style="left:523.55px;top:1359px;color:#585858"></div>
<div class="dg" style="left:570.7px;top:1359px;color:#585858"></div>
<div class="dg" style="left:588.1px;top:1359px;color:#585858"></div>
<div class="dg" style="left:605.6px;top:1359px;color:#585858"></div>
<div class="ds" style="left:627px;top:1359px;color:#666666"></div>
<div class="ds" style="left:644.6px;top:1359px;color:#666666"></div>
<div class="ds" style="left:667.7px;top:1366px;color:#6e6836"></div>
<div class="ds" style="left:685.3px;top:1366px;color:#6e6836"></div>
<div class="dg" style="left:709.4px;top:1359px;color:#585858"></div>
<div class="dg" style="left:727.4px;top:1359px;color:#585858"></div>
<div class="dg" style="left:747.1px;top:1359px;color:#585858"></div>
<div class="dg" style="left:764.7px;top:1359px;color:#585858"></div>
<div class="dg" style="left:811.85px;top:1359px;color:#585858"></div>
<div class="dg" style="left:829.25px;top:1359px;color:#585858"></div>
<div class="dg" style="left:846.75px;top:1359px;color:#585858"></div>
<div class="ds" style="left:868.15px;top:1359px;color:#666666"></div>
<div class="ds" style="left:885.75px;top:1359px;color:#666666"></div>
<div class="ds" style="left:908.85px;top:1366px;color:#6e6836"></div>
<div class="ds" style="left:926.45px;top:1366px;color:#6e6836"></div>
<div class="dg" style="left:950.55px;top:1359px;color:#585858"></div>
<div class="dg" style="left:968.55px;top:1359px;color:#585858"></div>
<div class="dg" style="left:988.25px;top:1359px;color:#585858"></div>
<div class="dg" style="left:1005.85px;top:1359px;color:#585858"></div>
<div class="dg" style="left:1053px;top:1359px;color:#585858"></div>
<div class="dg" style="left:1070.4px;top:1359px;color:#585858"></div>
<div class="dg" style="left:1087.9px;top:1359px;color:#585858"></div>
<div class="ds" style="left:1109.3px;top:1359px;color:#666666"></div>
<div class="ds" style="left:1126.9px;top:1359px;color:#666666"></div>
<div class="ds" style="left:1150px;top:1366px;color:#6e6836"></div>
<div class="ds" style="left:1167.6px;top:1366px;color:#6e6836"></div>
<div class="dg" style="left:1191.7px;top:1359px;color:#585858"></div>
<div class="dg" style="left:1209.7px;top:1359px;color:#585858"></div>
<div class="dg" style="left:1229.4px;top:1359px;color:#585858"></div>
<div class="dg" style="left:1247px;top:1359px;color:#585858"></div>
<div class="dg" style="left:1294.15px;top:1359px;color:#585858"></div>
<div class="dg" style="left:1311.55px;top:1359px;color:#585858"></div>
<div class="dg" style="left:1329.05px;top:1359px;color:#585858"></div>
<div class="ds" style="left:1350.45px;top:1359px;color:#666666"></div>
<div class="ds" style="left:1368.05px;top:1359px;color:#666666"></div>
<div class="ds" style="left:1391.15px;top:1366px;color:#6e6836"></div>
<div class="ds" style="left:1408.75px;top:1366px;color:#6e6836"></div>
<div class="dg" style="left:1432.85px;top:1359px;color:#585858"></div>
<div class="dg" style="left:1450.85px;top:1359px;color:#585858"></div>
<div class="dg" style="left:1470.55px;top:1359px;color:#585858"></div>
<div class="dg" style="left:1488.15px;top:1359px;color:#585858"></div>
<div class="dg" style="left:1535.3px;top:1359px;color:#585858"></div>
<div class="dg" style="left:1552.7px;top:1359px;color:#585858"></div>
<div class="dg" style="left:1570.2px;top:1359px;color:#585858"></div>
<div class="ds" style="left:1591.6px;top:1359px;color:#666666"></div>
<div class="ds" style="left:1609.2px;top:1359px;color:#666666"></div>
<div class="ds" style="left:1632.3px;top:1366px;color:#6e6836"></div>
<div class="ds" style="left:1649.9px;top:1366px;color:#6e6836"></div>
<div class="dg" style="left:1674px;top:1359px;color:#585858"></div>
<div class="dg" style="left:1692px;top:1359px;color:#585858"></div>
<div class="dg" style="left:1711.7px;top:1359px;color:#585858"></div>
<div class="dg" style="left:1729.3px;top:1359px;color:#585858"></div>
<div class="a" style="left:3px;top:1375.58px;width:52px;height:30.46px;background:#262626"></div>
<div class="m" style="left:18.1px;top:1380.86px;color:#ffffff">4</div>
<div class="m" style="left:35.8px;top:1380.86px;color:#ffffff">4</div>
<div class="a" style="left:85px;top:1375.58px;width:211px;height:30.46px;background:#262626"></div>
<div class="m" style="left:83.3px;top:1380.86px;color:#ffffff">C</div>
<div class="dash" style="left:104.6px;top:1391.4px;color:#ffffff"></div>
<div class="m" style="left:117.8px;top:1380.86px;color:#ffffff">6</div>
<div class="m z" style="left:137.4px;top:1380.86px;color:#ffffff">0</div>
<div class="m" style="left:155px;top:1380.86px;color:#ffffff">A</div>
<div class="ds" style="left:185.2px;top:1396px;color:#a89a48"></div>
<div class="ds" style="left:202.9px;top:1396px;color:#a89a48"></div>
<div class="dg" style="left:227px;top:1390px;color:#f2e66a;opacity:.75;height:1.6px"></div>
<div class="m" style="left:239.8px;top:1380.86px;color:#f2e66a">T</div>
<div class="m" style="left:258.6px;top:1380.86px;color:#f2e66a">C</div>
<div class="m" style="left:277.3px;top:1380.86px;color:#f2e66a">3</div>
<div class="a" style="left:326.15px;top:1375.58px;width:211px;height:30.46px;background:#262626"></div>
<div class="dg" style="left:329.55px;top:1390px;color:#a4a4a4"></div>
<div class="dg" style="left:346.95px;top:1390px;color:#a4a4a4"></div>
<div class="dg" style="left:364.45px;top:1390px;color:#a4a4a4"></div>
<div class="ds" style="left:385.85px;top:1390px;color:#acacac"></div>
<div class="ds" style="left:403.45px;top:1390px;color:#acacac"></div>
<div class="ds" style="left:426.55px;top:1396px;color:#a89a48"></div>
<div class="ds" style="left:444.15px;top:1396px;color:#a89a48"></div>
<div class="dg" style="left:468.25px;top:1390px;color:#a4a4a4"></div>
<div class="dg" style="left:486.25px;top:1390px;color:#a4a4a4"></div>
<div class="dg" style="left:505.95px;top:1390px;color:#a4a4a4"></div>
<div class="dg" style="left:523.55px;top:1390px;color:#a4a4a4"></div>
<div class="a" style="left:567.3px;top:1375.58px;width:211px;height:30.46px;background:#262626"></div>
<div class="dg" style="left:570.7px;top:1390px;color:#a4a4a4"></div>
<div class="dg" style="left:588.1px;top:1390px;color:#a4a4a4"></div>
<div class="dg" style="left:605.6px;top:1390px;color:#a4a4a4"></div>
<div class="ds" style="left:627px;top:1390px;color:#acacac"></div>
<div class="ds" style="left:644.6px;top:1390px;color:#acacac"></div>
<div class="ds" style="left:667.7px;top:1396px;color:#a89a48"></div>
<div class="ds" style="left:685.3px;top:1396px;color:#a89a48"></div>
<div class="dg" style="left:709.4px;top:1390px;color:#a4a4a4"></div>
<div class="dg" style="left:727.4px;top:1390px;color:#a4a4a4"></div>
<div class="dg" style="left:747.1px;top:1390px;color:#a4a4a4"></div>
<div class="dg" style="left:764.7px;top:1390px;color:#a4a4a4"></div>
<div class="a" style="left:808.45px;top:1375.58px;width:211px;height:30.46px;background:#262626"></div>
<div class="dg" style="left:811.85px;top:1390px;color:#a4a4a4"></div>
<div class="dg" style="left:829.25px;top:1390px;color:#a4a4a4"></div>
<div class="dg" style="left:846.75px;top:1390px;color:#a4a4a4"></div>
<div class="ds" style="left:868.15px;top:1390px;color:#acacac"></div>
<div class="ds" style="left:885.75px;top:1390px;color:#acacac"></div>
<div class="ds" style="left:908.85px;top:1396px;color:#a89a48"></div>
<div class="ds" style="left:926.45px;top:1396px;color:#a89a48"></div>
<div class="dg" style="left:950.55px;top:1390px;color:#a4a4a4"></div>
<div class="dg" style="left:968.55px;top:1390px;color:#a4a4a4"></div>
<div class="dg" style="left:988.25px;top:1390px;color:#a4a4a4"></div>
<div class="dg" style="left:1005.85px;top:1390px;color:#a4a4a4"></div>
<div class="a" style="left:1049.6px;top:1375.58px;width:211px;height:30.46px;background:#262626"></div>
<div class="dg" style="left:1053px;top:1390px;color:#a4a4a4"></div>
<div class="dg" style="left:1070.4px;top:1390px;color:#a4a4a4"></div>
<div class="dg" style="left:1087.9px;top:1390px;color:#a4a4a4"></div>
<div class="ds" style="left:1109.3px;top:1390px;color:#acacac"></div>
<div class="ds" style="left:1126.9px;top:1390px;color:#acacac"></div>
<div class="ds" style="left:1150px;top:1396px;color:#a89a48"></div>
<div class="ds" style="left:1167.6px;top:1396px;color:#a89a48"></div>
<div class="dg" style="left:1191.7px;top:1390px;color:#a4a4a4"></div>
<div class="dg" style="left:1209.7px;top:1390px;color:#a4a4a4"></div>
<div class="dg" style="left:1229.4px;top:1390px;color:#a4a4a4"></div>
<div class="dg" style="left:1247px;top:1390px;color:#a4a4a4"></div>
<div class="a" style="left:1290.75px;top:1375.58px;width:211px;height:30.46px;background:#262626"></div>
<div class="dg" style="left:1294.15px;top:1390px;color:#a4a4a4"></div>
<div class="dg" style="left:1311.55px;top:1390px;color:#a4a4a4"></div>
<div class="dg" style="left:1329.05px;top:1390px;color:#a4a4a4"></div>
<div class="ds" style="left:1350.45px;top:1390px;color:#acacac"></div>
<div class="ds" style="left:1368.05px;top:1390px;color:#acacac"></div>
<div class="ds" style="left:1391.15px;top:1396px;color:#a89a48"></div>
<div class="ds" style="left:1408.75px;top:1396px;color:#a89a48"></div>
<div class="dg" style="left:1432.85px;top:1390px;color:#a4a4a4"></div>
<div class="dg" style="left:1450.85px;top:1390px;color:#a4a4a4"></div>
<div class="dg" style="left:1470.55px;top:1390px;color:#a4a4a4"></div>
<div class="dg" style="left:1488.15px;top:1390px;color:#a4a4a4"></div>
<div class="a" style="left:1531.9px;top:1375.58px;width:211px;height:30.46px;background:#262626"></div>
<div class="dg" style="left:1535.3px;top:1390px;color:#a4a4a4"></div>
<div class="dg" style="left:1552.7px;top:1390px;color:#a4a4a4"></div>
<div class="dg" style="left:1570.2px;top:1390px;color:#a4a4a4"></div>
<div class="ds" style="left:1591.6px;top:1390px;color:#acacac"></div>
<div class="ds" style="left:1609.2px;top:1390px;color:#acacac"></div>
<div class="ds" style="left:1632.3px;top:1396px;color:#a89a48"></div>
<div class="ds" style="left:1649.9px;top:1396px;color:#a89a48"></div>
<div class="dg" style="left:1674px;top:1390px;color:#a4a4a4"></div>
<div class="dg" style="left:1692px;top:1390px;color:#a4a4a4"></div>
<div class="dg" style="left:1711.7px;top:1390px;color:#a4a4a4"></div>
<div class="dg" style="left:1729.3px;top:1390px;color:#a4a4a4"></div>
<div class="m" style="left:18.1px;top:1411.32px;color:#8c8c8c;-webkit-text-stroke:0.3px #111111">4</div>
<div class="m" style="left:35.8px;top:1411.32px;color:#8c8c8c;-webkit-text-stroke:0.3px #111111">5</div>
<div class="m" style="left:83.3px;top:1411.32px;color:#8e8e8e;-webkit-text-stroke:0.3px #111111">G</div>
<div class="dash" style="left:104.6px;top:1421.87px;color:#8e8e8e"></div>
<div class="m" style="left:117.8px;top:1411.32px;color:#8e8e8e;-webkit-text-stroke:0.3px #111111">6</div>
<div class="m z" style="left:137.4px;top:1411.32px;color:#8e8e8e;-webkit-text-stroke:0.3px #111111">0</div>
<div class="m" style="left:155px;top:1411.32px;color:#8e8e8e;-webkit-text-stroke:0.3px #111111">A</div>
<div class="ds" style="left:185.2px;top:1427px;color:#6e6836"></div>
<div class="ds" style="left:202.9px;top:1427px;color:#6e6836"></div>
<div class="dg" style="left:227px;top:1420px;color:#928d50;opacity:.55;height:1.6px"></div>
<div class="m" style="left:239.8px;top:1411.32px;color:#928d50;-webkit-text-stroke:0.3px #111111">I</div>
<div class="m" style="left:258.6px;top:1411.32px;color:#928d50;-webkit-text-stroke:0.3px #111111">9</div>
<div class="m z" style="left:277.3px;top:1411.32px;color:#928d50;-webkit-text-stroke:0.3px #111111">0</div>
<div class="dg" style="left:329.55px;top:1420px;color:#585858"></div>
<div class="dg" style="left:346.95px;top:1420px;color:#585858"></div>
<div class="dg" style="left:364.45px;top:1420px;color:#585858"></div>
<div class="ds" style="left:385.85px;top:1420px;color:#666666"></div>
<div class="ds" style="left:403.45px;top:1420px;color:#666666"></div>
<div class="ds" style="left:426.55px;top:1427px;color:#6e6836"></div>
<div class="ds" style="left:444.15px;top:1427px;color:#6e6836"></div>
<div class="dg" style="left:468.25px;top:1420px;color:#585858"></div>
<div class="dg" style="left:486.25px;top:1420px;color:#585858"></div>
<div class="dg" style="left:505.95px;top:1420px;color:#585858"></div>
<div class="dg" style="left:523.55px;top:1420px;color:#585858"></div>
<div class="dg" style="left:570.7px;top:1420px;color:#585858"></div>
<div class="dg" style="left:588.1px;top:1420px;color:#585858"></div>
<div class="dg" style="left:605.6px;top:1420px;color:#585858"></div>
<div class="ds" style="left:627px;top:1420px;color:#666666"></div>
<div class="ds" style="left:644.6px;top:1420px;color:#666666"></div>
<div class="ds" style="left:667.7px;top:1427px;color:#6e6836"></div>
<div class="ds" style="left:685.3px;top:1427px;color:#6e6836"></div>
<div class="dg" style="left:709.4px;top:1420px;color:#585858"></div>
<div class="dg" style="left:727.4px;top:1420px;color:#585858"></div>
<div class="dg" style="left:747.1px;top:1420px;color:#585858"></div>
<div class="dg" style="left:764.7px;top:1420px;color:#585858"></div>
<div class="dg" style="left:811.85px;top:1420px;color:#585858"></div>
<div class="dg" style="left:829.25px;top:1420px;color:#585858"></div>
<div class="dg" style="left:846.75px;top:1420px;color:#585858"></div>
<div class="ds" style="left:868.15px;top:1420px;color:#666666"></div>
<div class="ds" style="left:885.75px;top:1420px;color:#666666"></div>
<div class="ds" style="left:908.85px;top:1427px;color:#6e6836"></div>
<div class="ds" style="left:926.45px;top:1427px;color:#6e6836"></div>
<div class="dg" style="left:950.55px;top:1420px;color:#585858"></div>
<div class="dg" style="left:968.55px;top:1420px;color:#585858"></div>
<div class="dg" style="left:988.25px;top:1420px;color:#585858"></div>
<div class="dg" style="left:1005.85px;top:1420px;color:#585858"></div>
<div class="dg" style="left:1053px;top:1420px;color:#585858"></div>
<div class="dg" style="left:1070.4px;top:1420px;color:#585858"></div>
<div class="dg" style="left:1087.9px;top:1420px;color:#585858"></div>
<div class="ds" style="left:1109.3px;top:1420px;color:#666666"></div>
<div class="ds" style="left:1126.9px;top:1420px;color:#666666"></div>
<div class="ds" style="left:1150px;top:1427px;color:#6e6836"></div>
<div class="ds" style="left:1167.6px;top:1427px;color:#6e6836"></div>
<div class="dg" style="left:1191.7px;top:1420px;color:#585858"></div>
<div class="dg" style="left:1209.7px;top:1420px;color:#585858"></div>
<div class="dg" style="left:1229.4px;top:1420px;color:#585858"></div>
<div class="dg" style="left:1247px;top:1420px;color:#585858"></div>
<div class="dg" style="left:1294.15px;top:1420px;color:#585858"></div>
<div class="dg" style="left:1311.55px;top:1420px;color:#585858"></div>
<div class="dg" style="left:1329.05px;top:1420px;color:#585858"></div>
<div class="ds" style="left:1350.45px;top:1420px;color:#666666"></div>
<div class="ds" style="left:1368.05px;top:1420px;color:#666666"></div>
<div class="ds" style="left:1391.15px;top:1427px;color:#6e6836"></div>
<div class="ds" style="left:1408.75px;top:1427px;color:#6e6836"></div>
<div class="dg" style="left:1432.85px;top:1420px;color:#585858"></div>
<div class="dg" style="left:1450.85px;top:1420px;color:#585858"></div>
<div class="dg" style="left:1470.55px;top:1420px;color:#585858"></div>
<div class="dg" style="left:1488.15px;top:1420px;color:#585858"></div>
<div class="dg" style="left:1535.3px;top:1420px;color:#585858"></div>
<div class="dg" style="left:1552.7px;top:1420px;color:#585858"></div>
<div class="dg" style="left:1570.2px;top:1420px;color:#585858"></div>
<div class="ds" style="left:1591.6px;top:1420px;color:#666666"></div>
<div class="ds" style="left:1609.2px;top:1420px;color:#666666"></div>
<div class="ds" style="left:1632.3px;top:1427px;color:#6e6836"></div>
<div class="ds" style="left:1649.9px;top:1427px;color:#6e6836"></div>
<div class="dg" style="left:1674px;top:1420px;color:#585858"></div>
<div class="dg" style="left:1692px;top:1420px;color:#585858"></div>
<div class="dg" style="left:1711.7px;top:1420px;color:#585858"></div>
<div class="dg" style="left:1729.3px;top:1420px;color:#585858"></div>
<div class="m" style="left:18.1px;top:1441.78px;color:#8c8c8c;-webkit-text-stroke:0.3px #111111">4</div>
<div class="m" style="left:35.8px;top:1441.78px;color:#8c8c8c;-webkit-text-stroke:0.3px #111111">6</div>
<div class="m" style="left:83.3px;top:1441.78px;color:#8e8e8e;-webkit-text-stroke:0.3px #111111">F</div>
<div class="dash" style="left:104.6px;top:1452.33px;color:#8e8e8e"></div>
<div class="m" style="left:117.8px;top:1441.78px;color:#8e8e8e;-webkit-text-stroke:0.3px #111111">5</div>
<div class="m z" style="left:137.4px;top:1441.78px;color:#8e8e8e;-webkit-text-stroke:0.3px #111111">0</div>
<div class="m" style="left:155px;top:1441.78px;color:#8e8e8e;-webkit-text-stroke:0.3px #111111">A</div>
<div class="ds" style="left:185.2px;top:1457px;color:#6e6836"></div>
<div class="ds" style="left:202.9px;top:1457px;color:#6e6836"></div>
<div class="dg" style="left:227px;top:1451px;color:#bb6d3c;opacity:.55;height:1.6px"></div>
<div class="m" style="left:239.8px;top:1441.78px;color:#bb6d3c;-webkit-text-stroke:0.3px #111111">U</div>
<div class="m" style="left:258.6px;top:1441.78px;color:#bb6d3c;-webkit-text-stroke:0.3px #111111">2</div>
<div class="m" style="left:277.3px;top:1441.78px;color:#bb6d3c;-webkit-text-stroke:0.3px #111111">5</div>
<div class="dg" style="left:329.55px;top:1451px;color:#585858"></div>
<div class="dg" style="left:346.95px;top:1451px;color:#585858"></div>
<div class="dg" style="left:364.45px;top:1451px;color:#585858"></div>
<div class="ds" style="left:385.85px;top:1451px;color:#666666"></div>
<div class="ds" style="left:403.45px;top:1451px;color:#666666"></div>
<div class="ds" style="left:426.55px;top:1457px;color:#6e6836"></div>
<div class="ds" style="left:444.15px;top:1457px;color:#6e6836"></div>
<div class="dg" style="left:468.25px;top:1451px;color:#585858"></div>
<div class="dg" style="left:486.25px;top:1451px;color:#585858"></div>
<div class="dg" style="left:505.95px;top:1451px;color:#585858"></div>
<div class="dg" style="left:523.55px;top:1451px;color:#585858"></div>
<div class="dg" style="left:570.7px;top:1451px;color:#585858"></div>
<div class="dg" style="left:588.1px;top:1451px;color:#585858"></div>
<div class="dg" style="left:605.6px;top:1451px;color:#585858"></div>
<div class="ds" style="left:627px;top:1451px;color:#666666"></div>
<div class="ds" style="left:644.6px;top:1451px;color:#666666"></div>
<div class="ds" style="left:667.7px;top:1457px;color:#6e6836"></div>
<div class="ds" style="left:685.3px;top:1457px;color:#6e6836"></div>
<div class="dg" style="left:709.4px;top:1451px;color:#585858"></div>
<div class="dg" style="left:727.4px;top:1451px;color:#585858"></div>
<div class="dg" style="left:747.1px;top:1451px;color:#585858"></div>
<div class="dg" style="left:764.7px;top:1451px;color:#585858"></div>
<div class="dg" style="left:811.85px;top:1451px;color:#585858"></div>
<div class="dg" style="left:829.25px;top:1451px;color:#585858"></div>
<div class="dg" style="left:846.75px;top:1451px;color:#585858"></div>
<div class="ds" style="left:868.15px;top:1451px;color:#666666"></div>
<div class="ds" style="left:885.75px;top:1451px;color:#666666"></div>
<div class="ds" style="left:908.85px;top:1457px;color:#6e6836"></div>
<div class="ds" style="left:926.45px;top:1457px;color:#6e6836"></div>
<div class="dg" style="left:950.55px;top:1451px;color:#585858"></div>
<div class="dg" style="left:968.55px;top:1451px;color:#585858"></div>
<div class="dg" style="left:988.25px;top:1451px;color:#585858"></div>
<div class="dg" style="left:1005.85px;top:1451px;color:#585858"></div>
<div class="dg" style="left:1053px;top:1451px;color:#585858"></div>
<div class="dg" style="left:1070.4px;top:1451px;color:#585858"></div>
<div class="dg" style="left:1087.9px;top:1451px;color:#585858"></div>
<div class="ds" style="left:1109.3px;top:1451px;color:#666666"></div>
<div class="ds" style="left:1126.9px;top:1451px;color:#666666"></div>
<div class="ds" style="left:1150px;top:1457px;color:#6e6836"></div>
<div class="ds" style="left:1167.6px;top:1457px;color:#6e6836"></div>
<div class="dg" style="left:1191.7px;top:1451px;color:#585858"></div>
<div class="dg" style="left:1209.7px;top:1451px;color:#585858"></div>
<div class="dg" style="left:1229.4px;top:1451px;color:#585858"></div>
<div class="dg" style="left:1247px;top:1451px;color:#585858"></div>
<div class="dg" style="left:1294.15px;top:1451px;color:#585858"></div>
<div class="dg" style="left:1311.55px;top:1451px;color:#585858"></div>
<div class="dg" style="left:1329.05px;top:1451px;color:#585858"></div>
<div class="ds" style="left:1350.45px;top:1451px;color:#666666"></div>
<div class="ds" style="left:1368.05px;top:1451px;color:#666666"></div>
<div class="ds" style="left:1391.15px;top:1457px;color:#6e6836"></div>
<div class="ds" style="left:1408.75px;top:1457px;color:#6e6836"></div>
<div class="dg" style="left:1432.85px;top:1451px;color:#585858"></div>
<div class="dg" style="left:1450.85px;top:1451px;color:#585858"></div>
<div class="dg" style="left:1470.55px;top:1451px;color:#585858"></div>
<div class="dg" style="left:1488.15px;top:1451px;color:#585858"></div>
<div class="dg" style="left:1535.3px;top:1451px;color:#585858"></div>
<div class="dg" style="left:1552.7px;top:1451px;color:#585858"></div>
<div class="dg" style="left:1570.2px;top:1451px;color:#585858"></div>
<div class="ds" style="left:1591.6px;top:1451px;color:#666666"></div>
<div class="ds" style="left:1609.2px;top:1451px;color:#666666"></div>
<div class="ds" style="left:1632.3px;top:1457px;color:#6e6836"></div>
<div class="ds" style="left:1649.9px;top:1457px;color:#6e6836"></div>
<div class="dg" style="left:1674px;top:1451px;color:#585858"></div>
<div class="dg" style="left:1692px;top:1451px;color:#585858"></div>
<div class="dg" style="left:1711.7px;top:1451px;color:#585858"></div>
<div class="dg" style="left:1729.3px;top:1451px;color:#585858"></div>
<div class="m" style="left:18.1px;top:1472.24px;color:#8c8c8c;-webkit-text-stroke:0.3px #111111">4</div>
<div class="m" style="left:35.8px;top:1472.24px;color:#8c8c8c;-webkit-text-stroke:0.3px #111111">7</div>
<div class="m" style="left:83.3px;top:1472.24px;color:#8e8e8e;-webkit-text-stroke:0.3px #111111">E</div>
<div class="dash" style="left:104.6px;top:1482.79px;color:#8e8e8e"></div>
<div class="m" style="left:117.8px;top:1472.24px;color:#8e8e8e;-webkit-text-stroke:0.3px #111111">4</div>
<div class="m z" style="left:137.4px;top:1472.24px;color:#8e8e8e;-webkit-text-stroke:0.3px #111111">0</div>
<div class="m" style="left:155px;top:1472.24px;color:#8e8e8e;-webkit-text-stroke:0.3px #111111">A</div>
<div class="ds" style="left:185.2px;top:1488px;color:#6e6836"></div>
<div class="ds" style="left:202.9px;top:1488px;color:#6e6836"></div>
<div class="dg" style="left:227px;top:1481px;color:#4a8eb2;opacity:.55;height:1.6px"></div>
<div class="m" style="left:239.8px;top:1472.24px;color:#4a8eb2;-webkit-text-stroke:0.3px #111111">Q</div>
<div class="m" style="left:258.6px;top:1472.24px;color:#4a8eb2;-webkit-text-stroke:0.3px #111111">5</div>
<div class="m" style="left:277.3px;top:1472.24px;color:#4a8eb2;-webkit-text-stroke:0.3px #111111">3</div>
<div class="dg" style="left:329.55px;top:1481px;color:#585858"></div>
<div class="dg" style="left:346.95px;top:1481px;color:#585858"></div>
<div class="dg" style="left:364.45px;top:1481px;color:#585858"></div>
<div class="ds" style="left:385.85px;top:1481px;color:#666666"></div>
<div class="ds" style="left:403.45px;top:1481px;color:#666666"></div>
<div class="ds" style="left:426.55px;top:1488px;color:#6e6836"></div>
<div class="ds" style="left:444.15px;top:1488px;color:#6e6836"></div>
<div class="dg" style="left:468.25px;top:1481px;color:#585858"></div>
<div class="dg" style="left:486.25px;top:1481px;color:#585858"></div>
<div class="dg" style="left:505.95px;top:1481px;color:#585858"></div>
<div class="dg" style="left:523.55px;top:1481px;color:#585858"></div>
<div class="dg" style="left:570.7px;top:1481px;color:#585858"></div>
<div class="dg" style="left:588.1px;top:1481px;color:#585858"></div>
<div class="dg" style="left:605.6px;top:1481px;color:#585858"></div>
<div class="ds" style="left:627px;top:1481px;color:#666666"></div>
<div class="ds" style="left:644.6px;top:1481px;color:#666666"></div>
<div class="ds" style="left:667.7px;top:1488px;color:#6e6836"></div>
<div class="ds" style="left:685.3px;top:1488px;color:#6e6836"></div>
<div class="dg" style="left:709.4px;top:1481px;color:#585858"></div>
<div class="dg" style="left:727.4px;top:1481px;color:#585858"></div>
<div class="dg" style="left:747.1px;top:1481px;color:#585858"></div>
<div class="dg" style="left:764.7px;top:1481px;color:#585858"></div>
<div class="dg" style="left:811.85px;top:1481px;color:#585858"></div>
<div class="dg" style="left:829.25px;top:1481px;color:#585858"></div>
<div class="dg" style="left:846.75px;top:1481px;color:#585858"></div>
<div class="ds" style="left:868.15px;top:1481px;color:#666666"></div>
<div class="ds" style="left:885.75px;top:1481px;color:#666666"></div>
<div class="ds" style="left:908.85px;top:1488px;color:#6e6836"></div>
<div class="ds" style="left:926.45px;top:1488px;color:#6e6836"></div>
<div class="dg" style="left:950.55px;top:1481px;color:#585858"></div>
<div class="dg" style="left:968.55px;top:1481px;color:#585858"></div>
<div class="dg" style="left:988.25px;top:1481px;color:#585858"></div>
<div class="dg" style="left:1005.85px;top:1481px;color:#585858"></div>
<div class="dg" style="left:1053px;top:1481px;color:#585858"></div>
<div class="dg" style="left:1070.4px;top:1481px;color:#585858"></div>
<div class="dg" style="left:1087.9px;top:1481px;color:#585858"></div>
<div class="ds" style="left:1109.3px;top:1481px;color:#666666"></div>
<div class="ds" style="left:1126.9px;top:1481px;color:#666666"></div>
<div class="ds" style="left:1150px;top:1488px;color:#6e6836"></div>
<div class="ds" style="left:1167.6px;top:1488px;color:#6e6836"></div>
<div class="dg" style="left:1191.7px;top:1481px;color:#585858"></div>
<div class="dg" style="left:1209.7px;top:1481px;color:#585858"></div>
<div class="dg" style="left:1229.4px;top:1481px;color:#585858"></div>
<div class="dg" style="left:1247px;top:1481px;color:#585858"></div>
<div class="dg" style="left:1294.15px;top:1481px;color:#585858"></div>
<div class="dg" style="left:1311.55px;top:1481px;color:#585858"></div>
<div class="dg" style="left:1329.05px;top:1481px;color:#585858"></div>
<div class="ds" style="left:1350.45px;top:1481px;color:#666666"></div>
<div class="ds" style="left:1368.05px;top:1481px;color:#666666"></div>
<div class="ds" style="left:1391.15px;top:1488px;color:#6e6836"></div>
<div class="ds" style="left:1408.75px;top:1488px;color:#6e6836"></div>
<div class="dg" style="left:1432.85px;top:1481px;color:#585858"></div>
<div class="dg" style="left:1450.85px;top:1481px;color:#585858"></div>
<div class="dg" style="left:1470.55px;top:1481px;color:#585858"></div>
<div class="dg" style="left:1488.15px;top:1481px;color:#585858"></div>
<div class="dg" style="left:1535.3px;top:1481px;color:#585858"></div>
<div class="dg" style="left:1552.7px;top:1481px;color:#585858"></div>
<div class="dg" style="left:1570.2px;top:1481px;color:#585858"></div>
<div class="ds" style="left:1591.6px;top:1481px;color:#666666"></div>
<div class="ds" style="left:1609.2px;top:1481px;color:#666666"></div>
<div class="ds" style="left:1632.3px;top:1488px;color:#6e6836"></div>
<div class="ds" style="left:1649.9px;top:1488px;color:#6e6836"></div>
<div class="dg" style="left:1674px;top:1481px;color:#585858"></div>
<div class="dg" style="left:1692px;top:1481px;color:#585858"></div>
<div class="dg" style="left:1711.7px;top:1481px;color:#585858"></div>
<div class="dg" style="left:1729.3px;top:1481px;color:#585858"></div>
<div class="a" style="left:3px;top:1497.42px;width:52px;height:30.46px;background:#262626"></div>
<div class="m" style="left:18.1px;top:1502.7px;color:#ffffff">4</div>
<div class="m" style="left:35.8px;top:1502.7px;color:#ffffff">8</div>
<div class="a" style="left:85px;top:1497.42px;width:211px;height:30.46px;background:#262626"></div>
<div class="m" style="left:83.3px;top:1502.7px;color:#ffffff">C</div>
<div class="m" style="left:100.3px;top:1502.7px;color:#ffffff">#</div>
<div class="m" style="left:117.8px;top:1502.7px;color:#ffffff">5</div>
<div class="m z" style="left:137.4px;top:1502.7px;color:#ffffff">0</div>
<div class="m" style="left:155px;top:1502.7px;color:#ffffff">A</div>
<div class="ds" style="left:185.2px;top:1518px;color:#a89a48"></div>
<div class="ds" style="left:202.9px;top:1518px;color:#a89a48"></div>
<div class="dg" style="left:227px;top:1511px;color:#f2e66a;opacity:.75;height:1.6px"></div>
<div class="m" style="left:239.8px;top:1502.7px;color:#f2e66a">T</div>
<div class="m" style="left:258.6px;top:1502.7px;color:#f2e66a">5</div>
<div class="m" style="left:277.3px;top:1502.7px;color:#f2e66a">6</div>
<div class="a" style="left:326.15px;top:1497.42px;width:211px;height:30.46px;background:#262626"></div>
<div class="dg" style="left:329.55px;top:1511px;color:#a4a4a4"></div>
<div class="dg" style="left:346.95px;top:1511px;color:#a4a4a4"></div>
<div class="dg" style="left:364.45px;top:1511px;color:#a4a4a4"></div>
<div class="ds" style="left:385.85px;top:1511px;color:#acacac"></div>
<div class="ds" style="left:403.45px;top:1511px;color:#acacac"></div>
<div class="ds" style="left:426.55px;top:1518px;color:#a89a48"></div>
<div class="ds" style="left:444.15px;top:1518px;color:#a89a48"></div>
<div class="dg" style="left:468.25px;top:1511px;color:#a4a4a4"></div>
<div class="dg" style="left:486.25px;top:1511px;color:#a4a4a4"></div>
<div class="dg" style="left:505.95px;top:1511px;color:#a4a4a4"></div>
<div class="dg" style="left:523.55px;top:1511px;color:#a4a4a4"></div>
<div class="a" style="left:567.3px;top:1497.42px;width:211px;height:30.46px;background:#262626"></div>
<div class="dg" style="left:570.7px;top:1511px;color:#a4a4a4"></div>
<div class="dg" style="left:588.1px;top:1511px;color:#a4a4a4"></div>
<div class="dg" style="left:605.6px;top:1511px;color:#a4a4a4"></div>
<div class="ds" style="left:627px;top:1511px;color:#acacac"></div>
<div class="ds" style="left:644.6px;top:1511px;color:#acacac"></div>
<div class="ds" style="left:667.7px;top:1518px;color:#a89a48"></div>
<div class="ds" style="left:685.3px;top:1518px;color:#a89a48"></div>
<div class="dg" style="left:709.4px;top:1511px;color:#a4a4a4"></div>
<div class="dg" style="left:727.4px;top:1511px;color:#a4a4a4"></div>
<div class="dg" style="left:747.1px;top:1511px;color:#a4a4a4"></div>
<div class="dg" style="left:764.7px;top:1511px;color:#a4a4a4"></div>
<div class="a" style="left:808.45px;top:1497.42px;width:211px;height:30.46px;background:#262626"></div>
<div class="dg" style="left:811.85px;top:1511px;color:#a4a4a4"></div>
<div class="dg" style="left:829.25px;top:1511px;color:#a4a4a4"></div>
<div class="dg" style="left:846.75px;top:1511px;color:#a4a4a4"></div>
<div class="ds" style="left:868.15px;top:1511px;color:#acacac"></div>
<div class="ds" style="left:885.75px;top:1511px;color:#acacac"></div>
<div class="ds" style="left:908.85px;top:1518px;color:#a89a48"></div>
<div class="ds" style="left:926.45px;top:1518px;color:#a89a48"></div>
<div class="dg" style="left:950.55px;top:1511px;color:#a4a4a4"></div>
<div class="dg" style="left:968.55px;top:1511px;color:#a4a4a4"></div>
<div class="dg" style="left:988.25px;top:1511px;color:#a4a4a4"></div>
<div class="dg" style="left:1005.85px;top:1511px;color:#a4a4a4"></div>
<div class="a" style="left:1049.6px;top:1497.42px;width:211px;height:30.46px;background:#262626"></div>
<div class="dg" style="left:1053px;top:1511px;color:#a4a4a4"></div>
<div class="dg" style="left:1070.4px;top:1511px;color:#a4a4a4"></div>
<div class="dg" style="left:1087.9px;top:1511px;color:#a4a4a4"></div>
<div class="ds" style="left:1109.3px;top:1511px;color:#acacac"></div>
<div class="ds" style="left:1126.9px;top:1511px;color:#acacac"></div>
<div class="ds" style="left:1150px;top:1518px;color:#a89a48"></div>
<div class="ds" style="left:1167.6px;top:1518px;color:#a89a48"></div>
<div class="dg" style="left:1191.7px;top:1511px;color:#a4a4a4"></div>
<div class="dg" style="left:1209.7px;top:1511px;color:#a4a4a4"></div>
<div class="dg" style="left:1229.4px;top:1511px;color:#a4a4a4"></div>
<div class="dg" style="left:1247px;top:1511px;color:#a4a4a4"></div>
<div class="a" style="left:1290.75px;top:1497.42px;width:211px;height:30.46px;background:#262626"></div>
<div class="dg" style="left:1294.15px;top:1511px;color:#a4a4a4"></div>
<div class="dg" style="left:1311.55px;top:1511px;color:#a4a4a4"></div>
<div class="dg" style="left:1329.05px;top:1511px;color:#a4a4a4"></div>
<div class="ds" style="left:1350.45px;top:1511px;color:#acacac"></div>
<div class="ds" style="left:1368.05px;top:1511px;color:#acacac"></div>
<div class="ds" style="left:1391.15px;top:1518px;color:#a89a48"></div>
<div class="ds" style="left:1408.75px;top:1518px;color:#a89a48"></div>
<div class="dg" style="left:1432.85px;top:1511px;color:#a4a4a4"></div>
<div class="dg" style="left:1450.85px;top:1511px;color:#a4a4a4"></div>
<div class="dg" style="left:1470.55px;top:1511px;color:#a4a4a4"></div>
<div class="dg" style="left:1488.15px;top:1511px;color:#a4a4a4"></div>
<div class="a" style="left:1531.9px;top:1497.42px;width:211px;height:30.46px;background:#262626"></div>
<div class="dg" style="left:1535.3px;top:1511px;color:#a4a4a4"></div>
<div class="dg" style="left:1552.7px;top:1511px;color:#a4a4a4"></div>
<div class="dg" style="left:1570.2px;top:1511px;color:#a4a4a4"></div>
<div class="ds" style="left:1591.6px;top:1511px;color:#acacac"></div>
<div class="ds" style="left:1609.2px;top:1511px;color:#acacac"></div>
<div class="ds" style="left:1632.3px;top:1518px;color:#a89a48"></div>
<div class="ds" style="left:1649.9px;top:1518px;color:#a89a48"></div>
<div class="dg" style="left:1674px;top:1511px;color:#a4a4a4"></div>
<div class="dg" style="left:1692px;top:1511px;color:#a4a4a4"></div>
<div class="dg" style="left:1711.7px;top:1511px;color:#a4a4a4"></div>
<div class="dg" style="left:1729.3px;top:1511px;color:#a4a4a4"></div>
<div class="m" style="left:18.1px;top:1533.16px;color:#8c8c8c;-webkit-text-stroke:0.3px #111111">4</div>
<div class="m" style="left:35.8px;top:1533.16px;color:#8c8c8c;-webkit-text-stroke:0.3px #111111">9</div>
<div class="m" style="left:83.3px;top:1533.16px;color:#8e8e8e;-webkit-text-stroke:0.3px #111111">D</div>
<div class="m" style="left:100.3px;top:1533.16px;color:#8e8e8e;-webkit-text-stroke:0.3px #111111">#</div>
<div class="m" style="left:117.8px;top:1533.16px;color:#8e8e8e;-webkit-text-stroke:0.3px #111111">5</div>
<div class="m z" style="left:137.4px;top:1533.16px;color:#8e8e8e;-webkit-text-stroke:0.3px #111111">0</div>
<div class="m" style="left:155px;top:1533.16px;color:#8e8e8e;-webkit-text-stroke:0.3px #111111">A</div>
<div class="ds" style="left:185.2px;top:1549px;color:#6e6836"></div>
<div class="ds" style="left:202.9px;top:1549px;color:#6e6836"></div>
<div class="dg" style="left:227px;top:1542px;color:#928d50;opacity:.55;height:1.6px"></div>
<div class="m" style="left:239.8px;top:1533.16px;color:#928d50;-webkit-text-stroke:0.3px #111111">O</div>
<div class="m" style="left:258.6px;top:1533.16px;color:#928d50;-webkit-text-stroke:0.3px #111111">5</div>
<div class="m" style="left:277.3px;top:1533.16px;color:#928d50;-webkit-text-stroke:0.3px #111111">4</div>
<div class="dg" style="left:329.55px;top:1542px;color:#585858"></div>
<div class="dg" style="left:346.95px;top:1542px;color:#585858"></div>
<div class="dg" style="left:364.45px;top:1542px;color:#585858"></div>
<div class="ds" style="left:385.85px;top:1542px;color:#666666"></div>
<div class="ds" style="left:403.45px;top:1542px;color:#666666"></div>
<div class="ds" style="left:426.55px;top:1549px;color:#6e6836"></div>
<div class="ds" style="left:444.15px;top:1549px;color:#6e6836"></div>
<div class="dg" style="left:468.25px;top:1542px;color:#585858"></div>
<div class="dg" style="left:486.25px;top:1542px;color:#585858"></div>
<div class="dg" style="left:505.95px;top:1542px;color:#585858"></div>
<div class="dg" style="left:523.55px;top:1542px;color:#585858"></div>
<div class="dg" style="left:570.7px;top:1542px;color:#585858"></div>
<div class="dg" style="left:588.1px;top:1542px;color:#585858"></div>
<div class="dg" style="left:605.6px;top:1542px;color:#585858"></div>
<div class="ds" style="left:627px;top:1542px;color:#666666"></div>
<div class="ds" style="left:644.6px;top:1542px;color:#666666"></div>
<div class="ds" style="left:667.7px;top:1549px;color:#6e6836"></div>
<div class="ds" style="left:685.3px;top:1549px;color:#6e6836"></div>
<div class="dg" style="left:709.4px;top:1542px;color:#585858"></div>
<div class="dg" style="left:727.4px;top:1542px;color:#585858"></div>
<div class="dg" style="left:747.1px;top:1542px;color:#585858"></div>
<div class="dg" style="left:764.7px;top:1542px;color:#585858"></div>
<div class="dg" style="left:811.85px;top:1542px;color:#585858"></div>
<div class="dg" style="left:829.25px;top:1542px;color:#585858"></div>
<div class="dg" style="left:846.75px;top:1542px;color:#585858"></div>
<div class="ds" style="left:868.15px;top:1542px;color:#666666"></div>
<div class="ds" style="left:885.75px;top:1542px;color:#666666"></div>
<div class="ds" style="left:908.85px;top:1549px;color:#6e6836"></div>
<div class="ds" style="left:926.45px;top:1549px;color:#6e6836"></div>
<div class="dg" style="left:950.55px;top:1542px;color:#585858"></div>
<div class="dg" style="left:968.55px;top:1542px;color:#585858"></div>
<div class="dg" style="left:988.25px;top:1542px;color:#585858"></div>
<div class="dg" style="left:1005.85px;top:1542px;color:#585858"></div>
<div class="dg" style="left:1053px;top:1542px;color:#585858"></div>
<div class="dg" style="left:1070.4px;top:1542px;color:#585858"></div>
<div class="dg" style="left:1087.9px;top:1542px;color:#585858"></div>
<div class="ds" style="left:1109.3px;top:1542px;color:#666666"></div>
<div class="ds" style="left:1126.9px;top:1542px;color:#666666"></div>
<div class="ds" style="left:1150px;top:1549px;color:#6e6836"></div>
<div class="ds" style="left:1167.6px;top:1549px;color:#6e6836"></div>
<div class="dg" style="left:1191.7px;top:1542px;color:#585858"></div>
<div class="dg" style="left:1209.7px;top:1542px;color:#585858"></div>
<div class="dg" style="left:1229.4px;top:1542px;color:#585858"></div>
<div class="dg" style="left:1247px;top:1542px;color:#585858"></div>
<div class="dg" style="left:1294.15px;top:1542px;color:#585858"></div>
<div class="dg" style="left:1311.55px;top:1542px;color:#585858"></div>
<div class="dg" style="left:1329.05px;top:1542px;color:#585858"></div>
<div class="ds" style="left:1350.45px;top:1542px;color:#666666"></div>
<div class="ds" style="left:1368.05px;top:1542px;color:#666666"></div>
<div class="ds" style="left:1391.15px;top:1549px;color:#6e6836"></div>
<div class="ds" style="left:1408.75px;top:1549px;color:#6e6836"></div>
<div class="dg" style="left:1432.85px;top:1542px;color:#585858"></div>
<div class="dg" style="left:1450.85px;top:1542px;color:#585858"></div>
<div class="dg" style="left:1470.55px;top:1542px;color:#585858"></div>
<div class="dg" style="left:1488.15px;top:1542px;color:#585858"></div>
<div class="dg" style="left:1535.3px;top:1542px;color:#585858"></div>
<div class="dg" style="left:1552.7px;top:1542px;color:#585858"></div>
<div class="dg" style="left:1570.2px;top:1542px;color:#585858"></div>
<div class="ds" style="left:1591.6px;top:1542px;color:#666666"></div>
<div class="ds" style="left:1609.2px;top:1542px;color:#666666"></div>
<div class="ds" style="left:1632.3px;top:1549px;color:#6e6836"></div>
<div class="ds" style="left:1649.9px;top:1549px;color:#6e6836"></div>
<div class="dg" style="left:1674px;top:1542px;color:#585858"></div>
<div class="dg" style="left:1692px;top:1542px;color:#585858"></div>
<div class="dg" style="left:1711.7px;top:1542px;color:#585858"></div>
<div class="dg" style="left:1729.3px;top:1542px;color:#585858"></div>
<div class="m" style="left:18.1px;top:1563.62px;color:#8c8c8c;-webkit-text-stroke:0.3px #111111">5</div>
<div class="m z" style="left:35.8px;top:1563.62px;color:#8c8c8c;-webkit-text-stroke:0.3px #111111">0</div>
<div class="m" style="left:83.3px;top:1563.62px;color:#8e8e8e;-webkit-text-stroke:0.3px #111111">E</div>
<div class="dash" style="left:104.6px;top:1574.17px;color:#8e8e8e"></div>
<div class="m" style="left:117.8px;top:1563.62px;color:#8e8e8e;-webkit-text-stroke:0.3px #111111">6</div>
<div class="m z" style="left:137.4px;top:1563.62px;color:#8e8e8e;-webkit-text-stroke:0.3px #111111">0</div>
<div class="m" style="left:155px;top:1563.62px;color:#8e8e8e;-webkit-text-stroke:0.3px #111111">A</div>
<div class="ds" style="left:185.2px;top:1579px;color:#6e6836"></div>
<div class="ds" style="left:202.9px;top:1579px;color:#6e6836"></div>
<div class="dg" style="left:227px;top:1572px;color:#bb6d3c;opacity:.55;height:1.6px"></div>
<div class="m" style="left:239.8px;top:1563.62px;color:#bb6d3c;-webkit-text-stroke:0.3px #111111">A</div>
<div class="m" style="left:258.6px;top:1563.62px;color:#bb6d3c;-webkit-text-stroke:0.3px #111111">6</div>
<div class="m z" style="left:277.3px;top:1563.62px;color:#bb6d3c;-webkit-text-stroke:0.3px #111111">0</div>
<div class="dg" style="left:329.55px;top:1572px;color:#585858"></div>
<div class="dg" style="left:346.95px;top:1572px;color:#585858"></div>
<div class="dg" style="left:364.45px;top:1572px;color:#585858"></div>
<div class="ds" style="left:385.85px;top:1572px;color:#666666"></div>
<div class="ds" style="left:403.45px;top:1572px;color:#666666"></div>
<div class="ds" style="left:426.55px;top:1579px;color:#6e6836"></div>
<div class="ds" style="left:444.15px;top:1579px;color:#6e6836"></div>
<div class="dg" style="left:468.25px;top:1572px;color:#585858"></div>
<div class="dg" style="left:486.25px;top:1572px;color:#585858"></div>
<div class="dg" style="left:505.95px;top:1572px;color:#585858"></div>
<div class="dg" style="left:523.55px;top:1572px;color:#585858"></div>
<div class="dg" style="left:570.7px;top:1572px;color:#585858"></div>
<div class="dg" style="left:588.1px;top:1572px;color:#585858"></div>
<div class="dg" style="left:605.6px;top:1572px;color:#585858"></div>
<div class="ds" style="left:627px;top:1572px;color:#666666"></div>
<div class="ds" style="left:644.6px;top:1572px;color:#666666"></div>
<div class="ds" style="left:667.7px;top:1579px;color:#6e6836"></div>
<div class="ds" style="left:685.3px;top:1579px;color:#6e6836"></div>
<div class="dg" style="left:709.4px;top:1572px;color:#585858"></div>
<div class="dg" style="left:727.4px;top:1572px;color:#585858"></div>
<div class="dg" style="left:747.1px;top:1572px;color:#585858"></div>
<div class="dg" style="left:764.7px;top:1572px;color:#585858"></div>
<div class="dg" style="left:811.85px;top:1572px;color:#585858"></div>
<div class="dg" style="left:829.25px;top:1572px;color:#585858"></div>
<div class="dg" style="left:846.75px;top:1572px;color:#585858"></div>
<div class="ds" style="left:868.15px;top:1572px;color:#666666"></div>
<div class="ds" style="left:885.75px;top:1572px;color:#666666"></div>
<div class="ds" style="left:908.85px;top:1579px;color:#6e6836"></div>
<div class="ds" style="left:926.45px;top:1579px;color:#6e6836"></div>
<div class="dg" style="left:950.55px;top:1572px;color:#585858"></div>
<div class="dg" style="left:968.55px;top:1572px;color:#585858"></div>
<div class="dg" style="left:988.25px;top:1572px;color:#585858"></div>
<div class="dg" style="left:1005.85px;top:1572px;color:#585858"></div>
<div class="dg" style="left:1053px;top:1572px;color:#585858"></div>
<div class="dg" style="left:1070.4px;top:1572px;color:#585858"></div>
<div class="dg" style="left:1087.9px;top:1572px;color:#585858"></div>
<div class="ds" style="left:1109.3px;top:1572px;color:#666666"></div>
<div class="ds" style="left:1126.9px;top:1572px;color:#666666"></div>
<div class="ds" style="left:1150px;top:1579px;color:#6e6836"></div>
<div class="ds" style="left:1167.6px;top:1579px;color:#6e6836"></div>
<div class="dg" style="left:1191.7px;top:1572px;color:#585858"></div>
<div class="dg" style="left:1209.7px;top:1572px;color:#585858"></div>
<div class="dg" style="left:1229.4px;top:1572px;color:#585858"></div>
<div class="dg" style="left:1247px;top:1572px;color:#585858"></div>
<div class="dg" style="left:1294.15px;top:1572px;color:#585858"></div>
<div class="dg" style="left:1311.55px;top:1572px;color:#585858"></div>
<div class="dg" style="left:1329.05px;top:1572px;color:#585858"></div>
<div class="ds" style="left:1350.45px;top:1572px;color:#666666"></div>
<div class="ds" style="left:1368.05px;top:1572px;color:#666666"></div>
<div class="ds" style="left:1391.15px;top:1579px;color:#6e6836"></div>
<div class="ds" style="left:1408.75px;top:1579px;color:#6e6836"></div>
<div class="dg" style="left:1432.85px;top:1572px;color:#585858"></div>
<div class="dg" style="left:1450.85px;top:1572px;color:#585858"></div>
<div class="dg" style="left:1470.55px;top:1572px;color:#585858"></div>
<div class="dg" style="left:1488.15px;top:1572px;color:#585858"></div>
<div class="dg" style="left:1535.3px;top:1572px;color:#585858"></div>
<div class="dg" style="left:1552.7px;top:1572px;color:#585858"></div>
<div class="dg" style="left:1570.2px;top:1572px;color:#585858"></div>
<div class="ds" style="left:1591.6px;top:1572px;color:#666666"></div>
<div class="ds" style="left:1609.2px;top:1572px;color:#666666"></div>
<div class="ds" style="left:1632.3px;top:1579px;color:#6e6836"></div>
<div class="ds" style="left:1649.9px;top:1579px;color:#6e6836"></div>
<div class="dg" style="left:1674px;top:1572px;color:#585858"></div>
<div class="dg" style="left:1692px;top:1572px;color:#585858"></div>
<div class="dg" style="left:1711.7px;top:1572px;color:#585858"></div>
<div class="dg" style="left:1729.3px;top:1572px;color:#585858"></div>
<div class="a" style="left:68px;top:1574.2px;width:7.2px;height:30px;background:#36a3bc"></div>
<div class="a" style="left:307px;top:1574.2px;width:7.2px;height:30px;background:#36a3bc"></div>
<div class="a" style="left:314px;top:640px;width:1420px;height:4.5px;background:#0b0b0b"></div>
<div class="a" style="left:318.4px;top:25px;width:1411px;height:616px;background:#050505"></div>
<div class="a" style="left:319.2px;top:26.2px;width:1408.8px;height:613.8px;background:#2b2b2b"></div>
<div class="a" style="left:321.2px;top:26px;width:1405.2px;height:53.8px;background:linear-gradient(#2e2e2e 0,#2e2e2e 2.4px,#3a3a3a 3px,#343434 4.5px,#363636 45%,#3d3d3d calc(100% - 2px),#363636 100%)"></div>
<div class="a" style="left:321.2px;top:79.8px;width:1405.2px;height:4.6px;background:#232323"></div>
<div class="a" style="left:321.2px;top:84.4px;width:1405.2px;height:1px;background:#393939"></div>
<div class="a" style="left:321.2px;top:85.4px;width:1405.2px;height:552.6px;background:#333333"></div>
<div class="a" style="left:328.4px;top:35.9px;width:46.2px;height:36.8px;border:1px solid #111;border-radius:3px;background:linear-gradient(#333 0,#303030 45%,#282828 55%,#272727 100%)"></div>
<svg class="a" style="left:0;top:0" width="1736" height="100"><path d="M343 46.5 L359.7 63.2 M359.7 46.5 L343 63.2" stroke="#cfcfcf" stroke-width="2.6" stroke-linecap="round"/></svg>
<div class="t" style="left:949.05px;top:42.54px;font-size:25px;line-height:25px;font-weight:bold;color:#ffffff;transform:scaleX(1.1729);-webkit-text-stroke:0.5px #ffffff">Paketti Fill</div>
<div class="t" style="left:363.63px;top:94.34px;font-size:25px;line-height:25px;font-weight:bold;color:#ffffff;transform:scaleX(1.0909);-webkit-text-stroke:0.5px #ffffff">Events</div>
<div class="t" style="left:544.5px;top:94.14px;font-size:25px;line-height:25px;font-weight:bold;color:#ffffff;transform:scaleX(1.1216);-webkit-text-stroke:0.5px #ffffff">EditStep</div>
<div class="t" style="left:702.1px;top:94.64px;font-size:25px;line-height:25px;font-weight:bold;color:#ffffff;transform:scaleX(1.0633);-webkit-text-stroke:0.5px #ffffff">Where?</div>
<div class="t" style="left:982.13px;top:94.14px;font-size:25px;line-height:25px;font-weight:bold;color:#ffffff;transform:scaleX(1.0940);-webkit-text-stroke:0.5px #ffffff">From Sample</div>
<div class="t" style="left:1187.9px;top:94.14px;font-size:25px;line-height:25px;font-weight:bold;color:#ffffff;transform:scaleX(1.0909);-webkit-text-stroke:0.5px #ffffff">To Sample</div>
<div class="t" style="left:1419.93px;top:94.14px;font-size:25px;line-height:25px;font-weight:bold;color:#ffffff;transform:scaleX(1.0981);-webkit-text-stroke:0.5px #ffffff">Min</div>
<div class="t" style="left:1605.03px;top:94.14px;font-size:25px;line-height:25px;font-weight:bold;color:#ffffff;transform:scaleX(1.0973);-webkit-text-stroke:0.5px #ffffff">Max</div>
<div class="t" style="left:700.92px;top:178.24px;font-size:25px;line-height:25px;font-weight:bold;color:#ffffff;transform:scaleX(1.1086);-webkit-text-stroke:0.5px #ffffff">Fill Type</div>
<div class="a" style="left:333px;top:138.6px;width:163.9px;height:406.8px;background:#171717;border-radius:4px"></div>
<div class="a" style="left:333.8px;top:524.7px;width:162.3px;height:20.7px;background:linear-gradient(90deg,#3a8ca0 0,#3a8ca0 10%,#37889b 13%,#37889b 39%,#338497 42%,#338497 47%,#2d7f91 50%,#2d7f91 100%);border-radius:0 0 4px 4px;box-shadow:0 0 0 .6px #1a1a1a"></div>
<div class="a" style="left:328.4px;top:497.3px;width:173.1px;height:27.4px;border:1.2px solid #121212;border-radius:4px;background:linear-gradient(#323232 0,#303030 45%,#282828 52%,#272727 100%)"></div>
<div class="a" style="left:520.2px;top:138.6px;width:163.8px;height:406.8px;background:#171717;border-radius:4px"></div>
<div class="a" style="left:521px;top:369.9px;width:162.2px;height:175.5px;background:linear-gradient(90deg,#2e6e79 0,#2e6e79 10%,#2b6a74 13%,#2b6a74 39%,#27656f 42%,#27656f 47%,#23616d 50%,#23616d 100%);border-radius:0 0 4px 4px;box-shadow:0 0 0 .6px #1a1a1a"></div>
<div class="a" style="left:515.6px;top:342.5px;width:173px;height:27.4px;border:1.2px solid #121212;border-radius:4px;background:linear-gradient(#323232 0,#303030 45%,#282828 52%,#272727 100%)"></div>
<div class="a" style="left:988.4px;top:138.6px;width:163.6px;height:406.8px;background:#171717;border-radius:4px"></div>
<div class="a" style="left:983.8px;top:518.8px;width:172.8px;height:27.4px;border:1.2px solid #121212;border-radius:4px;background:linear-gradient(#323232 0,#303030 45%,#282828 52%,#272727 100%)"></div>
<div class="a" style="left:1176.7px;top:138.6px;width:162.5px;height:406.8px;background:#171717;border-radius:4px"></div>
<div class="a" style="left:1177.5px;top:161.6px;width:160.9px;height:383.8px;background:linear-gradient(90deg,#3a8ca0 0,#3a8ca0 10%,#37889b 13%,#37889b 39%,#338497 42%,#338497 47%,#2d7f91 50%,#2d7f91 100%);border-radius:0 0 4px 4px;box-shadow:0 0 0 .6px #1a1a1a"></div>
<div class="a" style="left:1172.1px;top:134.2px;width:171.7px;height:27.4px;border:1.2px solid #121212;border-radius:4px;background:linear-gradient(#323232 0,#303030 45%,#282828 52%,#272727 100%)"></div>
<div class="a" style="left:1363px;top:138.6px;width:163.9px;height:406.8px;background:#171717;border-radius:4px"></div>
<div class="a" style="left:1363.8px;top:471px;width:162.3px;height:74.4px;background:linear-gradient(90deg,#3a8ca0 0,#3a8ca0 10%,#37889b 13%,#37889b 39%,#338497 42%,#338497 47%,#2d7f91 50%,#2d7f91 100%);border-radius:0 0 4px 4px;box-shadow:0 0 0 .6px #1a1a1a"></div>
<div class="a" style="left:1358.4px;top:443.6px;width:173.1px;height:27.4px;border:1.2px solid #121212;border-radius:4px;background:linear-gradient(#323232 0,#303030 45%,#282828 52%,#272727 100%)"></div>
<div class="a" style="left:1550px;top:138.6px;width:164px;height:406.8px;background:#171717;border-radius:4px"></div>
<div class="a" style="left:1550.8px;top:161.6px;width:162.4px;height:383.8px;background:linear-gradient(90deg,#3a8ca0 0,#3a8ca0 10%,#37889b 13%,#37889b 39%,#338497 42%,#338497 47%,#2d7f91 50%,#2d7f91 100%);border-radius:0 0 4px 4px;box-shadow:0 0 0 .6px #1a1a1a"></div>
<div class="a" style="left:1545.4px;top:134.2px;width:173.2px;height:27.4px;border:1.2px solid #121212;border-radius:4px;background:linear-gradient(#323232 0,#303030 45%,#282828 52%,#272727 100%)"></div>
<div class="a" style="left:323.8px;top:555.8px;width:182.6px;height:36.9px;background:#141414;border:1px solid #0e0e0e;border-radius:5px"></div>
<svg class="a" style="left:365.2px;top:565.8px" width="12" height="15"><path d="M10.5 0 L10.5 14.4 L0 7.2 Z" fill="#aaaaaa"/></svg>
<svg class="a" style="left:451.9px;top:565.8px" width="12" height="15"><path d="M0 0 L0 14.4 L10.8 7.2 Z" fill="#aaaaaa"/></svg>
<div class="a" style="left:510.9px;top:555.8px;width:182.6px;height:36.9px;background:#141414;border:1px solid #0e0e0e;border-radius:5px"></div>
<svg class="a" style="left:552.3px;top:565.8px" width="12" height="15"><path d="M10.5 0 L10.5 14.4 L0 7.2 Z" fill="#5e5e5e"/></svg>
<svg class="a" style="left:639px;top:565.8px" width="12" height="15"><path d="M0 0 L0 14.4 L10.8 7.2 Z" fill="#5e5e5e"/></svg>
<div class="a" style="left:979.2px;top:555.8px;width:182.6px;height:36.9px;background:#141414;border:1px solid #0e0e0e;border-radius:5px"></div>
<svg class="a" style="left:1020.6px;top:565.8px" width="12" height="15"><path d="M10.5 0 L10.5 14.4 L0 7.2 Z" fill="#aaaaaa"/></svg>
<svg class="a" style="left:1107.3px;top:565.8px" width="12" height="15"><path d="M0 0 L0 14.4 L10.8 7.2 Z" fill="#aaaaaa"/></svg>
<div class="a" style="left:1166.3px;top:555.8px;width:182.6px;height:36.9px;background:#141414;border:1px solid #0e0e0e;border-radius:5px"></div>
<svg class="a" style="left:1207.7px;top:565.8px" width="12" height="15"><path d="M10.5 0 L10.5 14.4 L0 7.2 Z" fill="#aaaaaa"/></svg>
<svg class="a" style="left:1294.4px;top:565.8px" width="12" height="15"><path d="M0 0 L0 14.4 L10.8 7.2 Z" fill="#aaaaaa"/></svg>
<div class="a" style="left:1353.4px;top:555.8px;width:182.6px;height:36.9px;background:#141414;border:1px solid #0e0e0e;border-radius:5px"></div>
<svg class="a" style="left:1394.8px;top:565.8px" width="12" height="15"><path d="M10.5 0 L10.5 14.4 L0 7.2 Z" fill="#aaaaaa"/></svg>
<svg class="a" style="left:1481.5px;top:565.8px" width="12" height="15"><path d="M0 0 L0 14.4 L10.8 7.2 Z" fill="#aaaaaa"/></svg>
<div class="a" style="left:1540.5px;top:555.8px;width:182.6px;height:36.9px;background:#141414;border:1px solid #0e0e0e;border-radius:5px"></div>
<svg class="a" style="left:1581.9px;top:565.8px" width="12" height="15"><path d="M10.5 0 L10.5 14.4 L0 7.2 Z" fill="#aaaaaa"/></svg>
<svg class="a" style="left:1668.6px;top:565.8px" width="12" height="15"><path d="M0 0 L0 14.4 L10.8 7.2 Z" fill="#aaaaaa"/></svg>
<div class="t" style="left:388px;top:605.24px;font-size:25px;line-height:25px;font-weight:bold;color:#ffffff;transform:scaleX(1.0240);-webkit-text-stroke:0.5px #ffffff">1</div>
<div class="t" style="left:587px;top:605.24px;font-size:25px;line-height:25px;font-weight:bold;color:#ffffff;transform:scaleX(1.0240);-webkit-text-stroke:0.5px #ffffff">1</div>
<div class="t" style="left:982px;top:605.04px;font-size:25px;line-height:25px;font-weight:bold;color:#ffffff;transform:scaleX(1.1075);-webkit-text-stroke:0.5px #ffffff">slice01</div>
<div class="t" style="left:1169.3px;top:605.04px;font-size:25px;line-height:25px;font-weight:bold;color:#ffffff;transform:scaleX(1.1003);-webkit-text-stroke:0.5px #ffffff">slice33</div>
<div class="t" style="left:1356.4px;top:605.24px;font-size:25px;line-height:25px;font-weight:bold;color:#ffffff;transform:scaleX(1.1098);-webkit-text-stroke:0.5px #ffffff">33</div>
<div class="t" style="left:1543.8px;top:605.24px;font-size:25px;line-height:25px;font-weight:bold;color:#ffffff;transform:scaleX(1.0263);-webkit-text-stroke:0.5px #ffffff">FF</div>
<div class="a" style="left:698.3px;top:129.4px;width:275.6px;height:37.1px;background:#131313;border:1px solid #161616;border-radius:3px;overflow:hidden"><div class="a" style="left:238.7px;top:0;width:40px;height:100%;background:linear-gradient(#313131 0,#2f2f2f 48%,#292929 52%,#282828 100%);border-left:1px solid #161616"></div></div>
<svg class="a" style="left:947px;top:142.55px" width="16" height="12"><path d="M0.3 0.3 L14.8 0.3 L7.55 10.4 Z" fill="#cacaca"/></svg>
<div class="t" style="left:705.3px;top:136.38px;font-size:24px;line-height:24px;font-weight:normal;color:#3aa9c2;transform:scaleX(1.0984);-webkit-text-stroke:0.3px #3aa9c2">Euclidean</div>
<div class="a" style="left:698.3px;top:214px;width:275.6px;height:36.8px;background:#131313;border:1px solid #161616;border-radius:3px;overflow:hidden"><div class="a" style="left:238.7px;top:0;width:40px;height:100%;background:linear-gradient(#313131 0,#2f2f2f 48%,#292929 52%,#282828 100%);border-left:1px solid #161616"></div></div>
<svg class="a" style="left:947px;top:227px" width="16" height="12"><path d="M0.3 0.3 L14.8 0.3 L7.55 10.4 Z" fill="#cacaca"/></svg>
<div class="t" style="left:705.33px;top:221.08px;font-size:24px;line-height:24px;font-weight:normal;color:#3aa9c2;transform:scaleX(1.0719);-webkit-text-stroke:0.3px #3aa9c2">Random</div>
<div class="a" style="left:698.3px;top:267.6px;width:275.6px;height:37.2px;background:#131313;border:1px solid #161616;border-radius:3px;overflow:hidden"><div class="a" style="left:238.7px;top:0;width:40px;height:100%;background:linear-gradient(#313131 0,#2f2f2f 48%,#292929 52%,#282828 100%);border-left:1px solid #161616"></div></div>
<svg class="a" style="left:947px;top:280.8px" width="16" height="12"><path d="M0.3 0.3 L14.8 0.3 L7.55 10.4 Z" fill="#cacaca"/></svg>
<div class="t" style="left:706.16px;top:274.68px;font-size:24px;line-height:24px;font-weight:normal;color:#3aa9c2;transform:scaleX(1.1401);-webkit-text-stroke:0.3px #3aa9c2">&lt;No Effect&gt;</div>
<div class="a" style="left:699.1px;top:310.6px;width:35.5px;height:35.5px;background:linear-gradient(#3597ad,#3aa1b8);border-radius:5px"></div>
<svg class="a" style="left:699.1px;top:310.6px" width="36" height="36"><path d="M9.4 19.7 L14.8 25.2 L26.6 12.8" stroke="#050505" stroke-width="3.7" fill="none" stroke-linecap="round" stroke-linejoin="round"/></svg>
<div class="a" style="left:699.1px;top:352.4px;width:35.5px;height:35.9px;background:linear-gradient(#2e2e2e 0,#2c2c2c 50%,#272727 54%,#282828 100%);border:1.5px solid #1c1c1c;border-radius:5px"></div>
<div class="a" style="left:699.1px;top:394.8px;width:35.5px;height:35.5px;background:linear-gradient(#3597ad,#3aa1b8);border-radius:5px"></div>
<svg class="a" style="left:699.1px;top:394.8px" width="36" height="36"><path d="M9.4 19.7 L14.8 25.2 L26.6 12.8" stroke="#050505" stroke-width="3.7" fill="none" stroke-linecap="round" stroke-linejoin="round"/></svg>
<div class="t" style="left:742.95px;top:317.04px;font-size:25px;line-height:25px;font-weight:bold;color:#ffffff;transform:scaleX(1.0768);-webkit-text-stroke:0.5px #ffffff">Random FX</div>
<div class="t" style="left:742.95px;top:358.64px;font-size:25px;line-height:25px;font-weight:bold;color:#ffffff;transform:scaleX(1.0721);-webkit-text-stroke:0.5px #ffffff">FX Only</div>
<div class="t" style="left:742.91px;top:400.84px;font-size:25px;line-height:25px;font-weight:bold;color:#ffffff;transform:scaleX(1.1123);-webkit-text-stroke:0.5px #ffffff">Use EditStep</div>
<div class="a" style="left:698.4px;top:436.4px;width:275.5px;height:36.6px;border:1px solid #1a1a1a;border-radius:3px;background:linear-gradient(#2f2f2f 0,#2c2c2c 48%,#272727 52%,#262626 100%)"></div>
<div class="t" style="left:735.11px;top:443.28px;font-size:24px;line-height:24px;font-weight:normal;color:#d4d4d4;transform:scaleX(1.0950);-webkit-text-stroke:0.3px #d4d4d4">Configure Effects</div>
<div class="a" style="left:698.4px;top:478.7px;width:275.5px;height:36.6px;border:1px solid #1a1a1a;border-radius:3px;background:linear-gradient(#2f2f2f 0,#2c2c2c 48%,#272727 52%,#262626 100%)"></div>
<div class="t" style="left:714.91px;top:485.28px;font-size:24px;line-height:24px;font-weight:normal;color:#d4d4d4;transform:scaleX(1.0939);-webkit-text-stroke:0.3px #d4d4d4">Fill Pattern Selection</div>
<div class="a" style="left:698.4px;top:520.9px;width:275.5px;height:36.4px;border:1px solid #1a1a1a;border-radius:3px;background:linear-gradient(#2f2f2f 0,#2c2c2c 48%,#272727 52%,#262626 100%)"></div>
<div class="t" style="left:784.54px;top:527.98px;font-size:24px;line-height:24px;font-weight:normal;color:#d4d4d4;transform:scaleX(1.0608);-webkit-text-stroke:0.3px #d4d4d4">Fill Track</div>
</body></html>
